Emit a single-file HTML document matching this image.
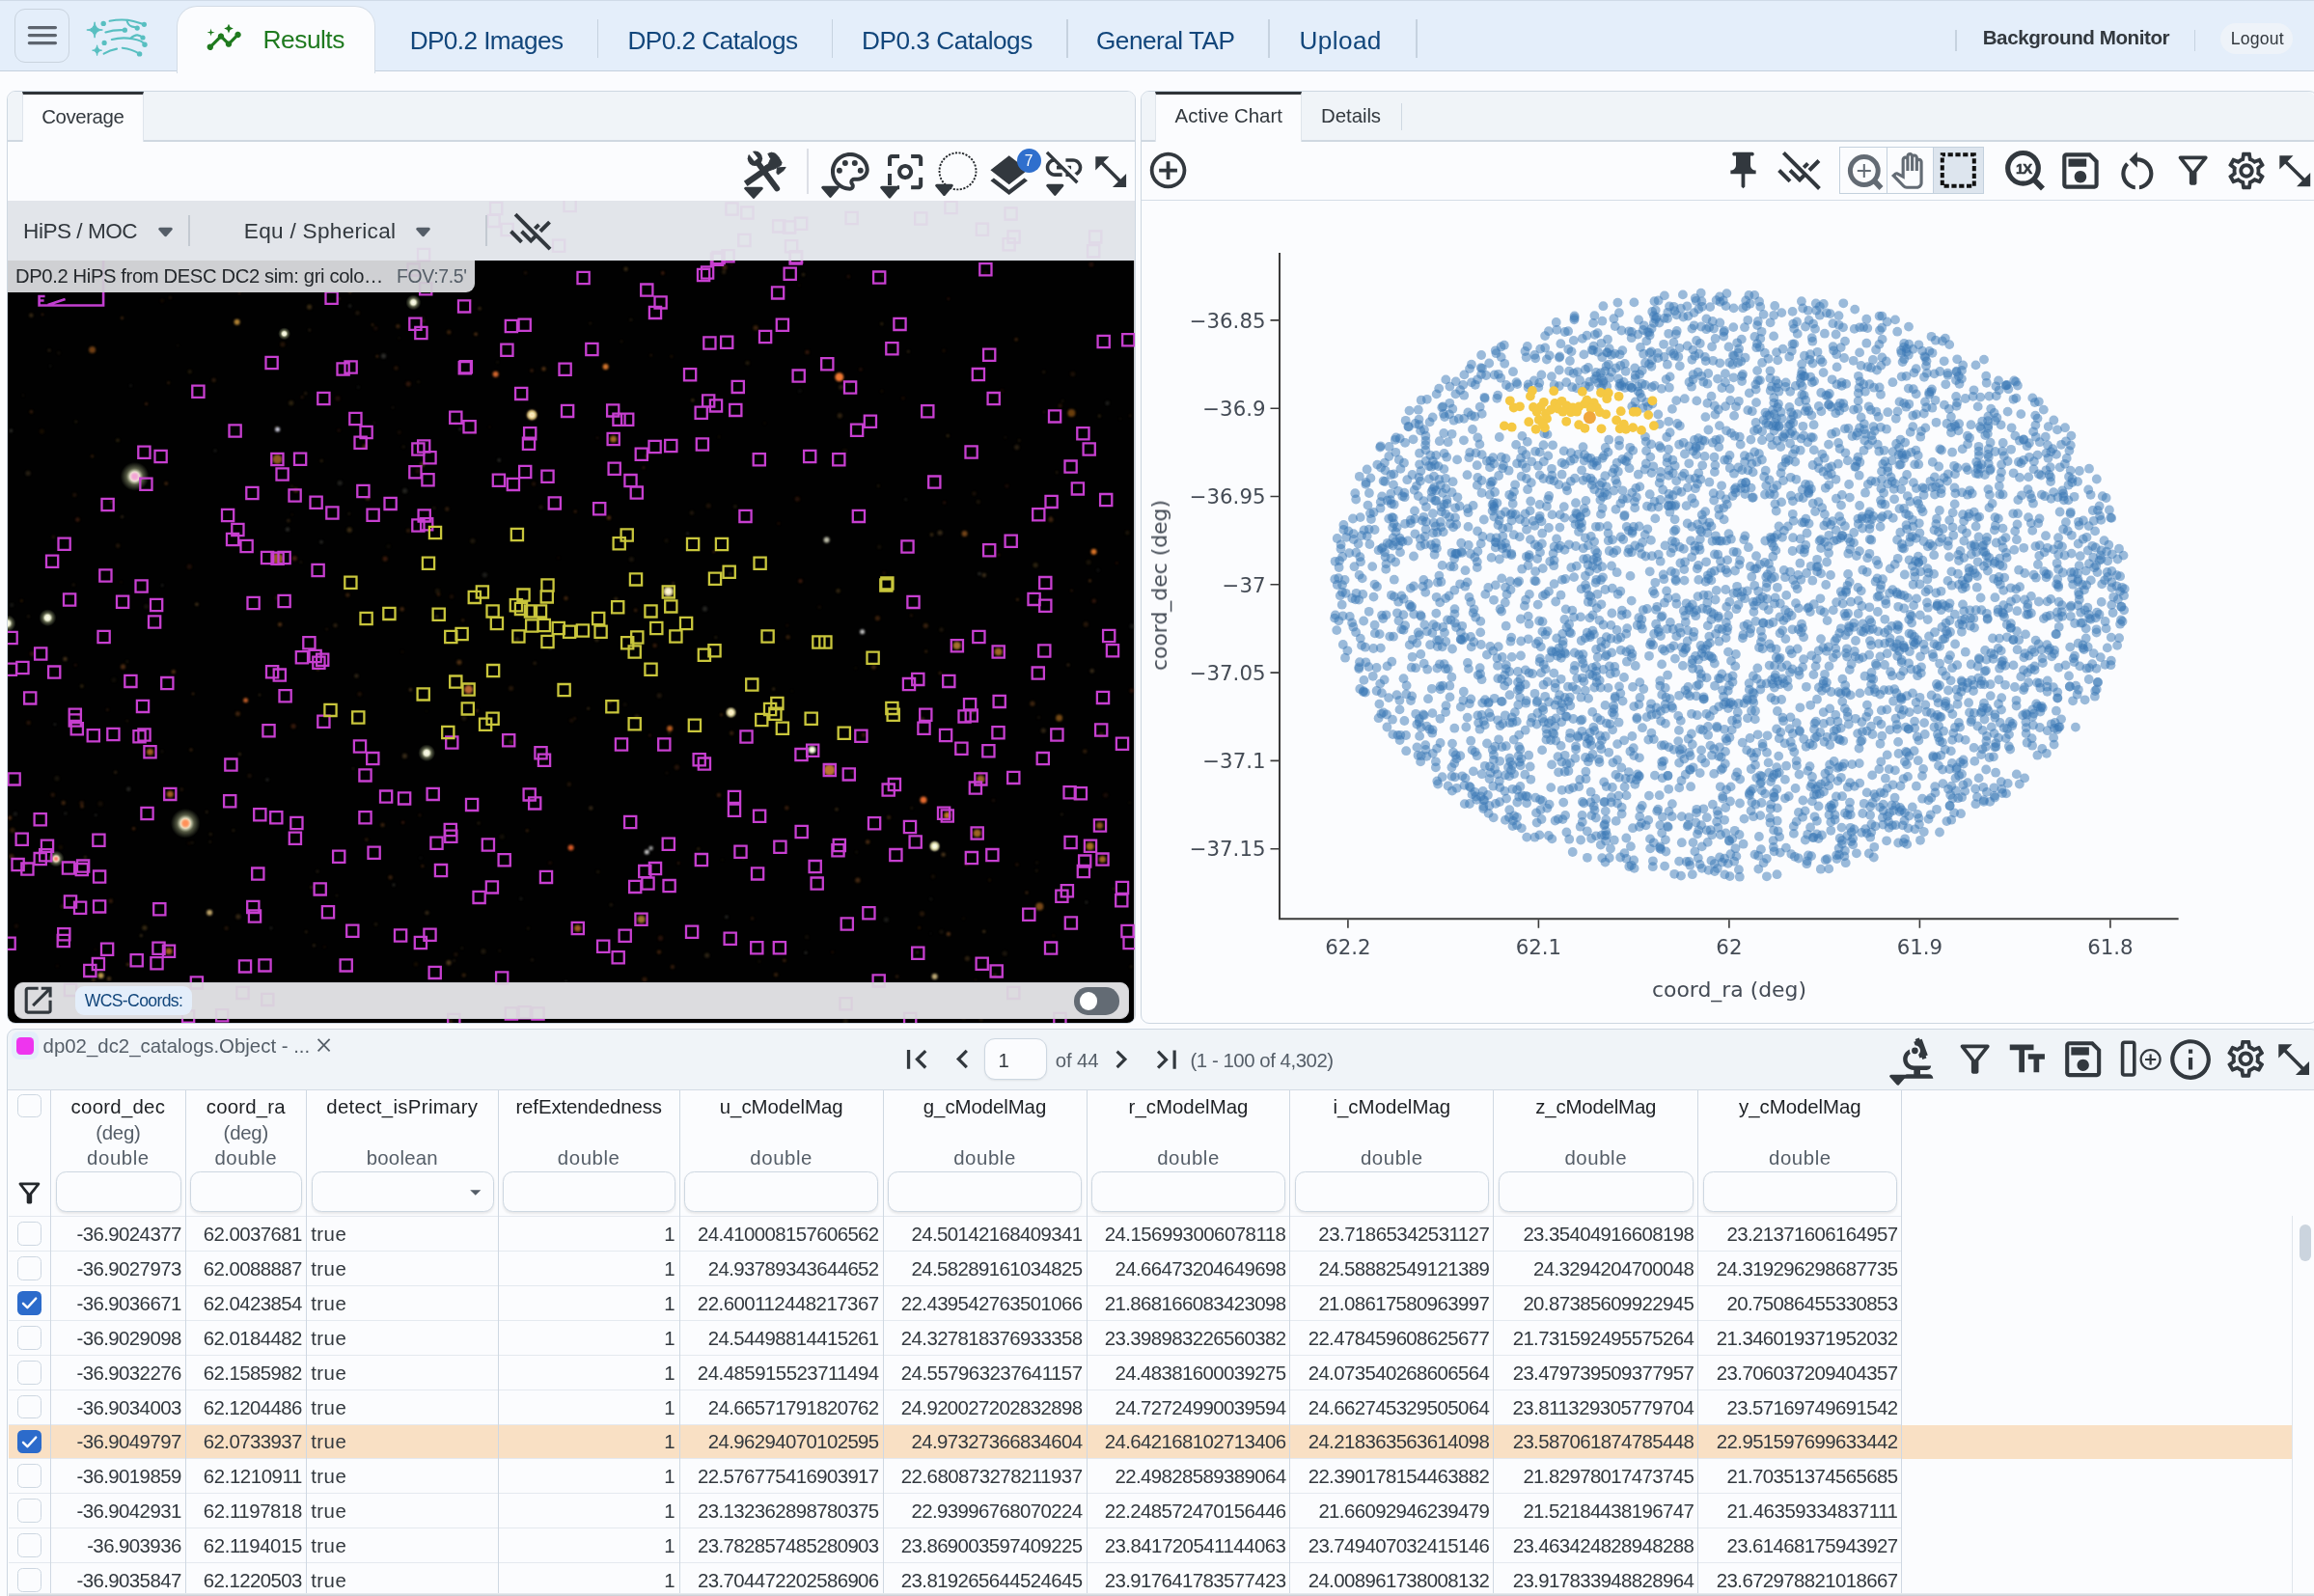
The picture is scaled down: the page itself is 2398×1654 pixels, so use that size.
<!DOCTYPE html><html lang="en"><head><meta charset="utf-8"><title>Portal</title><style>html,body{margin:0;padding:0;background:#FBFCFE}
#r{will-change:transform;position:relative;width:2398px;height:1654px;overflow:hidden;background:#FBFCFE;font-family:"Liberation Sans", Arial, sans-serif}
#r div,#r>svg{position:absolute}
#r .t{white-space:nowrap}
.x1{font-family:"Liberation Sans",Arial,sans-serif;font-weight:700;font-size:14.8px;letter-spacing:-1.1px;stroke:#32383E;stroke-width:.55px}
#r div{box-sizing:border-box}</style></head><body><div id="r"><div style="left:0px;top:0px;width:2398px;height:73.2px;background:#E4EEFA;border-bottom:1.4px solid #c4d0dd;box-sizing:content-box"></div>
<div style="left:0px;top:0px;width:2398px;height:1px;background:#cfdae7"></div>
<div style="left:15px;top:9px;width:57px;height:55.5px;border:1px solid #c9d3de;border-radius:11px;box-sizing:border-box"></div>
<svg style="left:25px;top:22px;" width="40" height="30" viewBox="0 0 40 30"><path d="M5.4 6.6H32.4M5.4 14.6H32.4M5.4 22.6H32.4" stroke="#5d646e" stroke-width="3.4" stroke-linecap="round"/></svg>
<svg style="left:80px;top:10px;" width="90" height="60" viewBox="0 0 90 60"><path d="M18.1 12.8Q18.6 20.5 26.4 21Q18.6 21.5 18.1 29.2Q17.6 21.5 9.8 21Q17.6 20.5 18.1 12.8ZM20.6 36.8Q21.1 41.7 25.6 42.2Q21.1 42.7 20.6 47.6Q20.1 42.7 15.6 42.2Q20.1 41.7 20.6 36.8Z" fill="#58bfc1" stroke="#58bfc1" stroke-width=".9" stroke-linejoin="round"/><g fill="#58bfc1"><circle cx="27.2" cy="14.4" r="2.7"/><circle cx="28.1" cy="34.4" r="2.6"/><circle cx="69.4" cy="15.3" r="2.6"/><circle cx="62.2" cy="19.1" r="2.6"/><circle cx="49.4" cy="21.2" r="2.6"/><circle cx="70" cy="36.3" r="2.7"/><circle cx="68" cy="29" r="2.6"/><circle cx="64.6" cy="45.9" r="2.7"/></g><g fill="none" stroke="#58bfc1" stroke-width="2.1" stroke-linecap="round"><path d="M33.600 11.700C42 10.100 52 10.300 58.300 11.900S66 14 69.400 15.300"/><path d="M51.500 11.300Q53 17 57 17.600T62.200 19.100"/><path d="M29.400 23.400Q38.500 20.600 49.400 21.200"/><path d="M35.800 31Q46.500 28.200 57.500 30.300T70 36.300"/><path d="M55.200 29.700Q59.500 26 62.500 26.400T68 29"/><path d="M27.600 45.700Q34 41.800 41 40.600"/><path d="M46.800 39.700Q57 40.800 64.600 45.900"/></g></svg>
<div style="left:182.6px;top:6px;width:206px;height:70px;background:#FBFCFE;border:1px solid #d3dce6;border-bottom:none;border-radius:21px 21px 0 0;box-sizing:border-box"></div>
<svg style="left:213.2px;top:20.2px;" width="38.4" height="38.4" viewBox="0 0 24 24"><path fill="#1f7a1f" d="M21 8c-1.45 0-2.26 1.44-1.93 2.51l-3.55 3.56c-.3-.09-.74-.09-1.04 0l-2.55-2.55C12.27 10.45 11.46 9 10 9c-1.45 0-2.27 1.44-1.93 2.52l-4.56 4.55C2.44 15.74 1 16.55 1 18c0 1.1.9 2 2 2 1.45 0 2.26-1.44 1.93-2.51l4.55-4.56c.3.09.74.09 1.04 0l2.55 2.55C12.73 16.55 13.54 18 15 18c1.45 0 2.27-1.44 1.93-2.52l3.56-3.55c1.07.33 2.51-.48 2.51-1.93 0-1.1-.9-2-2-2zM15 9l.94-2.07L18 6l-2.06-.93L15 3l-.92 2.07L12 6l2.08.93zM3.5 11L4 9l2-.5L4 8l-.5-2L3 8l-2 .5L3 9z"/></svg>
<div class="t" style="top:27.8px;font-size:26.4px;line-height:26.4px;color:#1f7a1f;letter-spacing:-0.54px;left:272.6px;"><span>Results</span></div>
<div class="t" style="top:28.8px;font-size:26.2px;line-height:26.2px;color:#12467B;letter-spacing:-0.60px;left:424.7px;"><span>DP0.2 Images</span></div>
<div class="t" style="top:28.8px;font-size:26.2px;line-height:26.2px;color:#12467B;letter-spacing:-0.52px;left:650.4px;"><span>DP0.2 Catalogs</span></div>
<div class="t" style="top:28.8px;font-size:26.2px;line-height:26.2px;color:#12467B;letter-spacing:-0.47px;left:893px;"><span>DP0.3 Catalogs</span></div>
<div class="t" style="top:28.8px;font-size:26.2px;line-height:26.2px;color:#12467B;letter-spacing:-0.50px;left:1136px;"><span>General TAP</span></div>
<div class="t" style="top:28.8px;font-size:26.2px;line-height:26.2px;color:#12467B;letter-spacing:0.38px;left:1346.5px;"><span>Upload</span></div>
<div style="left:618.6px;top:20px;width:1.5px;height:40px;background:#c6d2df"></div>
<div style="left:861.9px;top:20px;width:1.5px;height:40px;background:#c6d2df"></div>
<div style="left:1105.1px;top:20px;width:1.5px;height:40px;background:#c6d2df"></div>
<div style="left:1314.3px;top:20px;width:1.5px;height:40px;background:#c6d2df"></div>
<div style="left:1467.3px;top:20px;width:1.5px;height:40px;background:#c6d2df"></div>
<div style="left:2026.2px;top:31px;width:1.5px;height:21.5px;background:#c6d2df"></div>
<div style="left:2273.9px;top:31px;width:1.5px;height:21.5px;background:#c6d2df"></div>
<div class="t" style="top:28.9px;font-size:20.6px;line-height:20.6px;color:#32383E;font-weight:700;letter-spacing:-0.44px;left:2054.7px;"><span>Background Monitor</span></div>
<div style="left:2301px;top:24.2px;width:74.7px;height:31.5px;background:#EEF3F9;border-radius:16px"></div>
<div class="t" style="top:31.8px;font-size:17.6px;line-height:17.6px;color:#32383E;letter-spacing:0.25px;left:2311.7px;"><span>Logout</span></div>
<div style="left:7.4px;top:94.4px;width:1169.2px;height:966.6px;border:1px solid #cdd7e1;border-radius:9px;box-sizing:border-box;background:#FBFCFE;overflow:hidden"></div>
<div style="left:8.4px;top:95.4px;width:1167.2px;height:50.2px;background:#F0F4F8;border-radius:8px 8px 0 0"></div>
<div style="left:8.4px;top:145px;width:1167.2px;height:2px;background:#cfd8e1"></div>
<div style="left:23.3px;top:95px;width:125.4px;height:52px;background:#FBFCFE;border-top:3.2px solid #2e3338;border-left:1px solid #dfe5ec;border-right:1px solid #dfe5ec;box-sizing:border-box"></div>
<div class="t" style="top:110.9px;font-size:20.4px;line-height:20.4px;color:#32383E;letter-spacing:-0.42px;left:43.3px;"><span>Coverage</span></div>
<svg style="left:760px;top:148px;" width="120" height="64" viewBox="0 0 120 64"><g fill="#32383E" stroke="#32383E" stroke-linejoin="round" stroke-width="1"><polygon points="35.8,11.4 39.4,10.1 43.6,11.2 46.7,14.5 50.1,20.5 49.3,23.3 42.5,27.0 36.3,29.0 32.2,24.4 36.3,21.8 38.6,16.6"/><polygon points="45.4,25.9 54.2,25.4 51.9,28.8 46.2,32.9 44.9,31.1"/></g><path d="M36.3 25.9L12.7 42.3" stroke="#32383E" stroke-width="6.3"/><path d="M24.4 19.5L45.2 47.5" stroke="#32383E" stroke-width="5.9" stroke-linecap="round"/><circle cx="22.4" cy="16.2" r="7.7" fill="#32383E"/><path d="M23.6 17.4L17.1 9.3" stroke="#FBFCFE" stroke-width="4.8"/></svg>
<svg style="left:769.5px;top:192.7px;" width="22" height="13.6" viewBox="0 0 22 13.6"><path d="M2.7 2.3 H19.3 L11 11.3 Z" fill="#32383E" stroke="#32383E" stroke-width="3" stroke-linejoin="round"/></svg>
<div style="left:835.9px;top:154px;width:1.8px;height:46.6px;background:#dcdfe6"></div>
<svg style="left:857.3px;top:153.9px;" width="47.7" height="47.7" viewBox="0 0 24 24"><path fill="#32383E" d="M12 22C6.49 22 2 17.51 2 12S6.49 2 12 2s10 4.04 10 9c0 3.31-2.69 6-6 6h-1.77c-.28 0-.5.22-.5.5 0 .12.05.23.13.33.41.47.64 1.06.64 1.67A2.5 2.5 0 0112 22zm0-18c-4.41 0-8 3.59-8 8s3.59 8 8 8c.28 0 .5-.22.5-.5a.54.54 0 00-.14-.35c-.41-.46-.63-1.05-.63-1.65a2.5 2.5 0 012.5-2.5H16c2.21 0 4-1.79 4-4 0-3.86-3.59-7-8-7zM6.5 10a1.5 1.5 0 100 3 1.5 1.5 0 000-3zm3-4a1.5 1.5 0 100 3 1.5 1.5 0 000-3zm5 0a1.5 1.5 0 100 3 1.5 1.5 0 000-3zm3 4a1.5 1.5 0 100 3 1.5 1.5 0 000-3z"/></svg>
<svg style="left:850.2px;top:192.4px;" width="21" height="13.6" viewBox="0 0 21 13.6"><path d="M2.7 2.3 H18.3 L10.5 11.3 Z" fill="#32383E" stroke="#32383E" stroke-width="3" stroke-linejoin="round"/></svg>
<svg style="left:913.9px;top:153.8px;" width="48.2" height="48.2" viewBox="0 0 24 24"><path fill="#32383E" d="M5 15H3v4c0 1.1.9 2 2 2h4v-2H5v-4zM5 5h4V3H5c-1.1 0-2 .9-2 2v4h2V5zm14-2h-4v2h4v4h2V5c0-1.1-.9-2-2-2zm0 16h-4v2h4c1.1 0 2-.9 2-2v-4h-2v4zM12 8c-2.21 0-4 1.79-4 4s1.79 4 4 4 4-1.79 4-4-1.79-4-4-4zm0 6c-1.1 0-2-.9-2-2s.9-2 2-2 2 .9 2 2-.9 2-2 2z"/></svg>
<div style="left:916px;top:186px;width:14px;height:12px;background:#FBFCFE"></div>
<div style="left:920px;top:180px;width:4px;height:12px;background:#32383E"></div>
<svg style="left:910.8px;top:191.6px;" width="21.8" height="14.4" viewBox="0 0 21.8 14.4"><path d="M2.7 2.3 H19.1 L10.9 12.1 Z" fill="#32383E" stroke="#32383E" stroke-width="3" stroke-linejoin="round"/></svg>
<svg style="left:970px;top:155px;" width="46" height="46" viewBox="0 0 46 46"><circle cx="22.5" cy="22.4" r="19" fill="none" stroke="#23272b" stroke-width="1.9" stroke-dasharray="2.1 1.5"/></svg>
<svg style="left:968px;top:189.6px;" width="21" height="13.8" viewBox="0 0 21 13.8"><path d="M2.7 2.3 H18.3 L10.5 11.5 Z" fill="#32383E" stroke="#32383E" stroke-width="3" stroke-linejoin="round"/></svg>
<svg style="left:1019.9px;top:156.5px;" width="51.4" height="51.4" viewBox="0 0 24 24"><path fill="#32383E" d="M11.99 18.54l-7.37-5.73L3 14.07l9 7 9-7-1.63-1.27-7.38 5.74zM12 16l7.36-5.73L21 9l-9-7-9 7 1.63 1.27L12 16z"/></svg>
<div style="left:1053.5px;top:154.3px;width:25px;height:25px;border-radius:50%;background:#2f6fcd"></div>
<div class="t" style="top:159.4px;font-size:15.6px;line-height:15.6px;color:#fff;left:566px;width:1000px;text-align:center;"><span>7</span></div>
<svg style="left:1080.3px;top:151.2px;" width="45.1" height="45.1" viewBox="0 0 24 24"><path fill="#32383E" d="M17 7h-4v1.9h4c1.71 0 3.1 1.39 3.1 3.1 0 1.43-.98 2.63-2.31 2.98l1.46 1.46C20.88 15.61 22 13.95 22 12c0-2.76-2.24-5-5-5zm-1 4h-2.19l2 2H16zM2 4.27l3.11 3.11C3.29 8.12 2 9.91 2 12c0 2.76 2.24 5 5 5h4v-1.9H7c-1.71 0-3.1-1.39-3.1-3.1 0-1.59 1.21-2.9 2.76-3.07L8.73 11H8v2h2.73L13 15.27V17h1.73l4.01 4L20 19.74 3.27 3 2 4.27z"/></svg>
<svg style="left:1083.2px;top:190px;" width="20.6" height="13.6" viewBox="0 0 20.6 13.6"><path d="M2.7 2.3 H17.9 L10.3 11.3 Z" fill="#32383E" stroke="#32383E" stroke-width="3" stroke-linejoin="round"/></svg>
<svg style="left:1130.3px;top:156.6px;" width="42.4" height="42.4" viewBox="0 0 24 24"><path fill="#32383E" d="M21 11V3h-8l3.29 3.29-10 10L3 13v8h8l-3.29-3.29 10-10z" transform="translate(24,0) scale(-1,1)"/></svg>
<svg style="left:8.4px;top:208px;border-radius:0 0 8px 8px" width="1167.2" height="852" viewBox="0 0 1167.2 852"><defs><radialGradient id="sg"><stop offset="0" stop-color="#fffff0" stop-opacity="1"/><stop offset=".32" stop-color="#f6f8dc" stop-opacity=".95"/><stop offset=".58" stop-color="#c8d2a0" stop-opacity=".42"/><stop offset="1" stop-color="#a0b080" stop-opacity="0"/></radialGradient><filter id="bl"><feGaussianBlur stdDeviation="1.1"/></filter><filter id="bl2"><feGaussianBlur stdDeviation="1.3"/></filter></defs><rect width="1167.2" height="852" fill="#010101"/><g filter="url(#bl)"><circle cx="378" cy="128.5" r="1.2" fill="#b86a28" opacity="0.36"/><circle cx="109.9" cy="496.5" r="2.6" fill="#8a6a30" opacity="0.11"/><circle cx="506.2" cy="59.5" r="1.2" fill="#6a6a60" opacity="0.12"/><circle cx="660" cy="807.2" r="2.6" fill="#a85a20" opacity="0.28"/><circle cx="463" cy="831.8" r="1.2" fill="#c87830" opacity="0.19"/><circle cx="168.4" cy="100.4" r="1.8" fill="#c87830" opacity="0.13"/><circle cx="666.7" cy="160.1" r="1.2" fill="#b86a28" opacity="0.28"/><circle cx="722.5" cy="422.9" r="2.6" fill="#6a6a60" opacity="0.35"/><circle cx="543.5" cy="786.8" r="1.8" fill="#907040" opacity="0.18"/><circle cx="209.8" cy="664.4" r="1.2" fill="#907040" opacity="0.27"/><circle cx="1021.5" cy="621.5" r="1.8" fill="#b86a28" opacity="0.14"/><circle cx="488" cy="645.1" r="1.5" fill="#b08040" opacity="0.23"/><circle cx="1122.9" cy="66.1" r="2.6" fill="#a04820" opacity="0.21"/><circle cx="408.7" cy="423.2" r="2.2" fill="#b86a28" opacity="0.37"/><circle cx="1102.6" cy="403.9" r="1.2" fill="#a85a20" opacity="0.33"/><circle cx="361.4" cy="492.4" r="2.2" fill="#907040" opacity="0.33"/><circle cx="1035.4" cy="295.6" r="2.2" fill="#a04820" opacity="0.15"/><circle cx="136.7" cy="50.2" r="1.8" fill="#c87830" opacity="0.34"/><circle cx="464.4" cy="781.1" r="2.2" fill="#b86a28" opacity="0.15"/><circle cx="468.8" cy="236.7" r="1.5" fill="#6a6a60" opacity="0.38"/><circle cx="325" cy="353.8" r="1.8" fill="#6a6a60" opacity="0.41"/><circle cx="176.2" cy="150.1" r="1.5" fill="#8a6a30" opacity="0.10"/><circle cx="970.1" cy="155.4" r="1.8" fill="#a85a20" opacity="0.15"/><circle cx="624" cy="519.6" r="1.8" fill="#c87830" opacity="0.32"/><circle cx="601.7" cy="526.2" r="1.2" fill="#b08040" opacity="0.39"/><circle cx="910.4" cy="745.1" r="2.6" fill="#6a6a60" opacity="0.23"/><circle cx="460" cy="410.3" r="2.2" fill="#a85a20" opacity="0.16"/><circle cx="1149.3" cy="375.4" r="1.2" fill="#a04820" opacity="0.29"/><circle cx="119.5" cy="482.9" r="2.6" fill="#b86a28" opacity="0.40"/><circle cx="716.4" cy="59.9" r="1.5" fill="#6a6a60" opacity="0.15"/><circle cx="294.4" cy="296" r="1.8" fill="#b08040" opacity="0.14"/><circle cx="990.9" cy="846.1" r="2.2" fill="#b08040" opacity="0.25"/><circle cx="100.2" cy="87.1" r="1.8" fill="#907040" opacity="0.25"/><circle cx="807.8" cy="439.9" r="1.5" fill="#a04820" opacity="0.15"/><circle cx="634" cy="23" r="2.6" fill="#907040" opacity="0.41"/><circle cx="1007.7" cy="593.2" r="1.8" fill="#a04820" opacity="0.39"/><circle cx="415.2" cy="189.8" r="2.6" fill="#a04820" opacity="0.30"/><circle cx="715.8" cy="671.7" r="1.5" fill="#8a6a30" opacity="0.36"/><circle cx="863.6" cy="193.2" r="2.6" fill="#b08040" opacity="0.21"/><circle cx="33.8" cy="23.8" r="1.8" fill="#b08040" opacity="0.18"/><circle cx="808.3" cy="815" r="2.2" fill="#a04820" opacity="0.41"/><circle cx="425.6" cy="187.8" r="1.5" fill="#b08040" opacity="0.16"/><circle cx="238.5" cy="531.7" r="2.6" fill="#a85a20" opacity="0.25"/><circle cx="762.2" cy="681.3" r="1.2" fill="#b86a28" opacity="0.39"/><circle cx="913.1" cy="639.1" r="2.2" fill="#c87830" opacity="0.24"/><circle cx="742.2" cy="73.9" r="2.2" fill="#b08040" opacity="0.23"/><circle cx="1105.1" cy="617.5" r="1.5" fill="#c87830" opacity="0.11"/><circle cx="689.6" cy="396.5" r="1.5" fill="#b08040" opacity="0.31"/><circle cx="409" cy="467.5" r="1.5" fill="#a85a20" opacity="0.10"/><circle cx="1133.2" cy="553.5" r="2.6" fill="#c87830" opacity="0.24"/><circle cx="1017.5" cy="703.9" r="1.5" fill="#a85a20" opacity="0.18"/><circle cx="342" cy="204.9" r="2.6" fill="#a04820" opacity="0.18"/><circle cx="489.1" cy="111.7" r="1.8" fill="#b08040" opacity="0.31"/><circle cx="951.3" cy="440.3" r="2.6" fill="#c87830" opacity="0.27"/><circle cx="611" cy="15.9" r="2.2" fill="#c87830" opacity="0.29"/><circle cx="905.8" cy="127.6" r="1.5" fill="#b08040" opacity="0.30"/><circle cx="140.5" cy="52.6" r="2.6" fill="#b08040" opacity="0.35"/><circle cx="123.9" cy="477.4" r="1.5" fill="#8a6a30" opacity="0.19"/><circle cx="901.4" cy="432.6" r="2.6" fill="#a85a20" opacity="0.34"/><circle cx="1065.1" cy="377.6" r="2.6" fill="#8a6a30" opacity="0.32"/><circle cx="528" cy="454.4" r="2.2" fill="#8a6a30" opacity="0.32"/><circle cx="1023.1" cy="802.7" r="1.8" fill="#8a6a30" opacity="0.37"/><circle cx="160.1" cy="103.6" r="2.2" fill="#a04820" opacity="0.12"/><circle cx="280.9" cy="62.3" r="1.8" fill="#b86a28" opacity="0.39"/><circle cx="180.3" cy="610.1" r="1.8" fill="#c87830" opacity="0.18"/><circle cx="160.2" cy="398.5" r="1.2" fill="#6a6a60" opacity="0.38"/><circle cx="190" cy="569" r="1.5" fill="#c87830" opacity="0.33"/><circle cx="1160.3" cy="344" r="2.2" fill="#8a6a30" opacity="0.21"/><circle cx="107.6" cy="311.8" r="1.8" fill="#b08040" opacity="0.24"/><circle cx="21.1" cy="282.4" r="2.6" fill="#907040" opacity="0.26"/><circle cx="75" cy="839.3" r="1.5" fill="#b86a28" opacity="0.13"/><circle cx="317.4" cy="771.8" r="1.5" fill="#907040" opacity="0.34"/><circle cx="956.8" cy="723.8" r="1.8" fill="#6a6a60" opacity="0.15"/><circle cx="1072.9" cy="486.1" r="1.8" fill="#b86a28" opacity="0.19"/><circle cx="933.3" cy="156.2" r="1.2" fill="#907040" opacity="0.40"/><circle cx="740.5" cy="683" r="1.2" fill="#8a6a30" opacity="0.12"/><circle cx="1007" cy="386.6" r="1.8" fill="#6a6a60" opacity="0.40"/><circle cx="312.6" cy="110.1" r="2.6" fill="#8a6a30" opacity="0.40"/><circle cx="1131.3" cy="223.1" r="1.5" fill="#8a6a30" opacity="0.40"/><circle cx="733.8" cy="452.5" r="1.5" fill="#907040" opacity="0.24"/><circle cx="784.5" cy="230.5" r="1.2" fill="#907040" opacity="0.11"/><circle cx="21.5" cy="430.8" r="1.5" fill="#b08040" opacity="0.18"/><circle cx="521.8" cy="560.9" r="2.2" fill="#b08040" opacity="0.27"/><circle cx="1037.3" cy="826.7" r="1.8" fill="#8a6a30" opacity="0.41"/><circle cx="400" cy="709.1" r="1.5" fill="#6a6a60" opacity="0.42"/><circle cx="1146.1" cy="713.1" r="1.2" fill="#b86a28" opacity="0.30"/><circle cx="1027" cy="367" r="1.2" fill="#b86a28" opacity="0.31"/><circle cx="444.6" cy="431.1" r="1.8" fill="#8a6a30" opacity="0.32"/><circle cx="52.8" cy="157.9" r="1.8" fill="#b08040" opacity="0.10"/><circle cx="425" cy="280.2" r="2.6" fill="#a04820" opacity="0.18"/><circle cx="1127.1" cy="263.7" r="1.8" fill="#c87830" opacity="0.10"/><circle cx="445.4" cy="404.4" r="2.6" fill="#8a6a30" opacity="0.18"/><circle cx="906" cy="77.4" r="1.2" fill="#c87830" opacity="0.23"/><circle cx="48.6" cy="19.2" r="1.8" fill="#8a6a30" opacity="0.13"/><circle cx="1117.8" cy="727" r="1.5" fill="#6a6a60" opacity="0.34"/><circle cx="841.2" cy="421.1" r="1.8" fill="#c87830" opacity="0.11"/><circle cx="974.9" cy="759.9" r="2.2" fill="#c87830" opacity="0.39"/><circle cx="878.7" cy="484.3" r="1.2" fill="#8a6a30" opacity="0.13"/><circle cx="48.9" cy="542.8" r="1.2" fill="#6a6a60" opacity="0.37"/><circle cx="651.9" cy="534.9" r="2.6" fill="#8a6a30" opacity="0.26"/><circle cx="3.9" cy="679.6" r="2.6" fill="#b86a28" opacity="0.31"/><circle cx="77.1" cy="627.7" r="1.8" fill="#b86a28" opacity="0.37"/><circle cx="274" cy="644.5" r="1.5" fill="#b08040" opacity="0.26"/><circle cx="446.5" cy="408.1" r="1.8" fill="#a85a20" opacity="0.30"/><circle cx="750.2" cy="66" r="1.5" fill="#a04820" opacity="0.18"/><circle cx="867.5" cy="259.4" r="2.6" fill="#c87830" opacity="0.10"/><circle cx="70.8" cy="229" r="1.2" fill="#8a6a30" opacity="0.32"/><circle cx="339.5" cy="440.1" r="2.2" fill="#b08040" opacity="0.25"/><circle cx="138.3" cy="761.4" r="1.5" fill="#907040" opacity="0.41"/><circle cx="1092.8" cy="14.9" r="2.2" fill="#b86a28" opacity="0.36"/><circle cx="1130" cy="382.9" r="1.8" fill="#6a6a60" opacity="0.17"/><circle cx="1103.7" cy="179.5" r="2.6" fill="#b86a28" opacity="0.15"/><circle cx="611.7" cy="811.7" r="1.5" fill="#907040" opacity="0.38"/><circle cx="820.9" cy="197.1" r="2.2" fill="#6a6a60" opacity="0.11"/><circle cx="4.2" cy="418.9" r="2.2" fill="#6a6a60" opacity="0.20"/><circle cx="164.2" cy="293.1" r="1.8" fill="#b86a28" opacity="0.37"/><circle cx="2" cy="639.6" r="2.2" fill="#b86a28" opacity="0.40"/><circle cx="228.5" cy="10" r="1.8" fill="#907040" opacity="0.22"/><circle cx="458.6" cy="851" r="2.6" fill="#b86a28" opacity="0.22"/><circle cx="499.6" cy="234.4" r="1.2" fill="#907040" opacity="0.13"/><circle cx="974.2" cy="243.4" r="1.5" fill="#8a6a30" opacity="0.41"/><circle cx="509.2" cy="268.9" r="1.8" fill="#6a6a60" opacity="0.38"/><circle cx="947.7" cy="537.5" r="2.6" fill="#8a6a30" opacity="0.33"/><circle cx="57.7" cy="624" r="2.2" fill="#c87830" opacity="0.31"/><circle cx="334.1" cy="41.7" r="2.6" fill="#c87830" opacity="0.15"/><circle cx="484.2" cy="240" r="1.8" fill="#907040" opacity="0.23"/><circle cx="278.6" cy="411.7" r="2.2" fill="#b86a28" opacity="0.15"/><circle cx="188.7" cy="177.1" r="2.2" fill="#8a6a30" opacity="0.24"/><circle cx="388.5" cy="646.9" r="2.2" fill="#c87830" opacity="0.28"/><circle cx="284.9" cy="148.8" r="2.6" fill="#b86a28" opacity="0.20"/><circle cx="429.9" cy="689.6" r="1.5" fill="#a85a20" opacity="0.34"/><circle cx="481.8" cy="352.6" r="2.6" fill="#8a6a30" opacity="0.22"/><circle cx="394.8" cy="52.9" r="1.8" fill="#a04820" opacity="0.14"/><circle cx="587.6" cy="536.4" r="1.5" fill="#b86a28" opacity="0.19"/><circle cx="290" cy="340.6" r="2.2" fill="#6a6a60" opacity="0.41"/><circle cx="990.6" cy="743.7" r="1.2" fill="#c87830" opacity="0.11"/><circle cx="828.1" cy="763.1" r="2.2" fill="#b08040" opacity="0.10"/><circle cx="457" cy="789.7" r="2.6" fill="#b08040" opacity="0.41"/><circle cx="290" cy="92.9" r="1.5" fill="#c87830" opacity="0.27"/><circle cx="796.1" cy="802.1" r="2.2" fill="#b86a28" opacity="0.28"/><circle cx="46.2" cy="666.5" r="1.5" fill="#a85a20" opacity="0.31"/><circle cx="354.6" cy="109" r="1.8" fill="#6a6a60" opacity="0.32"/><circle cx="130.9" cy="59.9" r="2.6" fill="#8a6a30" opacity="0.22"/><circle cx="261" cy="512.1" r="1.2" fill="#907040" opacity="0.42"/><circle cx="325.2" cy="269.5" r="1.5" fill="#b08040" opacity="0.27"/><circle cx="638.5" cy="24.9" r="2.2" fill="#907040" opacity="0.12"/><circle cx="226.6" cy="753.9" r="2.2" fill="#b86a28" opacity="0.18"/><circle cx="778.9" cy="788.2" r="1.5" fill="#b08040" opacity="0.11"/><circle cx="394.6" cy="358.3" r="2.2" fill="#8a6a30" opacity="0.10"/><circle cx="341" cy="720.1" r="1.2" fill="#8a6a30" opacity="0.26"/><circle cx="233.9" cy="652.5" r="1.5" fill="#8a6a30" opacity="0.25"/><circle cx="309.3" cy="757.7" r="1.2" fill="#b08040" opacity="0.30"/><circle cx="1046.4" cy="413.3" r="1.2" fill="#c87830" opacity="0.40"/><circle cx="63.4" cy="20.1" r="2.6" fill="#c87830" opacity="0.23"/><circle cx="828.5" cy="156.9" r="2.2" fill="#a04820" opacity="0.33"/><circle cx="1164.3" cy="793.7" r="1.8" fill="#8a6a30" opacity="0.16"/><circle cx="1092.4" cy="635.9" r="1.2" fill="#907040" opacity="0.31"/><circle cx="441.9" cy="318.5" r="1.8" fill="#b08040" opacity="0.15"/><circle cx="3.4" cy="238.4" r="1.8" fill="#6a6a60" opacity="0.41"/><circle cx="144.4" cy="821.6" r="1.5" fill="#6a6a60" opacity="0.21"/><circle cx="958.9" cy="700.4" r="2.2" fill="#b86a28" opacity="0.12"/><circle cx="552.6" cy="317.6" r="2.2" fill="#8a6a30" opacity="0.20"/><circle cx="860.6" cy="404.3" r="2.2" fill="#8a6a30" opacity="0.36"/><circle cx="894.9" cy="34.6" r="1.2" fill="#b08040" opacity="0.12"/><circle cx="1073.9" cy="219" r="1.2" fill="#a04820" opacity="0.22"/><circle cx="391" cy="812.6" r="1.2" fill="#907040" opacity="0.34"/><circle cx="804.9" cy="787.4" r="1.8" fill="#a85a20" opacity="0.33"/><circle cx="695.1" cy="686.4" r="1.2" fill="#a85a20" opacity="0.36"/><circle cx="125.2" cy="609.7" r="2.2" fill="#6a6a60" opacity="0.35"/><circle cx="1066.3" cy="694.2" r="1.5" fill="#b08040" opacity="0.16"/><circle cx="936.8" cy="629.2" r="1.5" fill="#8a6a30" opacity="0.20"/><circle cx="373" cy="308.3" r="2.6" fill="#b86a28" opacity="0.26"/><circle cx="457.2" cy="136.3" r="2.2" fill="#b86a28" opacity="0.31"/><circle cx="562.2" cy="464" r="1.5" fill="#6a6a60" opacity="0.38"/><circle cx="1153" cy="225.7" r="1.2" fill="#8a6a30" opacity="0.13"/><circle cx="581.8" cy="604.7" r="2.2" fill="#c87830" opacity="0.17"/><circle cx="486.5" cy="528.5" r="1.5" fill="#b86a28" opacity="0.35"/><circle cx="343.1" cy="238" r="1.8" fill="#a04820" opacity="0.18"/><circle cx="303.9" cy="374.4" r="1.5" fill="#8a6a30" opacity="0.18"/><circle cx="328.4" cy="773.2" r="1.5" fill="#a04820" opacity="0.12"/><circle cx="293.7" cy="209.5" r="2.6" fill="#8a6a30" opacity="0.31"/><circle cx="117.4" cy="395.3" r="1.2" fill="#b86a28" opacity="0.10"/><circle cx="1030.4" cy="196.9" r="2.2" fill="#a04820" opacity="0.11"/><circle cx="342.8" cy="101.6" r="1.5" fill="#8a6a30" opacity="0.40"/><circle cx="434.5" cy="737.9" r="2.2" fill="#907040" opacity="0.35"/><circle cx="775.9" cy="5.4" r="2.6" fill="#a04820" opacity="0.17"/><circle cx="430.4" cy="120.4" r="1.5" fill="#907040" opacity="0.11"/><circle cx="854.7" cy="778.7" r="1.2" fill="#a04820" opacity="0.23"/><circle cx="434" cy="529.1" r="1.2" fill="#8a6a30" opacity="0.11"/><circle cx="578.5" cy="411.9" r="2.2" fill="#b86a28" opacity="0.35"/><circle cx="775.1" cy="131.7" r="2.6" fill="#b86a28" opacity="0.31"/><circle cx="464.3" cy="231" r="1.8" fill="#907040" opacity="0.23"/><circle cx="59.9" cy="635" r="1.8" fill="#6a6a60" opacity="0.23"/><circle cx="1008.7" cy="849.1" r="1.8" fill="#8a6a30" opacity="0.23"/><circle cx="472.7" cy="802.6" r="2.2" fill="#c87830" opacity="0.24"/><circle cx="957.5" cy="346.1" r="1.8" fill="#b08040" opacity="0.35"/><circle cx="151.7" cy="44" r="1.5" fill="#6a6a60" opacity="0.13"/><circle cx="726.2" cy="316" r="2.6" fill="#c87830" opacity="0.15"/><circle cx="330.7" cy="444" r="1.2" fill="#b86a28" opacity="0.22"/><circle cx="879.6" cy="674.9" r="1.5" fill="#907040" opacity="0.14"/><circle cx="1100.8" cy="831.2" r="2.2" fill="#a04820" opacity="0.12"/><circle cx="1081" cy="330.5" r="2.6" fill="#c87830" opacity="0.30"/><circle cx="999.8" cy="529.1" r="2.6" fill="#8a6a30" opacity="0.37"/><circle cx="213.6" cy="185.9" r="2.2" fill="#c87830" opacity="0.22"/><circle cx="143.6" cy="210.5" r="1.5" fill="#a85a20" opacity="0.38"/><circle cx="983.3" cy="572.8" r="1.8" fill="#b86a28" opacity="0.22"/><circle cx="531.9" cy="723.4" r="1.8" fill="#6a6a60" opacity="0.20"/><circle cx="290.9" cy="331.6" r="1.8" fill="#b08040" opacity="0.26"/><circle cx="208.7" cy="3" r="2.2" fill="#b08040" opacity="0.18"/><circle cx="891.2" cy="664.5" r="2.2" fill="#c87830" opacity="0.36"/><circle cx="467.3" cy="57.2" r="1.8" fill="#6a6a60" opacity="0.22"/><circle cx="936.4" cy="429.7" r="1.2" fill="#a85a20" opacity="0.30"/><circle cx="96" cy="624.9" r="2.6" fill="#b86a28" opacity="0.12"/><circle cx="588.2" cy="321.9" r="1.5" fill="#a85a20" opacity="0.37"/><circle cx="1162.7" cy="623.7" r="1.2" fill="#8a6a30" opacity="0.14"/><circle cx="1033.8" cy="245.3" r="1.5" fill="#8a6a30" opacity="0.12"/><circle cx="409.6" cy="644.3" r="1.5" fill="#a04820" opacity="0.39"/><circle cx="321" cy="694.9" r="1.5" fill="#907040" opacity="0.26"/><circle cx="1073.7" cy="177.5" r="1.8" fill="#8a6a30" opacity="0.20"/><circle cx="43" cy="155.1" r="1.5" fill="#907040" opacity="0.32"/><circle cx="1045.1" cy="143.8" r="1.8" fill="#b86a28" opacity="0.35"/><circle cx="56.7" cy="731.3" r="2.2" fill="#b86a28" opacity="0.18"/><circle cx="625.3" cy="729.8" r="1.8" fill="#907040" opacity="0.22"/><circle cx="430.6" cy="124.6" r="1.8" fill="#b86a28" opacity="0.24"/><circle cx="206.3" cy="633.5" r="1.2" fill="#907040" opacity="0.36"/><circle cx="296.1" cy="544.6" r="2.6" fill="#a04820" opacity="0.33"/><circle cx="872" cy="188.8" r="1.8" fill="#6a6a60" opacity="0.23"/><circle cx="425" cy="40.7" r="2.2" fill="#8a6a30" opacity="0.30"/><circle cx="53.2" cy="46.3" r="2.6" fill="#a04820" opacity="0.20"/><circle cx="610.5" cy="455.1" r="2.2" fill="#907040" opacity="0.29"/><circle cx="238.3" cy="531.6" r="2.2" fill="#c87830" opacity="0.14"/><circle cx="1093.2" cy="207.5" r="1.5" fill="#b08040" opacity="0.13"/><circle cx="744.9" cy="742.3" r="1.8" fill="#6a6a60" opacity="0.36"/><circle cx="1128.8" cy="47.8" r="2.6" fill="#a04820" opacity="0.29"/><circle cx="675.2" cy="512.8" r="2.6" fill="#b08040" opacity="0.18"/><circle cx="1054.6" cy="37.5" r="2.6" fill="#a85a20" opacity="0.23"/><circle cx="277.4" cy="49.7" r="1.2" fill="#a85a20" opacity="0.30"/><circle cx="766.6" cy="168.1" r="2.2" fill="#8a6a30" opacity="0.27"/><circle cx="750.2" cy="551.8" r="2.2" fill="#c87830" opacity="0.26"/><circle cx="74.4" cy="533.3" r="2.2" fill="#a85a20" opacity="0.22"/><circle cx="509.7" cy="777.2" r="1.2" fill="#b08040" opacity="0.16"/><circle cx="1163.2" cy="222.7" r="1.2" fill="#b86a28" opacity="0.21"/><circle cx="875" cy="592.2" r="1.8" fill="#a85a20" opacity="0.19"/><circle cx="646.4" cy="371.5" r="2.6" fill="#907040" opacity="0.19"/><circle cx="1083.8" cy="761.8" r="1.2" fill="#a85a20" opacity="0.15"/><circle cx="1056" cy="717.1" r="1.5" fill="#c87830" opacity="0.34"/><circle cx="381.5" cy="749.9" r="1.8" fill="#8a6a30" opacity="0.22"/><circle cx="994.4" cy="785.3" r="2.6" fill="#b08040" opacity="0.25"/><circle cx="619.3" cy="5.4" r="1.2" fill="#6a6a60" opacity="0.41"/><circle cx="272.9" cy="753.8" r="1.5" fill="#6a6a60" opacity="0.30"/><circle cx="90.8" cy="776" r="1.5" fill="#a85a20" opacity="0.11"/><circle cx="124.5" cy="791.5" r="1.8" fill="#c87830" opacity="0.32"/><circle cx="36" cy="117.9" r="1.2" fill="#b86a28" opacity="0.34"/><circle cx="76.8" cy="503.1" r="1.8" fill="#8a6a30" opacity="0.36"/><circle cx="956.6" cy="759.4" r="1.2" fill="#6a6a60" opacity="0.13"/><circle cx="240.1" cy="95.4" r="1.2" fill="#b86a28" opacity="0.36"/><circle cx="737.1" cy="244.8" r="1.2" fill="#c87830" opacity="0.13"/><circle cx="884" cy="174.7" r="1.8" fill="#a04820" opacity="0.24"/><circle cx="24.4" cy="218.7" r="1.8" fill="#a85a20" opacity="0.33"/><circle cx="429.6" cy="273.3" r="2.6" fill="#b08040" opacity="0.37"/><circle cx="721.7" cy="26.4" r="2.2" fill="#a85a20" opacity="0.24"/><circle cx="902.3" cy="295.5" r="1.2" fill="#8a6a30" opacity="0.33"/><circle cx="966.2" cy="489.5" r="1.8" fill="#c87830" opacity="0.24"/><circle cx="611.1" cy="245.7" r="1.2" fill="#a85a20" opacity="0.21"/><circle cx="111.7" cy="592.3" r="1.5" fill="#b08040" opacity="0.29"/><circle cx="1117.3" cy="438.9" r="2.6" fill="#c87830" opacity="0.19"/><circle cx="250.6" cy="596" r="2.2" fill="#c87830" opacity="0.14"/><circle cx="743" cy="68.9" r="2.6" fill="#b86a28" opacity="0.30"/><circle cx="415.1" cy="341.9" r="2.2" fill="#b86a28" opacity="0.24"/><circle cx="753.9" cy="316.9" r="1.8" fill="#907040" opacity="0.24"/><circle cx="636.1" cy="145.8" r="1.5" fill="#b08040" opacity="0.14"/><circle cx="693.4" cy="587.2" r="2.6" fill="#a85a20" opacity="0.21"/><circle cx="381.3" cy="132.3" r="2.2" fill="#a04820" opacity="0.15"/><circle cx="512.2" cy="659" r="2.6" fill="#8a6a30" opacity="0.14"/><circle cx="539.3" cy="754.1" r="1.5" fill="#8a6a30" opacity="0.19"/><circle cx="880.9" cy="704.2" r="2.6" fill="#c87830" opacity="0.33"/><circle cx="1137.7" cy="616.1" r="2.6" fill="#a04820" opacity="0.15"/><circle cx="382.9" cy="161.3" r="1.2" fill="#c87830" opacity="0.41"/><circle cx="118.6" cy="327.4" r="1.5" fill="#907040" opacity="0.33"/><circle cx="507.6" cy="167.2" r="1.2" fill="#907040" opacity="0.17"/><circle cx="453.3" cy="28.9" r="2.2" fill="#6a6a60" opacity="0.32"/><circle cx="584.2" cy="538.8" r="2.2" fill="#a85a20" opacity="0.15"/><circle cx="704.6" cy="344.8" r="1.5" fill="#6a6a60" opacity="0.32"/><circle cx="685.6" cy="551.4" r="1.5" fill="#8a6a30" opacity="0.32"/><circle cx="748.8" cy="386.7" r="1.8" fill="#907040" opacity="0.30"/><circle cx="114.2" cy="357.5" r="2.2" fill="#c87830" opacity="0.18"/><circle cx="494.4" cy="387.8" r="2.6" fill="#6a6a60" opacity="0.27"/><circle cx="771.6" cy="743.8" r="1.8" fill="#a85a20" opacity="0.22"/><circle cx="571.7" cy="830.4" r="1.2" fill="#907040" opacity="0.27"/><circle cx="187.7" cy="666.1" r="1.5" fill="#a04820" opacity="0.13"/><circle cx="670.6" cy="461" r="2.2" fill="#a85a20" opacity="0.30"/><circle cx="967.6" cy="444.5" r="2.2" fill="#b08040" opacity="0.17"/><circle cx="798.8" cy="334.4" r="1.2" fill="#a04820" opacity="0.30"/><circle cx="294.7" cy="325.3" r="1.2" fill="#a85a20" opacity="0.12"/><circle cx="1068.5" cy="535.5" r="1.8" fill="#907040" opacity="0.13"/><circle cx="354.2" cy="341.2" r="2.6" fill="#8a6a30" opacity="0.42"/><circle cx="1121.5" cy="393.7" r="1.5" fill="#c87830" opacity="0.40"/><circle cx="80.4" cy="680.2" r="1.5" fill="#b08040" opacity="0.31"/><circle cx="841.2" cy="694.1" r="1.5" fill="#a04820" opacity="0.31"/><circle cx="969.6" cy="677.6" r="2.2" fill="#b08040" opacity="0.42"/><circle cx="886.9" cy="553.5" r="2.2" fill="#a04820" opacity="0.35"/><circle cx="269" cy="600" r="1.8" fill="#6a6a60" opacity="0.32"/><circle cx="562.1" cy="686.2" r="1.8" fill="#a04820" opacity="0.18"/><circle cx="352.3" cy="408.6" r="2.2" fill="#b86a28" opacity="0.31"/><circle cx="423" cy="791.3" r="2.2" fill="#a85a20" opacity="0.13"/><circle cx="659" cy="276.6" r="1.5" fill="#a04820" opacity="0.30"/><circle cx="17.5" cy="9.8" r="1.2" fill="#907040" opacity="0.18"/><circle cx="118.5" cy="121.6" r="1.5" fill="#c87830" opacity="0.35"/><circle cx="404.4" cy="130.1" r="2.2" fill="#c87830" opacity="0.30"/><circle cx="803.1" cy="832.6" r="1.2" fill="#907040" opacity="0.16"/><circle cx="808.6" cy="452.2" r="2.2" fill="#b86a28" opacity="0.28"/><circle cx="308.7" cy="199.5" r="1.5" fill="#b08040" opacity="0.26"/><circle cx="68.2" cy="398" r="1.5" fill="#b08040" opacity="0.18"/><circle cx="192.1" cy="510.9" r="1.2" fill="#c87830" opacity="0.37"/><circle cx="546.2" cy="479.3" r="1.8" fill="#b08040" opacity="0.22"/><circle cx="488.8" cy="818.4" r="1.2" fill="#c87830" opacity="0.30"/><circle cx="742.5" cy="24.3" r="2.6" fill="#a85a20" opacity="0.32"/><circle cx="1087.2" cy="281.5" r="1.2" fill="#b08040" opacity="0.26"/><circle cx="1047.6" cy="28.9" r="2.2" fill="#c87830" opacity="0.21"/><circle cx="1005.8" cy="312" r="2.2" fill="#8a6a30" opacity="0.19"/><circle cx="399.1" cy="214.3" r="1.2" fill="#907040" opacity="0.19"/><circle cx="966.1" cy="344" r="2.6" fill="#907040" opacity="0.38"/><circle cx="402.5" cy="173.4" r="2.2" fill="#b86a28" opacity="0.21"/><circle cx="370.1" cy="254.9" r="2.6" fill="#b86a28" opacity="0.35"/><circle cx="46.7" cy="615.7" r="2.2" fill="#a85a20" opacity="0.23"/><circle cx="126.6" cy="39.5" r="2.2" fill="#a85a20" opacity="0.35"/><circle cx="1061.9" cy="521.2" r="2.6" fill="#c87830" opacity="0.30"/><circle cx="812.8" cy="508.1" r="1.2" fill="#8a6a30" opacity="0.11"/><circle cx="739.5" cy="532.7" r="1.5" fill="#b86a28" opacity="0.31"/><circle cx="1014.5" cy="359.2" r="1.2" fill="#a85a20" opacity="0.22"/><circle cx="960.2" cy="670.1" r="2.6" fill="#907040" opacity="0.38"/><circle cx="215.7" cy="29.2" r="1.2" fill="#6a6a60" opacity="0.28"/><circle cx="675" cy="778.6" r="2.2" fill="#a85a20" opacity="0.36"/><circle cx="903.2" cy="358.8" r="2.2" fill="#b08040" opacity="0.12"/><circle cx="793.7" cy="506" r="1.5" fill="#b08040" opacity="0.35"/><circle cx="640.6" cy="70.7" r="2.2" fill="#8a6a30" opacity="0.39"/><circle cx="731.7" cy="363.8" r="1.2" fill="#b86a28" opacity="0.42"/><circle cx="1002" cy="185.9" r="1.2" fill="#c87830" opacity="0.25"/><circle cx="321.5" cy="484.8" r="2.2" fill="#c87830" opacity="0.40"/><circle cx="427" cy="636.7" r="1.5" fill="#b86a28" opacity="0.19"/><circle cx="650.7" cy="424.4" r="1.8" fill="#a85a20" opacity="0.33"/><circle cx="13.3" cy="12.5" r="2.6" fill="#b86a28" opacity="0.22"/><circle cx="364.7" cy="511.3" r="2.2" fill="#a85a20" opacity="0.20"/><circle cx="1107.4" cy="620.1" r="2.2" fill="#c87830" opacity="0.15"/><circle cx="930.7" cy="309.5" r="1.5" fill="#6a6a60" opacity="0.25"/><circle cx="908.2" cy="385.7" r="1.8" fill="#a04820" opacity="0.19"/><circle cx="70.8" cy="829.8" r="2.6" fill="#a04820" opacity="0.38"/><circle cx="847" cy="13.2" r="1.5" fill="#907040" opacity="0.29"/><circle cx="1139.6" cy="209.7" r="2.2" fill="#6a6a60" opacity="0.29"/><circle cx="1045.9" cy="688" r="1.8" fill="#a85a20" opacity="0.20"/><circle cx="312.8" cy="134" r="1.2" fill="#907040" opacity="0.37"/><circle cx="947.5" cy="738.9" r="2.6" fill="#c87830" opacity="0.19"/><circle cx="993.5" cy="687.6" r="2.2" fill="#a04820" opacity="0.27"/><circle cx="630.3" cy="413" r="2.2" fill="#8a6a30" opacity="0.35"/><circle cx="842.9" cy="836.9" r="1.8" fill="#a85a20" opacity="0.32"/><circle cx="543.1" cy="176" r="1.8" fill="#a85a20" opacity="0.35"/><circle cx="536.6" cy="74.7" r="1.8" fill="#b86a28" opacity="0.17"/><circle cx="676.5" cy="764.2" r="2.6" fill="#a04820" opacity="0.25"/><circle cx="687.9" cy="161.2" r="1.5" fill="#b86a28" opacity="0.16"/><circle cx="818.3" cy="309.1" r="2.6" fill="#a04820" opacity="0.23"/><circle cx="603.7" cy="127" r="1.2" fill="#b08040" opacity="0.22"/><circle cx="123.9" cy="539.1" r="1.2" fill="#c87830" opacity="0.20"/><circle cx="35.4" cy="239" r="2.6" fill="#a85a20" opacity="0.13"/><circle cx="238.9" cy="741.9" r="2.6" fill="#b08040" opacity="0.29"/><circle cx="249.3" cy="788.5" r="1.8" fill="#6a6a60" opacity="0.13"/><circle cx="521.6" cy="505.3" r="2.6" fill="#c87830" opacity="0.18"/><circle cx="44.2" cy="171.2" r="1.5" fill="#6a6a60" opacity="0.13"/><circle cx="59.5" cy="474.9" r="2.2" fill="#b08040" opacity="0.40"/><circle cx="1062.1" cy="54.7" r="2.6" fill="#6a6a60" opacity="0.40"/><circle cx="824.5" cy="76.6" r="1.8" fill="#8a6a30" opacity="0.31"/><circle cx="1116.3" cy="570.6" r="2.2" fill="#c87830" opacity="0.24"/><circle cx="186.4" cy="822.8" r="1.5" fill="#c87830" opacity="0.11"/><circle cx="298.6" cy="299.9" r="2.6" fill="#a85a20" opacity="0.37"/><circle cx="54.9" cy="670" r="2.2" fill="#a85a20" opacity="0.13"/><circle cx="370.8" cy="4.9" r="1.5" fill="#907040" opacity="0.29"/><circle cx="515.1" cy="555.9" r="2.2" fill="#a04820" opacity="0.22"/><circle cx="455.3" cy="319.5" r="2.2" fill="#c87830" opacity="0.24"/><circle cx="942.6" cy="779" r="1.2" fill="#b08040" opacity="0.33"/><circle cx="227.7" cy="30.7" r="1.5" fill="#b86a28" opacity="0.40"/><circle cx="1011.7" cy="757.2" r="1.5" fill="#b08040" opacity="0.41"/><circle cx="1080.8" cy="328.1" r="1.2" fill="#b86a28" opacity="0.24"/><circle cx="396.6" cy="701.2" r="2.2" fill="#b86a28" opacity="0.30"/><circle cx="166.6" cy="188.8" r="1.2" fill="#c87830" opacity="0.33"/><circle cx="645.9" cy="123.3" r="1.5" fill="#907040" opacity="0.23"/><circle cx="288" cy="21.7" r="2.6" fill="#907040" opacity="0.21"/><circle cx="195.9" cy="418.3" r="1.8" fill="#b08040" opacity="0.39"/><circle cx="133.3" cy="833.8" r="1.2" fill="#8a6a30" opacity="0.28"/><circle cx="974.9" cy="101.5" r="1.5" fill="#a04820" opacity="0.24"/><circle cx="305.2" cy="203.4" r="1.5" fill="#b86a28" opacity="0.22"/><circle cx="485.1" cy="138.2" r="1.8" fill="#c87830" opacity="0.41"/><circle cx="18.7" cy="687.6" r="1.8" fill="#c87830" opacity="0.24"/><circle cx="921.6" cy="804" r="1.8" fill="#c87830" opacity="0.22"/><circle cx="47.3" cy="348.4" r="1.8" fill="#c87830" opacity="0.14"/><circle cx="210.2" cy="656.4" r="1.5" fill="#8a6a30" opacity="0.29"/><circle cx="967.6" cy="757.7" r="2.2" fill="#907040" opacity="0.16"/><circle cx="160" cy="570.8" r="1.5" fill="#907040" opacity="0.16"/><circle cx="76.7" cy="624.3" r="2.2" fill="#a85a20" opacity="0.27"/><circle cx="405.8" cy="240.1" r="2.2" fill="#b86a28" opacity="0.10"/><circle cx="1062.4" cy="406.1" r="1.8" fill="#8a6a30" opacity="0.16"/><circle cx="970.7" cy="312.8" r="1.5" fill="#a04820" opacity="0.28"/><circle cx="1001.5" cy="303.4" r="2.2" fill="#b86a28" opacity="0.14"/><circle cx="834.1" cy="695.7" r="1.8" fill="#6a6a60" opacity="0.28"/><circle cx="1048.2" cy="248.4" r="1.2" fill="#b08040" opacity="0.24"/><circle cx="29.9" cy="685.4" r="1.5" fill="#a85a20" opacity="0.18"/><circle cx="103.4" cy="527.5" r="1.5" fill="#b86a28" opacity="0.20"/><circle cx="648.2" cy="814" r="1.2" fill="#b86a28" opacity="0.40"/><circle cx="862.3" cy="222.7" r="2.6" fill="#b08040" opacity="0.27"/><circle cx="820.1" cy="87.6" r="1.2" fill="#c87830" opacity="0.11"/><circle cx="143.6" cy="420.5" r="2.6" fill="#907040" opacity="0.14"/><circle cx="141.9" cy="753.5" r="2.6" fill="#8a6a30" opacity="0.38"/><circle cx="171.8" cy="488.1" r="2.2" fill="#c87830" opacity="0.40"/><circle cx="21.6" cy="541" r="2.2" fill="#a85a20" opacity="0.23"/><circle cx="1098.7" cy="661.9" r="1.8" fill="#6a6a60" opacity="0.18"/><circle cx="391.1" cy="371.1" r="2.6" fill="#a04820" opacity="0.36"/><circle cx="989.4" cy="45.6" r="2.6" fill="#c87830" opacity="0.41"/><circle cx="1090.6" cy="212.4" r="2.2" fill="#a85a20" opacity="0.22"/><circle cx="619.5" cy="59" r="2.2" fill="#8a6a30" opacity="0.26"/><circle cx="24.3" cy="118.8" r="2.2" fill="#b08040" opacity="0.30"/><circle cx="944.6" cy="753.5" r="1.2" fill="#a85a20" opacity="0.38"/><circle cx="724.7" cy="782.1" r="2.6" fill="#907040" opacity="0.30"/><circle cx="941.1" cy="30.5" r="1.2" fill="#907040" opacity="0.14"/><circle cx="16" cy="201.6" r="1.2" fill="#907040" opacity="0.14"/><circle cx="405.7" cy="142.3" r="1.2" fill="#907040" opacity="0.13"/><circle cx="688.9" cy="794" r="2.2" fill="#b86a28" opacity="0.26"/><circle cx="1033.2" cy="780.1" r="2.6" fill="#907040" opacity="0.19"/><circle cx="859" cy="630.8" r="1.8" fill="#b08040" opacity="0.30"/><circle cx="665.5" cy="554.1" r="1.5" fill="#a04820" opacity="0.25"/><circle cx="639.7" cy="522.1" r="2.2" fill="#907040" opacity="0.11"/><circle cx="389.5" cy="160.9" r="2.6" fill="#6a6a60" opacity="0.41"/><circle cx="462.7" cy="787.4" r="1.5" fill="#8a6a30" opacity="0.20"/><circle cx="379.9" cy="230" r="1.5" fill="#907040" opacity="0.12"/><circle cx="25.4" cy="469.6" r="2.6" fill="#a04820" opacity="0.24"/><circle cx="72.4" cy="330.5" r="2.2" fill="#a04820" opacity="0.34"/><circle cx="127.5" cy="191.8" r="1.5" fill="#6a6a60" opacity="0.21"/><circle cx="411.4" cy="575.4" r="2.6" fill="#907040" opacity="0.36"/><circle cx="604.3" cy="629.4" r="2.2" fill="#907040" opacity="0.35"/><circle cx="827" cy="779.3" r="1.5" fill="#6a6a60" opacity="0.38"/><circle cx="5" cy="652.4" r="2.6" fill="#b86a28" opacity="0.26"/><circle cx="1123.7" cy="487.3" r="2.2" fill="#907040" opacity="0.38"/><circle cx="708.9" cy="323.4" r="2.2" fill="#b08040" opacity="0.19"/><circle cx="411.6" cy="300.7" r="2.6" fill="#6a6a60" opacity="0.31"/><circle cx="7.9" cy="635.4" r="2.2" fill="#6a6a60" opacity="0.24"/><circle cx="215" cy="259" r="1.5" fill="#6a6a60" opacity="0.28"/><circle cx="678.8" cy="74.9" r="1.8" fill="#a04820" opacity="0.41"/><circle cx="709.8" cy="206.7" r="1.8" fill="#8a6a30" opacity="0.41"/><circle cx="1040.3" cy="814.4" r="1.2" fill="#a85a20" opacity="0.18"/><circle cx="1045.7" cy="255.4" r="2.6" fill="#907040" opacity="0.27"/><circle cx="1165.2" cy="440.9" r="2.6" fill="#6a6a60" opacity="0.22"/><circle cx="417.5" cy="506.7" r="1.8" fill="#b08040" opacity="0.40"/><circle cx="789.6" cy="447.5" r="1.2" fill="#6a6a60" opacity="0.22"/><circle cx="467.9" cy="478.3" r="2.6" fill="#c87830" opacity="0.38"/><circle cx="1125.7" cy="414.7" r="2.2" fill="#a04820" opacity="0.32"/><circle cx="871.3" cy="78.6" r="1.8" fill="#a04820" opacity="0.22"/><circle cx="87.6" cy="264.7" r="1.5" fill="#b86a28" opacity="0.31"/><circle cx="344.2" cy="292.5" r="2.6" fill="#6a6a60" opacity="0.30"/><circle cx="611.7" cy="695.4" r="1.5" fill="#8a6a30" opacity="0.23"/><circle cx="70.2" cy="481.3" r="1.2" fill="#a04820" opacity="0.28"/><circle cx="736.9" cy="615.9" r="2.2" fill="#a85a20" opacity="0.35"/><circle cx="358" cy="588.5" r="1.2" fill="#907040" opacity="0.23"/><circle cx="115" cy="13.2" r="1.2" fill="#8a6a30" opacity="0.16"/><circle cx="897.5" cy="483.1" r="2.6" fill="#c87830" opacity="0.28"/><circle cx="479.8" cy="103.5" r="1.5" fill="#b86a28" opacity="0.11"/><circle cx="88.9" cy="807.6" r="2.2" fill="#b08040" opacity="0.30"/><circle cx="941.5" cy="52.9" r="1.2" fill="#a04820" opacity="0.15"/><circle cx="278.1" cy="234.7" r="1.2" fill="#907040" opacity="0.30"/><circle cx="1003" cy="807.4" r="1.2" fill="#a04820" opacity="0.16"/><circle cx="728.3" cy="16.7" r="1.5" fill="#6a6a60" opacity="0.29"/><circle cx="1120.1" cy="374.6" r="2.6" fill="#8a6a30" opacity="0.18"/><circle cx="51.3" cy="793.1" r="1.5" fill="#a04820" opacity="0.10"/><circle cx="1011.9" cy="388" r="2.2" fill="#907040" opacity="0.41"/><circle cx="578.4" cy="809.2" r="1.5" fill="#6a6a60" opacity="0.32"/><circle cx="682.6" cy="352.3" r="2.2" fill="#b08040" opacity="0.11"/><circle cx="1013.4" cy="74.5" r="1.5" fill="#a04820" opacity="0.22"/><circle cx="8.9" cy="751.7" r="2.2" fill="#a04820" opacity="0.14"/><circle cx="623" cy="328.5" r="2.2" fill="#b86a28" opacity="0.41"/><circle cx="492.9" cy="777.9" r="2.6" fill="#8a6a30" opacity="0.22"/><circle cx="545.1" cy="293.5" r="2.2" fill="#a85a20" opacity="0.19"/><circle cx="29.5" cy="685.8" r="1.5" fill="#c87830" opacity="0.13"/><circle cx="314.8" cy="711.4" r="1.5" fill="#b08040" opacity="0.25"/><circle cx="927.9" cy="204.6" r="1.8" fill="#a04820" opacity="0.17"/><circle cx="472.9" cy="536.2" r="2.6" fill="#8a6a30" opacity="0.20"/><circle cx="555.5" cy="174.2" r="2.2" fill="#c87830" opacity="0.40"/><circle cx="1164.8" cy="507.8" r="2.2" fill="#a04820" opacity="0.27"/><circle cx="471.7" cy="434.7" r="1.5" fill="#b86a28" opacity="0.32"/><circle cx="106.8" cy="725.8" r="2.2" fill="#a85a20" opacity="0.31"/><circle cx="662.6" cy="264.8" r="2.2" fill="#b86a28" opacity="0.32"/><circle cx="905.9" cy="197.3" r="1.5" fill="#b86a28" opacity="0.12"/><circle cx="1066.6" cy="686" r="1.8" fill="#8a6a30" opacity="0.12"/><circle cx="363.3" cy="192.9" r="1.5" fill="#6a6a60" opacity="0.19"/><circle cx="470.8" cy="774.4" r="1.5" fill="#907040" opacity="0.16"/><circle cx="427.9" cy="681.1" r="1.8" fill="#6a6a60" opacity="0.11"/><circle cx="821.5" cy="394.1" r="2.2" fill="#a04820" opacity="0.39"/><circle cx="114" cy="248.3" r="1.8" fill="#8a6a30" opacity="0.33"/><circle cx="47.2" cy="34.1" r="1.5" fill="#6a6a60" opacity="0.16"/><circle cx="353.8" cy="324.4" r="1.2" fill="#907040" opacity="0.30"/><circle cx="1099" cy="481" r="1.5" fill="#b08040" opacity="0.33"/><circle cx="297.3" cy="370.6" r="2.6" fill="#a04820" opacity="0.40"/><circle cx="130.6" cy="650.7" r="1.8" fill="#a85a20" opacity="0.38"/><circle cx="683" cy="593" r="1.5" fill="#b86a28" opacity="0.11"/><circle cx="371.8" cy="662.1" r="1.8" fill="#b86a28" opacity="0.23"/><circle cx="868.3" cy="850.4" r="2.6" fill="#8a6a30" opacity="0.19"/><circle cx="105" cy="806.3" r="2.2" fill="#b08040" opacity="0.40"/><circle cx="807.3" cy="629.3" r="2.2" fill="#a85a20" opacity="0.32"/><circle cx="240.4" cy="573.5" r="1.5" fill="#b08040" opacity="0.34"/><circle cx="51" cy="598.7" r="2.6" fill="#907040" opacity="0.16"/><circle cx="191.1" cy="665.3" r="1.5" fill="#907040" opacity="0.18"/><circle cx="69.3" cy="304.9" r="2.2" fill="#b86a28" opacity="0.16"/><circle cx="362.5" cy="116.3" r="2.2" fill="#b08040" opacity="0.18"/><circle cx="282.1" cy="439.1" r="2.2" fill="#c87830" opacity="0.40"/><circle cx="410.2" cy="255.1" r="1.5" fill="#8a6a30" opacity="0.21"/><circle cx="951.7" cy="467.1" r="1.5" fill="#c87830" opacity="0.29"/><circle cx="538.3" cy="652.8" r="1.5" fill="#b86a28" opacity="0.32"/><circle cx="14.4" cy="414.6" r="1.2" fill="#a85a20" opacity="0.39"/><circle cx="354.7" cy="94.2" r="1.8" fill="#b08040" opacity="0.41"/><circle cx="188.3" cy="379.2" r="2.6" fill="#a04820" opacity="0.19"/><circle cx="650.8" cy="38.8" r="2.2" fill="#b08040" opacity="0.13"/><circle cx="837" cy="835.1" r="2.6" fill="#907040" opacity="0.13"/><circle cx="570.6" cy="370" r="1.5" fill="#a04820" opacity="0.10"/><circle cx="1073.3" cy="549.1" r="2.6" fill="#907040" opacity="0.31"/><circle cx="91.2" cy="636.8" r="1.2" fill="#6a6a60" opacity="0.37"/></g><g filter="url(#bl2)"><circle cx="279.6" cy="237" r="2.5" fill="#dde" opacity="0.9"/><circle cx="237.6" cy="125.8" r="3" fill="#d9a040" opacity="0.8"/><circle cx="87.6" cy="154.5" r="3.5" fill="#b86820" opacity="0.6"/><circle cx="279.6" cy="371" r="6" fill="#d08030" opacity="0.7"/><circle cx="279.4" cy="268" r="5" fill="#c88030" opacity="0.7"/><circle cx="543.2" cy="222" r="5" fill="#ffcc77" opacity="1"/><circle cx="505.6" cy="179.8" r="3" fill="#e87030" opacity="0.9"/><circle cx="619.6" cy="172" r="3" fill="#e88030" opacity="0.9"/><circle cx="684.6" cy="405" r="5" fill="#ffe0b0" opacity="1"/><circle cx="861.8" cy="182.8" r="4.5" fill="#f07830" opacity="1"/><circle cx="1125.5" cy="363.8" r="3" fill="#f08028" opacity="0.9"/><circle cx="848.6" cy="351.5" r="3" fill="#e8e8d0" opacity="0.8"/><circle cx="1102.4" cy="220" r="4" fill="#b06818" opacity="0.6"/><circle cx="991.6" cy="345" r="3" fill="#c07028" opacity="0.6"/><circle cx="885.6" cy="446.7" r="2.5" fill="#eee" opacity="0.8"/><circle cx="209.1" cy="737.7" r="3" fill="#e8c880" opacity="0.8"/><circle cx="246.6" cy="517.7" r="2.5" fill="#e87030" opacity="0.8"/><circle cx="96.6" cy="803" r="3" fill="#e8c060" opacity="0.8"/><circle cx="749.5" cy="530.4" r="4.5" fill="#ffe0a0" opacity="0.95"/><circle cx="583.6" cy="670.5" r="3" fill="#e86028" opacity="0.9"/><circle cx="662.3" cy="675" r="2.5" fill="#eee" opacity="0.8"/><circle cx="666.6" cy="671" r="2.2" fill="#ddd" opacity="0.7"/><circle cx="686.1" cy="547" r="3" fill="#e07028" opacity="0.8"/><circle cx="833.6" cy="569" r="3.5" fill="#fff" opacity="1"/><circle cx="960.6" cy="669" r="4.5" fill="#fff0c0" opacity="1"/><circle cx="949" cy="621" r="3.5" fill="#f07030" opacity="0.95"/><circle cx="851.6" cy="590" r="6" fill="#e89040" opacity="0.8"/><circle cx="960.6" cy="804" r="3" fill="#e8d090" opacity="0.8"/><circle cx="1089.6" cy="536" r="3.5" fill="#c07820" opacity="0.6"/><circle cx="1069.3" cy="731.4" r="4" fill="#c87828" opacity="0.6"/><circle cx="1026.6" cy="467.5" r="4" fill="#e09030" opacity="0.7"/><circle cx="983.6" cy="461" r="4" fill="#e8a040" opacity="0.7"/><circle cx="1004.6" cy="655.5" r="4" fill="#e09030" opacity="0.7"/><circle cx="1121.6" cy="669" r="4" fill="#e8a030" opacity="0.7"/><circle cx="1134.5" cy="682.6" r="3.5" fill="#e09030" opacity="0.7"/><circle cx="1131.6" cy="647.5" r="3.5" fill="#e09030" opacity="0.6"/><circle cx="1008.4" cy="599.4" r="4" fill="#d89040" opacity="0.7"/><circle cx="477.6" cy="506.6" r="4.5" fill="#e88040" opacity="0.8"/><circle cx="168.3" cy="614.9" r="3.5" fill="#e08030" opacity="0.7"/><circle cx="147.5" cy="571.3" r="3.5" fill="#e08030" opacity="0.7"/><circle cx="167" cy="777.8" r="3.5" fill="#e08030" opacity="0.7"/><circle cx="973.6" cy="637" r="3.5" fill="#e89030" opacity="0.8"/><circle cx="627.6" cy="247" r="3.5" fill="#e09030" opacity="0.7"/><circle cx="590.6" cy="754" r="3.5" fill="#e08030" opacity="0.7"/><circle cx="656.6" cy="744.7" r="4" fill="#d8a040" opacity="0.7"/></g><circle cx="131.6" cy="285.8" r="15" fill="url(#sg)"/><circle cx="184.2" cy="645.3" r="15.5" fill="url(#sg)"/><circle cx="50.1" cy="682" r="8.5" fill="url(#sg)"/><circle cx="41.4" cy="432.2" r="9" fill="url(#sg)"/><circle cx="434.2" cy="572.3" r="9" fill="url(#sg)"/><circle cx="420.4" cy="105.4" r="8" fill="url(#sg)"/><circle cx="286.6" cy="137.8" r="6.5" fill="url(#sg)"/><circle cx="-0.4" cy="438" r="9" fill="url(#sg)"/><circle cx="543.2" cy="222" r="6" fill="url(#sg)"/><circle cx="833.6" cy="569" r="5" fill="url(#sg)"/><circle cx="960.6" cy="669" r="6" fill="url(#sg)"/><circle cx="749.5" cy="530.4" r="6" fill="url(#sg)"/><circle cx="684.6" cy="405" r="6" fill="url(#sg)"/><g filter="url(#bl)"><circle cx="131.6" cy="285.8" r="4.1" fill="#f3a4d4"/><circle cx="184.2" cy="645.3" r="4.2" fill="#ff9058"/><circle cx="50.1" cy="682" r="2.3" fill="#ff6858"/><circle cx="543.2" cy="222" r="1.6" fill="#ffcc77"/><circle cx="749.5" cy="530.4" r="1.6" fill="#ffe0a0"/><circle cx="684.6" cy="405" r="1.6" fill="#ffe8c0"/></g><path d="M99.1 62V108.5H32.6V99H38.6M32.6 103.5H37.6M41.6 108L59.6 102" fill="none" stroke="#c23fd0" stroke-width="2.6"/><path id="sqm" d="M329.5 94.7h12.2v12.2h-12.2zM267.5 161.9h12.2v12.2h-12.2zM341.5 168.4h12.2v12.2h-12.2zM349.5 166.4h12.2v12.2h-12.2zM191.3 191.7h12.2v12.2h-12.2zM321.3 198.9h12.2v12.2h-12.2zM354.3 219.9h12.2v12.2h-12.2zM365.5 233.9h12.2v12.2h-12.2zM359.5 244.7h12.2v12.2h-12.2zM229.5 232.4h12.2v12.2h-12.2zM135.3 254.7h12.2v12.2h-12.2zM152.5 258.9h12.2v12.2h-12.2zM273.3 261.9h12.2v12.2h-12.2zM297 261.7h12.2v12.2h-12.2zM278.5 277.4h12.2v12.2h-12.2zM137.3 287.7h12.2v12.2h-12.2zM247.3 296.9h12.2v12.2h-12.2zM291.5 299.4h12.2v12.2h-12.2zM362.3 294.9h12.2v12.2h-12.2zM313.5 306.7h12.2v12.2h-12.2zM330.3 317.4h12.2v12.2h-12.2zM372.5 319.7h12.2v12.2h-12.2zM97.5 308.9h12.2v12.2h-12.2zM222 319.9h12.2v12.2h-12.2zM232.3 334.9h12.2v12.2h-12.2zM227 344.9h12.2v12.2h-12.2zM241.5 351.9h12.2v12.2h-12.2zM263 363.9h12.2v12.2h-12.2zM273.5 364.7h12.2v12.2h-12.2zM280.5 363.9h12.2v12.2h-12.2zM315.5 376.9h12.2v12.2h-12.2zM52.5 349.7h12.2v12.2h-12.2zM40 367.7h12.2v12.2h-12.2zM95.3 382.4h12.2v12.2h-12.2zM132.5 393.4h12.2v12.2h-12.2zM58 407.4h12.2v12.2h-12.2zM113 409.7h12.2v12.2h-12.2zM148 412.9h12.2v12.2h-12.2zM146 430.4h12.2v12.2h-12.2zM248.5 410.9h12.2v12.2h-12.2zM280.5 408.9h12.2v12.2h-12.2zM93.5 445.9h12.2v12.2h-12.2zM-2.5 446.9h12.2v12.2h-12.2zM590.5 73.9h12.2v12.2h-12.2zM656.2 86.5h12.2v12.2h-12.2zM670.5 99.3h12.2v12.2h-12.2zM664.9 109.8h12.2v12.2h-12.2zM715 70.9h12.2v12.2h-12.2zM719 68.4h12.2v12.2h-12.2zM728.9 54.7h12.2v12.2h-12.2zM427.1 85.2h12.2v12.2h-12.2zM467 103.3h12.2v12.2h-12.2zM416.3 121.6h12.2v12.2h-12.2zM422.3 130.9h12.2v12.2h-12.2zM515.8 123.9h12.2v12.2h-12.2zM529.6 122.6h12.2v12.2h-12.2zM511.3 148.7h12.2v12.2h-12.2zM599.3 147.9h12.2v12.2h-12.2zM467.7 167.2h12.2v12.2h-12.2zM468.7 166.2h12.2v12.2h-12.2zM571.5 168.7h12.2v12.2h-12.2zM721.3 141.4h12.2v12.2h-12.2zM739.1 140.6h12.2v12.2h-12.2zM779 134.9h12.2v12.2h-12.2zM701 174.2h12.2v12.2h-12.2zM750.7 186.8h12.2v12.2h-12.2zM526.1 193.8h12.2v12.2h-12.2zM574 211.8h12.2v12.2h-12.2zM621.1 211.3h12.2v12.2h-12.2zM627.4 220.6h12.2v12.2h-12.2zM636.1 220.6h12.2v12.2h-12.2zM720.1 201.3h12.2v12.2h-12.2zM727.9 206.3h12.2v12.2h-12.2zM712.6 213.6h12.2v12.2h-12.2zM748.2 210.8h12.2v12.2h-12.2zM458.2 218.6h12.2v12.2h-12.2zM472.5 228.1h12.2v12.2h-12.2zM535.1 235.1h12.2v12.2h-12.2zM533.9 245.6h12.2v12.2h-12.2zM621.6 240.9h12.2v12.2h-12.2zM664.5 248.9h12.2v12.2h-12.2zM681.2 247.9h12.2v12.2h-12.2zM650.7 256.7h12.2v12.2h-12.2zM713.8 246.4h12.2v12.2h-12.2zM772.7 262.2h12.2v12.2h-12.2zM419.3 251.4h12.2v12.2h-12.2zM425.1 248.4h12.2v12.2h-12.2zM431.4 260.2h12.2v12.2h-12.2zM416.3 275.2h12.2v12.2h-12.2zM429.4 283.2h12.2v12.2h-12.2zM530.1 274.9h12.2v12.2h-12.2zM502.8 283.7h12.2v12.2h-12.2zM517.8 287.8h12.2v12.2h-12.2zM553.4 279.7h12.2v12.2h-12.2zM622.6 271.7h12.2v12.2h-12.2zM639.4 284h12.2v12.2h-12.2zM645.7 296.5h12.2v12.2h-12.2zM390.5 307.8h12.2v12.2h-12.2zM560.7 307.3h12.2v12.2h-12.2zM607.1 313.1h12.2v12.2h-12.2zM758.4 320.8h12.2v12.2h-12.2zM425.6 320.3h12.2v12.2h-12.2zM419.3 330.4h12.2v12.2h-12.2zM428.1 329.1h12.2v12.2h-12.2zM804.6 69.7h12.2v12.2h-12.2zM810.5 53.4h12.2v12.2h-12.2zM897.1 73.5h12.2v12.2h-12.2zM1007.3 65.2h12.2v12.2h-12.2zM792 89.3h12.2v12.2h-12.2zM796.8 122.6h12.2v12.2h-12.2zM918.4 121.8h12.2v12.2h-12.2zM910.3 147.2h12.2v12.2h-12.2zM1129.6 139.9h12.2v12.2h-12.2zM1155.2 138.1h12.2v12.2h-12.2zM1011.1 153.7h12.2v12.2h-12.2zM843.2 163.2h12.2v12.2h-12.2zM813.6 175.5h12.2v12.2h-12.2zM999.8 174h12.2v12.2h-12.2zM867 187.5h12.2v12.2h-12.2zM1015.6 199h12.2v12.2h-12.2zM947.2 212.1h12.2v12.2h-12.2zM1079 217.3h12.2v12.2h-12.2zM887.8 222.6h12.2v12.2h-12.2zM874 231.6h12.2v12.2h-12.2zM1108.3 235.1h12.2v12.2h-12.2zM1114.6 251.4h12.2v12.2h-12.2zM992.5 254.4h12.2v12.2h-12.2zM825.1 258.9h12.2v12.2h-12.2zM855.2 262.2h12.2v12.2h-12.2zM1095.5 269.5h12.2v12.2h-12.2zM954.2 285.5h12.2v12.2h-12.2zM1102.8 292.3h12.2v12.2h-12.2zM1075.5 305.8h12.2v12.2h-12.2zM1132.1 304h12.2v12.2h-12.2zM1062.2 319.1h12.2v12.2h-12.2zM875.8 320.8h12.2v12.2h-12.2zM1033.6 346.7h12.2v12.2h-12.2zM926.4 352.4h12.2v12.2h-12.2zM1011.1 356.2h12.2v12.2h-12.2zM1069.2 390h12.2v12.2h-12.2zM1057.5 406.8h12.2v12.2h-12.2zM1069.2 413.6h12.2v12.2h-12.2zM932.4 409.8h12.2v12.2h-12.2zM1000.3 445.9h12.2v12.2h-12.2zM1135.1 444.9h12.2v12.2h-12.2zM28.1 463.4h12.2v12.2h-12.2zM9.3 477.9h12.2v12.2h-12.2zM-3.2 479.7h12.2v12.2h-12.2zM42.1 482.5h12.2v12.2h-12.2zM121.3 491.8h12.2v12.2h-12.2zM159.2 494h12.2v12.2h-12.2zM17.1 509.3h12.2v12.2h-12.2zM133.9 517.8h12.2v12.2h-12.2zM63.7 526.6h12.2v12.2h-12.2zM63.7 532.4h12.2v12.2h-12.2zM65.7 541.1h12.2v12.2h-12.2zM82.7 548.2h12.2v12.2h-12.2zM103.3 546.9h12.2v12.2h-12.2zM130.4 549.2h12.2v12.2h-12.2zM135.4 547.4h12.2v12.2h-12.2zM141.4 565.2h12.2v12.2h-12.2zM306.3 452.2h12.2v12.2h-12.2zM298.8 467.2h12.2v12.2h-12.2zM312.5 465.9h12.2v12.2h-12.2zM316.3 472.7h12.2v12.2h-12.2zM320.1 469.7h12.2v12.2h-12.2zM268 482.2h12.2v12.2h-12.2zM275.7 485.5h12.2v12.2h-12.2zM281.5 507.1h12.2v12.2h-12.2zM321.3 533.6h12.2v12.2h-12.2zM264.4 543.1h12.2v12.2h-12.2zM358.9 559.4h12.2v12.2h-12.2zM372.2 572h12.2v12.2h-12.2zM364.4 589.3h12.2v12.2h-12.2zM225.3 578.5h12.2v12.2h-12.2zM0.5 593.3h12.2v12.2h-12.2zM162.2 608.8h12.2v12.2h-12.2zM224.1 616.1h12.2v12.2h-12.2zM386 611.5h12.2v12.2h-12.2zM138.4 628.9h12.2v12.2h-12.2zM255.2 630.1h12.2v12.2h-12.2zM272.2 633.1h12.2v12.2h-12.2zM293.3 638.9h12.2v12.2h-12.2zM364.4 633.1h12.2v12.2h-12.2zM27.6 635.1h12.2v12.2h-12.2zM291.8 654.7h12.2v12.2h-12.2zM8.6 655.7h12.2v12.2h-12.2zM88.3 656.7h12.2v12.2h-12.2zM34.9 662.7h12.2v12.2h-12.2zM33.1 672.2h12.2v12.2h-12.2zM27.6 676h12.2v12.2h-12.2zM4.5 682h12.2v12.2h-12.2zM14.3 686.5h12.2v12.2h-12.2zM56.9 685.5h12.2v12.2h-12.2zM72 683.5h12.2v12.2h-12.2zM70.7 687h12.2v12.2h-12.2zM89 694.5h12.2v12.2h-12.2zM337.1 673.7h12.2v12.2h-12.2zM373.5 669.7h12.2v12.2h-12.2zM253.2 691.5h12.2v12.2h-12.2zM317.6 707.3h12.2v12.2h-12.2zM58.9 720.3h12.2v12.2h-12.2zM69 726.6h12.2v12.2h-12.2zM89 725.3h12.2v12.2h-12.2zM151.2 728.1h12.2v12.2h-12.2zM248.2 725.8h12.2v12.2h-12.2zM249.9 735.4h12.2v12.2h-12.2zM325.9 731.1h12.2v12.2h-12.2zM351.2 750.7h12.2v12.2h-12.2zM52.2 754.2h12.2v12.2h-12.2zM51.7 760.9h12.2v12.2h-12.2zM-4.5 763.7h12.2v12.2h-12.2zM97 769.7h12.2v12.2h-12.2zM150.4 768.7h12.2v12.2h-12.2zM160.9 771.7h12.2v12.2h-12.2zM127.6 781.2h12.2v12.2h-12.2zM148.4 784.2h12.2v12.2h-12.2zM87.8 785h12.2v12.2h-12.2zM79.2 791.8h12.2v12.2h-12.2zM239.9 787.3h12.2v12.2h-12.2zM260.4 786.3h12.2v12.2h-12.2zM344.6 786.3h12.2v12.2h-12.2zM189.8 804.3h12.2v12.2h-12.2zM58.9 811.8h12.2v12.2h-12.2zM237.4 814.8h12.2v12.2h-12.2zM263.2 821.8h12.2v12.2h-12.2zM181 839.4h12.2v12.2h-12.2zM216.1 838.1h12.2v12.2h-12.2zM454.2 555.4h12.2v12.2h-12.2zM513.1 553.2h12.2v12.2h-12.2zM629.9 557.4h12.2v12.2h-12.2zM674.2 557.4h12.2v12.2h-12.2zM759.4 549.4h12.2v12.2h-12.2zM546.4 566.2h12.2v12.2h-12.2zM549.9 573.7h12.2v12.2h-12.2zM710.6 573.2h12.2v12.2h-12.2zM715.8 577.5h12.2v12.2h-12.2zM405 613.3h12.2v12.2h-12.2zM434.6 608.8h12.2v12.2h-12.2zM475 619.8h12.2v12.2h-12.2zM534.6 609.3h12.2v12.2h-12.2zM540.1 618.3h12.2v12.2h-12.2zM746.9 611.8h12.2v12.2h-12.2zM746.9 625.6h12.2v12.2h-12.2zM773 631.6h12.2v12.2h-12.2zM639.1 637.9h12.2v12.2h-12.2zM452.7 645.9h12.2v12.2h-12.2zM453.2 652.7h12.2v12.2h-12.2zM438.4 659.7h12.2v12.2h-12.2zM491.8 661.4h12.2v12.2h-12.2zM678.7 660.7h12.2v12.2h-12.2zM753.4 668.7h12.2v12.2h-12.2zM508.6 677.2h12.2v12.2h-12.2zM712.8 677h12.2v12.2h-12.2zM442.9 688h12.2v12.2h-12.2zM664.9 686h12.2v12.2h-12.2zM654.2 689h12.2v12.2h-12.2zM551.9 694.8h12.2v12.2h-12.2zM771 691.3h12.2v12.2h-12.2zM657.4 701.5h12.2v12.2h-12.2zM644.1 704.8h12.2v12.2h-12.2zM679.5 704h12.2v12.2h-12.2zM495.8 705.3h12.2v12.2h-12.2zM482.5 715.8h12.2v12.2h-12.2zM650.4 738.6h12.2v12.2h-12.2zM584.7 747.9h12.2v12.2h-12.2zM633.6 755.7h12.2v12.2h-12.2zM703 751.7h12.2v12.2h-12.2zM742.6 758.7h12.2v12.2h-12.2zM770.2 768.2h12.2v12.2h-12.2zM611.1 766.7h12.2v12.2h-12.2zM626.6 778.2h12.2v12.2h-12.2zM401 755.4h12.2v12.2h-12.2zM431.4 754.7h12.2v12.2h-12.2zM421.8 762.9h12.2v12.2h-12.2zM436.6 793.8h12.2v12.2h-12.2zM506.1 799.3h12.2v12.2h-12.2zM515.8 836.4h12.2v12.2h-12.2zM529.6 835.1h12.2v12.2h-12.2zM543.4 836.4h12.2v12.2h-12.2zM456.2 842.9h12.2v12.2h-12.2zM977.8 455.2h12.2v12.2h-12.2zM1020.6 461.4h12.2v12.2h-12.2zM1068.2 460.4h12.2v12.2h-12.2zM1138.9 460.2h12.2v12.2h-12.2zM1061.7 483.5h12.2v12.2h-12.2zM937.2 489.8h12.2v12.2h-12.2zM927.9 495h12.2v12.2h-12.2zM969.2 491.8h12.2v12.2h-12.2zM1128.9 508.8h12.2v12.2h-12.2zM1021.6 512.8h12.2v12.2h-12.2zM991 516.1h12.2v12.2h-12.2zM985.5 528.3h12.2v12.2h-12.2zM992.7 527.5h12.2v12.2h-12.2zM945.2 526.6h12.2v12.2h-12.2zM943.4 540.6h12.2v12.2h-12.2zM966 547.9h12.2v12.2h-12.2zM1020.4 545.1h12.2v12.2h-12.2zM1081.3 547.4h12.2v12.2h-12.2zM1127.1 542.4h12.2v12.2h-12.2zM1148.9 556.7h12.2v12.2h-12.2zM878.3 548.7h12.2v12.2h-12.2zM982.3 561.7h12.2v12.2h-12.2zM1010.3 564.2h12.2v12.2h-12.2zM1066.7 572h12.2v12.2h-12.2zM816.4 568h12.2v12.2h-12.2zM828.1 563.7h12.2v12.2h-12.2zM845.7 584h12.2v12.2h-12.2zM865.7 588.3h12.2v12.2h-12.2zM1002.3 593.3h12.2v12.2h-12.2zM996.8 602.5h12.2v12.2h-12.2zM1036.2 591.8h12.2v12.2h-12.2zM912.8 599h12.2v12.2h-12.2zM906.6 604.5h12.2v12.2h-12.2zM1094.5 607.1h12.2v12.2h-12.2zM1105.8 608.1h12.2v12.2h-12.2zM964 628.6h12.2v12.2h-12.2zM967.7 631.4h12.2v12.2h-12.2zM892 639.1h12.2v12.2h-12.2zM928.9 642.9h12.2v12.2h-12.2zM1125.9 641.4h12.2v12.2h-12.2zM816.6 647.9h12.2v12.2h-12.2zM998.6 649.4h12.2v12.2h-12.2zM934.6 658.4h12.2v12.2h-12.2zM1095.5 658.9h12.2v12.2h-12.2zM1115.9 662.7h12.2v12.2h-12.2zM794.3 663.7h12.2v12.2h-12.2zM855.7 661.9h12.2v12.2h-12.2zM854.4 667.2h12.2v12.2h-12.2zM914.3 672h12.2v12.2h-12.2zM992.8 675h12.2v12.2h-12.2zM1014.3 672h12.2v12.2h-12.2zM1110.1 678.5h12.2v12.2h-12.2zM1128.4 676.5h12.2v12.2h-12.2zM1108.8 689h12.2v12.2h-12.2zM830.6 684h12.2v12.2h-12.2zM832.6 701.5h12.2v12.2h-12.2zM1091.8 709.1h12.2v12.2h-12.2zM1086.3 714.6h12.2v12.2h-12.2zM1148.9 705.8h12.2v12.2h-12.2zM1148.2 719.1h12.2v12.2h-12.2zM886.3 732.1h12.2v12.2h-12.2zM1052.2 733.6h12.2v12.2h-12.2zM863.7 743.4h12.2v12.2h-12.2zM1095.8 742.4h12.2v12.2h-12.2zM1154.4 750.9h12.2v12.2h-12.2zM1156.5 762.9h12.2v12.2h-12.2zM793.8 768.2h12.2v12.2h-12.2zM1075 768.5h12.2v12.2h-12.2zM937.2 773.7h12.2v12.2h-12.2zM1003.6 784.7h12.2v12.2h-12.2zM1018.6 792.3h12.2v12.2h-12.2zM896.6 802.3h12.2v12.2h-12.2zM1036.2 814.8h12.2v12.2h-12.2zM862.5 826.1h12.2v12.2h-12.2zM929.1 841.9h12.2v12.2h-12.2zM1084.3 841.9h12.2v12.2h-12.2zM744.4 2.4h12.2v12.2h-12.2zM760.3 6.4h12.2v12.2h-12.2zM793.1 20.3h12.2v12.2h-12.2zM804 21.3h12.2v12.2h-12.2zM816 17.7h12.2v12.2h-12.2zM757.3 34.8h12.2v12.2h-12.2zM806 41.2h12.2v12.2h-12.2zM811 52.1h12.2v12.2h-12.2zM740.4 51.1h12.2v12.2h-12.2zM730.5 52.9h12.2v12.2h-12.2zM868.5 11.9h12.2v12.2h-12.2zM940.2 12.4h12.2v12.2h-12.2zM971.4 0.9h12.2v12.2h-12.2zM1033.5 7.4h12.2v12.2h-12.2zM1003.8 23.7h12.2v12.2h-12.2zM1036.5 31.3h12.2v12.2h-12.2zM1031.5 39.2h12.2v12.2h-12.2zM1121.1 31.3h12.2v12.2h-12.2zM1119.1 46.2h12.2v12.2h-12.2zM500.1 1.9h12.2v12.2h-12.2zM497.5 14.8h12.2v12.2h-12.2zM511.5 23.9h12.2v12.2h-12.2zM576.5 -1.1h12.2v12.2h-12.2zM565 40.7h12.2v12.2h-12.2zM425 49.8h12.2v12.2h-12.2zM414.5 65.3h12.2v12.2h-12.2z" fill="none" stroke="#c73fd0" stroke-width="2.3"/><path d="M349.3 389.7h12.2v12.2h-12.2zM365.5 426.9h12.2v12.2h-12.2zM436.9 337.9h12.2v12.2h-12.2zM521.8 339.9h12.2v12.2h-12.2zM635.6 340.4h12.2v12.2h-12.2zM627.6 349.2h12.2v12.2h-12.2zM704 349.9h12.2v12.2h-12.2zM733.9 349.9h12.2v12.2h-12.2zM429.9 369.7h12.2v12.2h-12.2zM773.5 369.7h12.2v12.2h-12.2zM644.9 386.3h12.2v12.2h-12.2zM741.6 378.7h12.2v12.2h-12.2zM726.9 385.7h12.2v12.2h-12.2zM553.4 392.3h12.2v12.2h-12.2zM485.8 399.3h12.2v12.2h-12.2zM477.7 404.8h12.2v12.2h-12.2zM528.4 402.5h12.2v12.2h-12.2zM552.7 404.3h12.2v12.2h-12.2zM678.7 399.3h12.2v12.2h-12.2zM681.2 414.3h12.2v12.2h-12.2zM626.1 415.1h12.2v12.2h-12.2zM660.4 419.3h12.2v12.2h-12.2zM496.5 419.3h12.2v12.2h-12.2zM520.8 413.1h12.2v12.2h-12.2zM525.9 416.8h12.2v12.2h-12.2zM535.9 419.3h12.2v12.2h-12.2zM545.9 419.3h12.2v12.2h-12.2zM440.6 422.6h12.2v12.2h-12.2zM389.3 421.8h12.2v12.2h-12.2zM500.8 431.9h12.2v12.2h-12.2zM537.1 434.4h12.2v12.2h-12.2zM549.7 433.9h12.2v12.2h-12.2zM606.1 426.9h12.2v12.2h-12.2zM564.7 436.9h12.2v12.2h-12.2zM576 440.6h12.2v12.2h-12.2zM589.8 439.4h12.2v12.2h-12.2zM608.5 440.6h12.2v12.2h-12.2zM666.2 436.9h12.2v12.2h-12.2zM697 431.9h12.2v12.2h-12.2zM464.5 442.9h12.2v12.2h-12.2zM453.2 445.9h12.2v12.2h-12.2zM523.3 445.4h12.2v12.2h-12.2zM646.2 446.4h12.2v12.2h-12.2zM686.3 445.4h12.2v12.2h-12.2zM904.3 392.3h12.2v12.2h-12.2zM905.3 390.3h12.2v12.2h-12.2zM781.5 445.4h12.2v12.2h-12.2zM553.4 450.9h12.2v12.2h-12.2zM636.1 452.2h12.2v12.2h-12.2zM643.6 461.4h12.2v12.2h-12.2zM715.8 464.7h12.2v12.2h-12.2zM726.4 460.2h12.2v12.2h-12.2zM660.4 479.7h12.2v12.2h-12.2zM497 481h12.2v12.2h-12.2zM458.2 492.5h12.2v12.2h-12.2zM471.5 500.5h12.2v12.2h-12.2zM424.6 505.3h12.2v12.2h-12.2zM570.5 501h12.2v12.2h-12.2zM765.2 495.5h12.2v12.2h-12.2zM470.7 520.3h12.2v12.2h-12.2zM620.3 518.1h12.2v12.2h-12.2zM496.5 530.6h12.2v12.2h-12.2zM489 536.6h12.2v12.2h-12.2zM643.6 536.1h12.2v12.2h-12.2zM705.8 537.6h12.2v12.2h-12.2zM775.2 531.9h12.2v12.2h-12.2zM450.2 544.9h12.2v12.2h-12.2zM784 520.9h12.2v12.2h-12.2zM834.3 451.4h12.2v12.2h-12.2zM841.3 451.4h12.2v12.2h-12.2zM890.5 467.7h12.2v12.2h-12.2zM791.3 514.8h12.2v12.2h-12.2zM789.3 525.6h12.2v12.2h-12.2zM796.8 540.6h12.2v12.2h-12.2zM826.6 530.6h12.2v12.2h-12.2zM910.3 519.8h12.2v12.2h-12.2zM911.6 526.6h12.2v12.2h-12.2zM860.7 545.6h12.2v12.2h-12.2zM328.4 521.8h12.2v12.2h-12.2zM357.2 529.4h12.2v12.2h-12.2z" fill="none" stroke="#c9c63c" stroke-width="2.3"/></svg>
<div style="left:8.4px;top:208px;width:1167.2px;height:62.4px;background:#e2e5ea"></div>
<div style="left:8.4px;top:270.4px;width:483.4px;height:32.4px;background:#cfd0d3;border-radius:0 0 9px 0"></div>
<div style="left:14.5px;top:1018.4px;width:1155.2px;height:37.2px;background:#dcdcdf;border-radius:9px;border:1px solid #cfcfd3;box-sizing:border-box"></div>
<svg style="left:8.4px;top:208px;" width="1167.2" height="852" viewBox="0 0 1167.2 852"><defs><clipPath id="cp"><rect x="0" y="0" width="1167.2" height="62.4"/><rect x="0" y="62.4" width="483.4" height="32.4"/><rect x="6.1" y="810.4" width="1155.2" height="37.2" rx="9"/></clipPath></defs><g clip-path="url(#cp)" opacity=".075"><path d="M329.5 94.7h12.2v12.2h-12.2zM267.5 161.9h12.2v12.2h-12.2zM341.5 168.4h12.2v12.2h-12.2zM349.5 166.4h12.2v12.2h-12.2zM191.3 191.7h12.2v12.2h-12.2zM321.3 198.9h12.2v12.2h-12.2zM354.3 219.9h12.2v12.2h-12.2zM365.5 233.9h12.2v12.2h-12.2zM359.5 244.7h12.2v12.2h-12.2zM229.5 232.4h12.2v12.2h-12.2zM135.3 254.7h12.2v12.2h-12.2zM152.5 258.9h12.2v12.2h-12.2zM273.3 261.9h12.2v12.2h-12.2zM297 261.7h12.2v12.2h-12.2zM278.5 277.4h12.2v12.2h-12.2zM137.3 287.7h12.2v12.2h-12.2zM247.3 296.9h12.2v12.2h-12.2zM291.5 299.4h12.2v12.2h-12.2zM362.3 294.9h12.2v12.2h-12.2zM313.5 306.7h12.2v12.2h-12.2zM330.3 317.4h12.2v12.2h-12.2zM372.5 319.7h12.2v12.2h-12.2zM97.5 308.9h12.2v12.2h-12.2zM222 319.9h12.2v12.2h-12.2zM232.3 334.9h12.2v12.2h-12.2zM227 344.9h12.2v12.2h-12.2zM241.5 351.9h12.2v12.2h-12.2zM263 363.9h12.2v12.2h-12.2zM273.5 364.7h12.2v12.2h-12.2zM280.5 363.9h12.2v12.2h-12.2zM315.5 376.9h12.2v12.2h-12.2zM52.5 349.7h12.2v12.2h-12.2zM40 367.7h12.2v12.2h-12.2zM95.3 382.4h12.2v12.2h-12.2zM132.5 393.4h12.2v12.2h-12.2zM58 407.4h12.2v12.2h-12.2zM113 409.7h12.2v12.2h-12.2zM148 412.9h12.2v12.2h-12.2zM146 430.4h12.2v12.2h-12.2zM248.5 410.9h12.2v12.2h-12.2zM280.5 408.9h12.2v12.2h-12.2zM93.5 445.9h12.2v12.2h-12.2zM-2.5 446.9h12.2v12.2h-12.2zM590.5 73.9h12.2v12.2h-12.2zM656.2 86.5h12.2v12.2h-12.2zM670.5 99.3h12.2v12.2h-12.2zM664.9 109.8h12.2v12.2h-12.2zM715 70.9h12.2v12.2h-12.2zM719 68.4h12.2v12.2h-12.2zM728.9 54.7h12.2v12.2h-12.2zM427.1 85.2h12.2v12.2h-12.2zM467 103.3h12.2v12.2h-12.2zM416.3 121.6h12.2v12.2h-12.2zM422.3 130.9h12.2v12.2h-12.2zM515.8 123.9h12.2v12.2h-12.2zM529.6 122.6h12.2v12.2h-12.2zM511.3 148.7h12.2v12.2h-12.2zM599.3 147.9h12.2v12.2h-12.2zM467.7 167.2h12.2v12.2h-12.2zM468.7 166.2h12.2v12.2h-12.2zM571.5 168.7h12.2v12.2h-12.2zM721.3 141.4h12.2v12.2h-12.2zM739.1 140.6h12.2v12.2h-12.2zM779 134.9h12.2v12.2h-12.2zM701 174.2h12.2v12.2h-12.2zM750.7 186.8h12.2v12.2h-12.2zM526.1 193.8h12.2v12.2h-12.2zM574 211.8h12.2v12.2h-12.2zM621.1 211.3h12.2v12.2h-12.2zM627.4 220.6h12.2v12.2h-12.2zM636.1 220.6h12.2v12.2h-12.2zM720.1 201.3h12.2v12.2h-12.2zM727.9 206.3h12.2v12.2h-12.2zM712.6 213.6h12.2v12.2h-12.2zM748.2 210.8h12.2v12.2h-12.2zM458.2 218.6h12.2v12.2h-12.2zM472.5 228.1h12.2v12.2h-12.2zM535.1 235.1h12.2v12.2h-12.2zM533.9 245.6h12.2v12.2h-12.2zM621.6 240.9h12.2v12.2h-12.2zM664.5 248.9h12.2v12.2h-12.2zM681.2 247.9h12.2v12.2h-12.2zM650.7 256.7h12.2v12.2h-12.2zM713.8 246.4h12.2v12.2h-12.2zM772.7 262.2h12.2v12.2h-12.2zM419.3 251.4h12.2v12.2h-12.2zM425.1 248.4h12.2v12.2h-12.2zM431.4 260.2h12.2v12.2h-12.2zM416.3 275.2h12.2v12.2h-12.2zM429.4 283.2h12.2v12.2h-12.2zM530.1 274.9h12.2v12.2h-12.2zM502.8 283.7h12.2v12.2h-12.2zM517.8 287.8h12.2v12.2h-12.2zM553.4 279.7h12.2v12.2h-12.2zM622.6 271.7h12.2v12.2h-12.2zM639.4 284h12.2v12.2h-12.2zM645.7 296.5h12.2v12.2h-12.2zM390.5 307.8h12.2v12.2h-12.2zM560.7 307.3h12.2v12.2h-12.2zM607.1 313.1h12.2v12.2h-12.2zM758.4 320.8h12.2v12.2h-12.2zM425.6 320.3h12.2v12.2h-12.2zM419.3 330.4h12.2v12.2h-12.2zM428.1 329.1h12.2v12.2h-12.2zM804.6 69.7h12.2v12.2h-12.2zM810.5 53.4h12.2v12.2h-12.2zM897.1 73.5h12.2v12.2h-12.2zM1007.3 65.2h12.2v12.2h-12.2zM792 89.3h12.2v12.2h-12.2zM796.8 122.6h12.2v12.2h-12.2zM918.4 121.8h12.2v12.2h-12.2zM910.3 147.2h12.2v12.2h-12.2zM1129.6 139.9h12.2v12.2h-12.2zM1155.2 138.1h12.2v12.2h-12.2zM1011.1 153.7h12.2v12.2h-12.2zM843.2 163.2h12.2v12.2h-12.2zM813.6 175.5h12.2v12.2h-12.2zM999.8 174h12.2v12.2h-12.2zM867 187.5h12.2v12.2h-12.2zM1015.6 199h12.2v12.2h-12.2zM947.2 212.1h12.2v12.2h-12.2zM1079 217.3h12.2v12.2h-12.2zM887.8 222.6h12.2v12.2h-12.2zM874 231.6h12.2v12.2h-12.2zM1108.3 235.1h12.2v12.2h-12.2zM1114.6 251.4h12.2v12.2h-12.2zM992.5 254.4h12.2v12.2h-12.2zM825.1 258.9h12.2v12.2h-12.2zM855.2 262.2h12.2v12.2h-12.2zM1095.5 269.5h12.2v12.2h-12.2zM954.2 285.5h12.2v12.2h-12.2zM1102.8 292.3h12.2v12.2h-12.2zM1075.5 305.8h12.2v12.2h-12.2zM1132.1 304h12.2v12.2h-12.2zM1062.2 319.1h12.2v12.2h-12.2zM875.8 320.8h12.2v12.2h-12.2zM1033.6 346.7h12.2v12.2h-12.2zM926.4 352.4h12.2v12.2h-12.2zM1011.1 356.2h12.2v12.2h-12.2zM1069.2 390h12.2v12.2h-12.2zM1057.5 406.8h12.2v12.2h-12.2zM1069.2 413.6h12.2v12.2h-12.2zM932.4 409.8h12.2v12.2h-12.2zM1000.3 445.9h12.2v12.2h-12.2zM1135.1 444.9h12.2v12.2h-12.2zM28.1 463.4h12.2v12.2h-12.2zM9.3 477.9h12.2v12.2h-12.2zM-3.2 479.7h12.2v12.2h-12.2zM42.1 482.5h12.2v12.2h-12.2zM121.3 491.8h12.2v12.2h-12.2zM159.2 494h12.2v12.2h-12.2zM17.1 509.3h12.2v12.2h-12.2zM133.9 517.8h12.2v12.2h-12.2zM63.7 526.6h12.2v12.2h-12.2zM63.7 532.4h12.2v12.2h-12.2zM65.7 541.1h12.2v12.2h-12.2zM82.7 548.2h12.2v12.2h-12.2zM103.3 546.9h12.2v12.2h-12.2zM130.4 549.2h12.2v12.2h-12.2zM135.4 547.4h12.2v12.2h-12.2zM141.4 565.2h12.2v12.2h-12.2zM306.3 452.2h12.2v12.2h-12.2zM298.8 467.2h12.2v12.2h-12.2zM312.5 465.9h12.2v12.2h-12.2zM316.3 472.7h12.2v12.2h-12.2zM320.1 469.7h12.2v12.2h-12.2zM268 482.2h12.2v12.2h-12.2zM275.7 485.5h12.2v12.2h-12.2zM281.5 507.1h12.2v12.2h-12.2zM321.3 533.6h12.2v12.2h-12.2zM264.4 543.1h12.2v12.2h-12.2zM358.9 559.4h12.2v12.2h-12.2zM372.2 572h12.2v12.2h-12.2zM364.4 589.3h12.2v12.2h-12.2zM225.3 578.5h12.2v12.2h-12.2zM0.5 593.3h12.2v12.2h-12.2zM162.2 608.8h12.2v12.2h-12.2zM224.1 616.1h12.2v12.2h-12.2zM386 611.5h12.2v12.2h-12.2zM138.4 628.9h12.2v12.2h-12.2zM255.2 630.1h12.2v12.2h-12.2zM272.2 633.1h12.2v12.2h-12.2zM293.3 638.9h12.2v12.2h-12.2zM364.4 633.1h12.2v12.2h-12.2zM27.6 635.1h12.2v12.2h-12.2zM291.8 654.7h12.2v12.2h-12.2zM8.6 655.7h12.2v12.2h-12.2zM88.3 656.7h12.2v12.2h-12.2zM34.9 662.7h12.2v12.2h-12.2zM33.1 672.2h12.2v12.2h-12.2zM27.6 676h12.2v12.2h-12.2zM4.5 682h12.2v12.2h-12.2zM14.3 686.5h12.2v12.2h-12.2zM56.9 685.5h12.2v12.2h-12.2zM72 683.5h12.2v12.2h-12.2zM70.7 687h12.2v12.2h-12.2zM89 694.5h12.2v12.2h-12.2zM337.1 673.7h12.2v12.2h-12.2zM373.5 669.7h12.2v12.2h-12.2zM253.2 691.5h12.2v12.2h-12.2zM317.6 707.3h12.2v12.2h-12.2zM58.9 720.3h12.2v12.2h-12.2zM69 726.6h12.2v12.2h-12.2zM89 725.3h12.2v12.2h-12.2zM151.2 728.1h12.2v12.2h-12.2zM248.2 725.8h12.2v12.2h-12.2zM249.9 735.4h12.2v12.2h-12.2zM325.9 731.1h12.2v12.2h-12.2zM351.2 750.7h12.2v12.2h-12.2zM52.2 754.2h12.2v12.2h-12.2zM51.7 760.9h12.2v12.2h-12.2zM-4.5 763.7h12.2v12.2h-12.2zM97 769.7h12.2v12.2h-12.2zM150.4 768.7h12.2v12.2h-12.2zM160.9 771.7h12.2v12.2h-12.2zM127.6 781.2h12.2v12.2h-12.2zM148.4 784.2h12.2v12.2h-12.2zM87.8 785h12.2v12.2h-12.2zM79.2 791.8h12.2v12.2h-12.2zM239.9 787.3h12.2v12.2h-12.2zM260.4 786.3h12.2v12.2h-12.2zM344.6 786.3h12.2v12.2h-12.2zM189.8 804.3h12.2v12.2h-12.2zM58.9 811.8h12.2v12.2h-12.2zM237.4 814.8h12.2v12.2h-12.2zM263.2 821.8h12.2v12.2h-12.2zM181 839.4h12.2v12.2h-12.2zM216.1 838.1h12.2v12.2h-12.2zM454.2 555.4h12.2v12.2h-12.2zM513.1 553.2h12.2v12.2h-12.2zM629.9 557.4h12.2v12.2h-12.2zM674.2 557.4h12.2v12.2h-12.2zM759.4 549.4h12.2v12.2h-12.2zM546.4 566.2h12.2v12.2h-12.2zM549.9 573.7h12.2v12.2h-12.2zM710.6 573.2h12.2v12.2h-12.2zM715.8 577.5h12.2v12.2h-12.2zM405 613.3h12.2v12.2h-12.2zM434.6 608.8h12.2v12.2h-12.2zM475 619.8h12.2v12.2h-12.2zM534.6 609.3h12.2v12.2h-12.2zM540.1 618.3h12.2v12.2h-12.2zM746.9 611.8h12.2v12.2h-12.2zM746.9 625.6h12.2v12.2h-12.2zM773 631.6h12.2v12.2h-12.2zM639.1 637.9h12.2v12.2h-12.2zM452.7 645.9h12.2v12.2h-12.2zM453.2 652.7h12.2v12.2h-12.2zM438.4 659.7h12.2v12.2h-12.2zM491.8 661.4h12.2v12.2h-12.2zM678.7 660.7h12.2v12.2h-12.2zM753.4 668.7h12.2v12.2h-12.2zM508.6 677.2h12.2v12.2h-12.2zM712.8 677h12.2v12.2h-12.2zM442.9 688h12.2v12.2h-12.2zM664.9 686h12.2v12.2h-12.2zM654.2 689h12.2v12.2h-12.2zM551.9 694.8h12.2v12.2h-12.2zM771 691.3h12.2v12.2h-12.2zM657.4 701.5h12.2v12.2h-12.2zM644.1 704.8h12.2v12.2h-12.2zM679.5 704h12.2v12.2h-12.2zM495.8 705.3h12.2v12.2h-12.2zM482.5 715.8h12.2v12.2h-12.2zM650.4 738.6h12.2v12.2h-12.2zM584.7 747.9h12.2v12.2h-12.2zM633.6 755.7h12.2v12.2h-12.2zM703 751.7h12.2v12.2h-12.2zM742.6 758.7h12.2v12.2h-12.2zM770.2 768.2h12.2v12.2h-12.2zM611.1 766.7h12.2v12.2h-12.2zM626.6 778.2h12.2v12.2h-12.2zM401 755.4h12.2v12.2h-12.2zM431.4 754.7h12.2v12.2h-12.2zM421.8 762.9h12.2v12.2h-12.2zM436.6 793.8h12.2v12.2h-12.2zM506.1 799.3h12.2v12.2h-12.2zM515.8 836.4h12.2v12.2h-12.2zM529.6 835.1h12.2v12.2h-12.2zM543.4 836.4h12.2v12.2h-12.2zM456.2 842.9h12.2v12.2h-12.2zM977.8 455.2h12.2v12.2h-12.2zM1020.6 461.4h12.2v12.2h-12.2zM1068.2 460.4h12.2v12.2h-12.2zM1138.9 460.2h12.2v12.2h-12.2zM1061.7 483.5h12.2v12.2h-12.2zM937.2 489.8h12.2v12.2h-12.2zM927.9 495h12.2v12.2h-12.2zM969.2 491.8h12.2v12.2h-12.2zM1128.9 508.8h12.2v12.2h-12.2zM1021.6 512.8h12.2v12.2h-12.2zM991 516.1h12.2v12.2h-12.2zM985.5 528.3h12.2v12.2h-12.2zM992.7 527.5h12.2v12.2h-12.2zM945.2 526.6h12.2v12.2h-12.2zM943.4 540.6h12.2v12.2h-12.2zM966 547.9h12.2v12.2h-12.2zM1020.4 545.1h12.2v12.2h-12.2zM1081.3 547.4h12.2v12.2h-12.2zM1127.1 542.4h12.2v12.2h-12.2zM1148.9 556.7h12.2v12.2h-12.2zM878.3 548.7h12.2v12.2h-12.2zM982.3 561.7h12.2v12.2h-12.2zM1010.3 564.2h12.2v12.2h-12.2zM1066.7 572h12.2v12.2h-12.2zM816.4 568h12.2v12.2h-12.2zM828.1 563.7h12.2v12.2h-12.2zM845.7 584h12.2v12.2h-12.2zM865.7 588.3h12.2v12.2h-12.2zM1002.3 593.3h12.2v12.2h-12.2zM996.8 602.5h12.2v12.2h-12.2zM1036.2 591.8h12.2v12.2h-12.2zM912.8 599h12.2v12.2h-12.2zM906.6 604.5h12.2v12.2h-12.2zM1094.5 607.1h12.2v12.2h-12.2zM1105.8 608.1h12.2v12.2h-12.2zM964 628.6h12.2v12.2h-12.2zM967.7 631.4h12.2v12.2h-12.2zM892 639.1h12.2v12.2h-12.2zM928.9 642.9h12.2v12.2h-12.2zM1125.9 641.4h12.2v12.2h-12.2zM816.6 647.9h12.2v12.2h-12.2zM998.6 649.4h12.2v12.2h-12.2zM934.6 658.4h12.2v12.2h-12.2zM1095.5 658.9h12.2v12.2h-12.2zM1115.9 662.7h12.2v12.2h-12.2zM794.3 663.7h12.2v12.2h-12.2zM855.7 661.9h12.2v12.2h-12.2zM854.4 667.2h12.2v12.2h-12.2zM914.3 672h12.2v12.2h-12.2zM992.8 675h12.2v12.2h-12.2zM1014.3 672h12.2v12.2h-12.2zM1110.1 678.5h12.2v12.2h-12.2zM1128.4 676.5h12.2v12.2h-12.2zM1108.8 689h12.2v12.2h-12.2zM830.6 684h12.2v12.2h-12.2zM832.6 701.5h12.2v12.2h-12.2zM1091.8 709.1h12.2v12.2h-12.2zM1086.3 714.6h12.2v12.2h-12.2zM1148.9 705.8h12.2v12.2h-12.2zM1148.2 719.1h12.2v12.2h-12.2zM886.3 732.1h12.2v12.2h-12.2zM1052.2 733.6h12.2v12.2h-12.2zM863.7 743.4h12.2v12.2h-12.2zM1095.8 742.4h12.2v12.2h-12.2zM1154.4 750.9h12.2v12.2h-12.2zM1156.5 762.9h12.2v12.2h-12.2zM793.8 768.2h12.2v12.2h-12.2zM1075 768.5h12.2v12.2h-12.2zM937.2 773.7h12.2v12.2h-12.2zM1003.6 784.7h12.2v12.2h-12.2zM1018.6 792.3h12.2v12.2h-12.2zM896.6 802.3h12.2v12.2h-12.2zM1036.2 814.8h12.2v12.2h-12.2zM862.5 826.1h12.2v12.2h-12.2zM929.1 841.9h12.2v12.2h-12.2zM1084.3 841.9h12.2v12.2h-12.2zM744.4 2.4h12.2v12.2h-12.2zM760.3 6.4h12.2v12.2h-12.2zM793.1 20.3h12.2v12.2h-12.2zM804 21.3h12.2v12.2h-12.2zM816 17.7h12.2v12.2h-12.2zM757.3 34.8h12.2v12.2h-12.2zM806 41.2h12.2v12.2h-12.2zM811 52.1h12.2v12.2h-12.2zM740.4 51.1h12.2v12.2h-12.2zM730.5 52.9h12.2v12.2h-12.2zM868.5 11.9h12.2v12.2h-12.2zM940.2 12.4h12.2v12.2h-12.2zM971.4 0.9h12.2v12.2h-12.2zM1033.5 7.4h12.2v12.2h-12.2zM1003.8 23.7h12.2v12.2h-12.2zM1036.5 31.3h12.2v12.2h-12.2zM1031.5 39.2h12.2v12.2h-12.2zM1121.1 31.3h12.2v12.2h-12.2zM1119.1 46.2h12.2v12.2h-12.2zM500.1 1.9h12.2v12.2h-12.2zM497.5 14.8h12.2v12.2h-12.2zM511.5 23.9h12.2v12.2h-12.2zM576.5 -1.1h12.2v12.2h-12.2zM565 40.7h12.2v12.2h-12.2zM425 49.8h12.2v12.2h-12.2zM414.5 65.3h12.2v12.2h-12.2z" fill="none" stroke="#c73fd0" stroke-width="2.3"/><path d="M99.1 62V108.5H32.6V99H38.6M32.6 103.5H37.6M41.6 108L59.6 102" fill="none" stroke="#c23fd0" stroke-width="2.6"/></g></svg>
<div class="t" style="top:228.5px;font-size:22.6px;line-height:22.6px;color:#32383E;letter-spacing:-0.50px;left:24.1px;"><span>HiPS / MOC</span></div>
<svg style="left:162.5px;top:235px;" width="17" height="11" viewBox="0 0 17 11"><path d="M2.7 2.3 H14.3 L8.5 8.7 Z" fill="#555e68" stroke="#555e68" stroke-width="3" stroke-linejoin="round"/></svg>
<div style="left:195px;top:223px;width:1.5px;height:32px;background:#c3c9d1"></div>
<div class="t" style="top:228.5px;font-size:22.6px;line-height:22.6px;color:#32383E;letter-spacing:0.29px;left:252.8px;"><span>Equ / Spherical</span></div>
<svg style="left:430px;top:235px;" width="17" height="11" viewBox="0 0 17 11"><path d="M2.7 2.3 H14.3 L8.5 8.7 Z" fill="#555e68" stroke="#555e68" stroke-width="3" stroke-linejoin="round"/></svg>
<div style="left:503.1px;top:223px;width:1.5px;height:32px;background:#c3c9d1"></div>
<svg style="left:525.9px;top:216.8px;" width="46.9" height="46.9" viewBox="0 0 24 24"><path fill="#32383E" d="M4.84 1.98L3.43 3.39l10.38 10.38-1.41 1.41-4.24-4.24-1.41 1.41 5.66 5.66 2.83-2.83 6.6 6.6 1.41-1.41L4.84 1.98zm13.21 10.38L23 7.4 21.57 6l-4.94 4.94 1.42 1.42zm-.71-3.54l-1.41-1.41-2.12 2.12 1.41 1.41 2.12-2.12zM1.08 12.35l5.66 5.66 1.41-1.41-5.66-5.66-1.41 1.41z"/></svg>
<div class="t" style="top:276.2px;font-size:20.2px;line-height:20.2px;color:#23272b;letter-spacing:-0.36px;left:16px;"><span>DP0.2 HiPS from DESC DC2 sim: gri colo…</span></div>
<div class="t" style="top:277.4px;font-size:19.4px;line-height:19.4px;color:#555E68;letter-spacing:-0.32px;left:411px;"><span>FOV:7.5'</span></div>
<svg style="left:21.2px;top:1018px;" width="37.3" height="37.3" viewBox="0 0 24 24"><path fill="#32383E" d="M19 19H5V5h7V3H5c-1.11 0-2 .9-2 2v14c0 1.1.89 2 2 2h14c1.1 0 2-.9 2-2v-7h-2v7zM14 3v2h3.59l-9.83 9.83 1.41 1.41L19 6.41V10h2V3h-7z"/></svg>
<div style="left:78.2px;top:1022px;width:120.5px;height:30px;background:#E4EEFA;border-radius:9px"></div>
<div class="t" style="top:1028.6px;font-size:17.6px;line-height:17.6px;color:#12467B;letter-spacing:-0.63px;left:87.7px;"><span>WCS-Coords:</span></div>
<div style="left:1113.3px;top:1023.4px;width:46.4px;height:28.2px;background:#636b74;border-radius:14.1px"></div>
<div style="left:1118.6px;top:1028.2px;width:18.4px;height:18.4px;background:#fff;border-radius:50%"></div>
<div style="left:1182.4px;top:94.2px;width:1220px;height:966.6px;border:1px solid #cdd7e1;border-radius:9px;box-sizing:border-box;background:#FBFCFE"></div>
<div style="left:1183.4px;top:95.2px;width:1216px;height:50.4px;background:#F0F4F8;border-radius:8px 8px 0 0"></div>
<div style="left:1183.4px;top:145px;width:1216px;height:2px;background:#cfd8e1"></div>
<div style="left:1197.1px;top:95px;width:152px;height:52px;background:#FBFCFE;border-top:3.2px solid #2e3338;border-left:1px solid #dfe5ec;border-right:1px solid #dfe5ec;box-sizing:border-box"></div>
<div class="t" style="top:110.3px;font-size:20.4px;line-height:20.4px;color:#32383E;letter-spacing:0.04px;left:1217.5px;"><span>Active Chart</span></div>
<div class="t" style="top:110.3px;font-size:20.4px;line-height:20.4px;color:#32383E;letter-spacing:-0.06px;left:1369.1px;"><span>Details</span></div>
<div style="left:1451.9px;top:107px;width:1.4px;height:27.8px;background:#cfd8e2"></div>
<div style="left:1183.4px;top:207px;width:1216px;height:1.2px;background:#d5dde6"></div>
<svg style="left:1188.2px;top:154.2px;" width="45.1" height="45.1" viewBox="0 0 24 24"><path fill="#32383E" d="M13 7h-2v4H7v2h4v4h2v-4h4v-2h-4V7zm-1-5C6.48 2 2 6.48 2 12s4.48 10 10 10 10-4.48 10-10S17.52 2 12 2zm0 18c-4.41 0-8-3.59-8-8s3.59-8 8-8 8 3.59 8 8-3.59 8-8 8z"/></svg>
<svg style="left:1783.9px;top:154.1px;" width="45" height="45" viewBox="0 0 24 24"><path fill="#32383E" d="M16 9V4h1c.55 0 1-.45 1-1s-.45-1-1-1H7c-.55 0-1 .45-1 1s.45 1 1 1h1v5c0 1.66-1.34 3-3 3v2h5.97v7l1 1 1-1v-7H19v-2c-1.66 0-3-1.34-3-3z"/></svg>
<svg style="left:1840.2px;top:152.7px;" width="48.4" height="48.4" viewBox="0 0 24 24"><path fill="#32383E" d="M4.84 1.98L3.43 3.39l10.38 10.38-1.41 1.41-4.24-4.24-1.41 1.41 5.66 5.66 2.83-2.83 6.6 6.6 1.41-1.41L4.84 1.98zm13.21 10.38L23 7.4 21.57 6l-4.94 4.94 1.42 1.42zm-.71-3.54l-1.41-1.41-2.12 2.12 1.41 1.41 2.12-2.12zM1.08 12.35l5.66 5.66 1.41-1.41-5.66-5.66-1.41 1.41z"/></svg>
<div style="left:1906.2px;top:152.2px;width:149.7px;height:49.3px;border:1px solid #c3d0dd;box-sizing:border-box;background:#FBFCFE"></div>
<div style="left:2003.5px;top:153.2px;width:51.4px;height:47.3px;background:#dde5ee"></div>
<div style="left:1955.3px;top:153.2px;width:1.2px;height:47.3px;background:#c3d0dd"></div>
<div style="left:2003px;top:153.2px;width:1.2px;height:47.3px;background:#c3d0dd"></div>
<svg style="left:1910px;top:154px;" width="46" height="46" viewBox="0 0 46 46"><circle cx="21.8" cy="23" r="14.4" fill="none" stroke="#636b74" stroke-width="5"/><path d="M32.5 33.5L39.5 41" stroke="#636b74" stroke-width="5.5" stroke-linecap="butt"/><path d="M14.8 23H28.8M21.8 16V30" stroke="#636b74" stroke-width="2"/></svg>
<svg style="left:1958.3px;top:157.9px;" width="37.8" height="37.8" viewBox="0 0 24 24"><path fill="#636b74" d="M18 24h-6.55c-1.08 0-2.14-.45-2.89-1.23l-7.3-7.61 2.07-1.83c.62-.55 1.53-.66 2.26-.27L8 14.34V4.79c0-1.38 1.12-2.5 2.5-2.5.17 0 .34.02.51.05.09-1.3 1.17-2.33 2.49-2.33.86 0 1.61.43 2.06 1.09.29-.12.61-.18.94-.18 1.38 0 2.5 1.12 2.5 2.5v.28c.16-.03.33-.05.5-.05 1.38 0 2.5 1.12 2.5 2.5V20c0 2.21-1.79 4-4 4zM4.14 15.28l5.86 6.1c.38.39.9.62 1.44.62H18c1.1 0 2-.9 2-2V6.15c0-.28-.22-.5-.5-.5s-.5.22-.5.5V12h-2V3.42c0-.28-.22-.5-.5-.5s-.5.22-.5.5V12h-2V2.51c0-.28-.22-.5-.5-.5s-.5.22-.5.5V12h-2V4.79c0-.28-.22-.5-.5-.5s-.5.23-.5.5v12.87l-5.35-2.83-.51.45z"/></svg>
<svg style="left:2006px;top:154px;" width="46" height="46" viewBox="0 0 46 46"><rect x="6.8" y="6.2" width="33" height="32.6" fill="none" stroke="#111" stroke-width="4" stroke-dasharray="5.2 2.6" stroke-dashoffset="2"/></svg>
<svg style="left:2074px;top:152px;" width="48" height="48" viewBox="0 0 48 48"><circle cx="22.5" cy="22.3" r="15.8" fill="none" stroke="#32383E" stroke-width="5.2"/><path d="M34.2 34.5L43 43.5" stroke="#32383E" stroke-width="5.6"/><text x="23" y="27.600" text-anchor="middle" class="x1" fill="#32383E">1X</text></svg>
<svg style="left:2131.1px;top:152.1px;" width="49.9" height="49.9" viewBox="0 0 24 24"><path fill="#32383E" d="M17 3H5c-1.11 0-2 .9-2 2v14c0 1.1.89 2 2 2h14c1.1 0 2-.9 2-2V7l-4-4zm2 16H5V5h11.17L19 7.83V19zm-7-7c-1.66 0-3 1.34-3 3s1.34 3 3 3 3-1.34 3-3-1.34-3-3-3zM6 6h9v4H6z"/></svg>
<svg style="left:2190.4px;top:152.8px;" width="49.7" height="49.7" viewBox="0 0 24 24"><path fill="#32383E" d="M12 5V2L8 6l4 4V7c3.31 0 6 2.69 6 6 0 2.97-2.17 5.43-5 5.91v2.02c3.95-.49 7-3.85 7-7.93 0-4.42-3.58-8-8-8zm-6 8c0-1.65.67-3.15 1.76-4.24L6.34 7.34C4.9 8.79 4 10.79 4 13c0 4.08 3.05 7.44 7 7.93v-2.02c-2.83-.48-5-2.94-5-5.91z"/></svg>
<svg style="left:2250.3px;top:154px;" width="45.3" height="45.3" viewBox="0 0 24 24"><path fill="#32383E" d="M7 6h10l-5.01 6.3L7 6zm-2.750-.390C6.270 8.200 10 13 10 13v6c0 .550.450 1 1 1h2c.550 0 1-.450 1-1v-6s3.720-4.800 5.740-7.390c.510-.660.040-1.610-.790-1.610H5.040c-.830 0-1.300.950-.790 1.610z"/></svg>
<svg style="left:2304.7px;top:153.8px;" width="46" height="46" viewBox="0 0 24 24"><path fill="#32383E" d="M19.43 12.98c.04-.32.07-.64.07-.98 0-.34-.03-.66-.07-.98l2.11-1.65c.19-.15.24-.42.12-.64l-2-3.46c-.09-.16-.26-.25-.44-.25-.06 0-.12.01-.17.03l-2.49 1c-.52-.4-1.08-.73-1.69-.98l-.38-2.65C14.46 2.18 14.25 2 14 2h-4c-.25 0-.46.18-.49.42l-.38 2.65c-.61.25-1.17.59-1.69.98l-2.49-1c-.06-.02-.12-.03-.18-.03-.17 0-.34.09-.43.25l-2 3.46c-.13.22-.07.49.12.64l2.11 1.65c-.04.32-.07.65-.07.98 0 .33.03.66.07.98l-2.11 1.65c-.19.15-.24.42-.12.64l2 3.46c.09.16.26.25.44.25.06 0 .12-.01.17-.03l2.49-1c.52.4 1.08.73 1.69.98l.38 2.65c.03.24.24.42.49.42h4c.25 0 .46-.18.49-.42l.38-2.65c.61-.25 1.17-.59 1.69-.98l2.49 1c.06.02.12.03.18.03.17 0 .34-.09.43-.25l2-3.46c.12-.22.07-.49-.12-.64l-2.11-1.65zm-1.98-1.71c.04.31.05.52.05.73 0 .21-.02.43-.05.73l-.14 1.13.89.7 1.08.84-.7 1.21-1.27-.51-1.04-.42-.9.68c-.43.32-.84.56-1.25.73l-1.06.43-.16 1.13-.2 1.35h-1.4l-.19-1.35-.16-1.13-1.06-.43c-.43-.18-.83-.41-1.23-.71l-.91-.7-1.06.43-1.27.51-.7-1.21 1.08-.84.89-.7-.14-1.13c-.03-.31-.05-.54-.05-.74s.02-.43.05-.73l.14-1.13-.89-.7-1.08-.84.7-1.21 1.27.51 1.04.42.9-.68c.43-.32.84-.56 1.25-.73l1.06-.43.16-1.13.2-1.35h1.39l.19 1.35.16 1.13 1.06.43c.43.18.83.41 1.23.71l.91.7 1.06-.43 1.27-.51.7 1.21-1.07.85-.89.7.14 1.13zM12 8c-2.21 0-4 1.79-4 4s1.79 4 4 4 4-1.79 4-4-1.79-4-4-4zm0 6c-1.1 0-2-.9-2-2s.9-2 2-2 2 .9 2 2-.9 2-2 2z"/></svg>
<svg style="left:2356.7px;top:155.5px;" width="42.5" height="42.5" viewBox="0 0 24 24"><path fill="#32383E" d="M21 11V3h-8l3.29 3.29-10 10L3 13v8h8l-3.29-3.29 10-10z" transform="translate(24,0) scale(-1,1)"/></svg>
<svg style="left:1184px;top:209px;" width="1214" height="850" viewBox="0 0 1214 850"><style>.pt circle{r:4.9px}</style><g class="pt" fill="#3a78b5" fill-opacity=".5"><circle cx="538.1" cy="479.4"/><circle cx="453.1" cy="185"/><circle cx="663.3" cy="534.7"/><circle cx="722.9" cy="208.8"/><circle cx="358.9" cy="518.7"/><circle cx="522.3" cy="144.4"/><circle cx="596.7" cy="431.3"/><circle cx="803.8" cy="579.2"/><circle cx="630.2" cy="442.9"/><circle cx="938.8" cy="386.4"/><circle cx="767.2" cy="272"/><circle cx="750.3" cy="146.7"/><circle cx="713.8" cy="282.1"/><circle cx="682.1" cy="182.9"/><circle cx="537.8" cy="563.5"/><circle cx="489.8" cy="512.8"/><circle cx="816.7" cy="635.3"/><circle cx="839.2" cy="557.9"/><circle cx="885.4" cy="223.9"/><circle cx="637.3" cy="483.4"/><circle cx="651.5" cy="514.1"/><circle cx="351.7" cy="593.2"/><circle cx="511.8" cy="306.3"/><circle cx="608.6" cy="699.1"/><circle cx="610" cy="239.9"/><circle cx="751.3" cy="131.1"/><circle cx="472.9" cy="577.8"/><circle cx="556.1" cy="251.7"/><circle cx="307.8" cy="248.2"/><circle cx="527.4" cy="550.7"/><circle cx="839.1" cy="259.7"/><circle cx="803.1" cy="491.2"/><circle cx="684.4" cy="232.8"/><circle cx="599.5" cy="588.9"/><circle cx="782" cy="546.5"/><circle cx="388.9" cy="487"/><circle cx="874.9" cy="611.9"/><circle cx="622.2" cy="110.2"/><circle cx="828" cy="257.5"/><circle cx="541.9" cy="540.9"/><circle cx="615.4" cy="678.4"/><circle cx="351.5" cy="289"/><circle cx="566.5" cy="187"/><circle cx="350.1" cy="489.4"/><circle cx="467.4" cy="544.7"/><circle cx="647" cy="395.3"/><circle cx="725.4" cy="494.7"/><circle cx="943.3" cy="256.2"/><circle cx="994.2" cy="396.4"/><circle cx="364" cy="316"/><circle cx="801.9" cy="220.4"/><circle cx="671.9" cy="304.7"/><circle cx="765.2" cy="169.9"/><circle cx="686.6" cy="631.4"/><circle cx="559.3" cy="284.5"/><circle cx="623.3" cy="350.2"/><circle cx="621.5" cy="404.2"/><circle cx="607.5" cy="344.2"/><circle cx="415.5" cy="252.2"/><circle cx="475.4" cy="455.8"/><circle cx="887.4" cy="495.3"/><circle cx="433.7" cy="494.8"/><circle cx="415.9" cy="539.2"/><circle cx="546.9" cy="462.8"/><circle cx="599.3" cy="379.7"/><circle cx="987.9" cy="431.4"/><circle cx="486" cy="377.5"/><circle cx="712.6" cy="116.1"/><circle cx="636.3" cy="380.2"/><circle cx="269.4" cy="305.2"/><circle cx="687.4" cy="328.7"/><circle cx="564.8" cy="647.3"/><circle cx="387.8" cy="538.6"/><circle cx="810.4" cy="160.3"/><circle cx="727.5" cy="427"/><circle cx="604.6" cy="308.4"/><circle cx="949.2" cy="399.6"/><circle cx="387.5" cy="187.1"/><circle cx="660.8" cy="416.5"/><circle cx="842" cy="282.3"/><circle cx="240.9" cy="447.4"/><circle cx="889.8" cy="601.1"/><circle cx="392.2" cy="455.5"/><circle cx="846.5" cy="188.8"/><circle cx="546" cy="108.5"/><circle cx="731.1" cy="385.9"/><circle cx="717.5" cy="635.5"/><circle cx="850.4" cy="604.3"/><circle cx="685.9" cy="159.7"/><circle cx="786.6" cy="477.4"/><circle cx="906.4" cy="424.2"/><circle cx="550.7" cy="567.8"/><circle cx="687.9" cy="502.8"/><circle cx="786.2" cy="298"/><circle cx="941.1" cy="285.5"/><circle cx="444" cy="260.2"/><circle cx="540.3" cy="391.2"/><circle cx="806.2" cy="243.7"/><circle cx="548.3" cy="522.9"/><circle cx="316.6" cy="605.5"/><circle cx="229.1" cy="507.1"/><circle cx="711.1" cy="364.1"/><circle cx="529.8" cy="664.3"/><circle cx="629.9" cy="378"/><circle cx="838" cy="233.9"/><circle cx="655" cy="416.6"/><circle cx="565.4" cy="503"/><circle cx="239.3" cy="463"/><circle cx="866.6" cy="597.4"/><circle cx="233.5" cy="314.6"/><circle cx="534.6" cy="443.2"/><circle cx="318.4" cy="191.6"/><circle cx="375.1" cy="501.6"/><circle cx="966" cy="470.7"/><circle cx="461.2" cy="265.5"/><circle cx="705.5" cy="279.7"/><circle cx="574" cy="633.3"/><circle cx="544.6" cy="315.1"/><circle cx="551.6" cy="329.3"/><circle cx="351.5" cy="495.2"/><circle cx="565.4" cy="118.5"/><circle cx="601.1" cy="506.3"/><circle cx="741.7" cy="427"/><circle cx="856.6" cy="323.5"/><circle cx="878.8" cy="277"/><circle cx="264.9" cy="299.8"/><circle cx="513" cy="593.4"/><circle cx="640.3" cy="141.9"/><circle cx="579.3" cy="180.8"/><circle cx="997.5" cy="479.8"/><circle cx="354.4" cy="202.8"/><circle cx="969.1" cy="290.1"/><circle cx="288.1" cy="580.4"/><circle cx="601.2" cy="616.2"/><circle cx="454.8" cy="337.8"/><circle cx="695.7" cy="417.2"/><circle cx="977.6" cy="382.6"/><circle cx="545.2" cy="608.8"/><circle cx="685.7" cy="363.5"/><circle cx="931.6" cy="522.8"/><circle cx="870.4" cy="567.3"/><circle cx="563.4" cy="462.5"/><circle cx="646.3" cy="294.3"/><circle cx="755.5" cy="242.3"/><circle cx="954.9" cy="309.3"/><circle cx="635.4" cy="434.9"/><circle cx="1004.4" cy="382.9"/><circle cx="608.4" cy="555.3"/><circle cx="587.4" cy="332.6"/><circle cx="640.1" cy="603.1"/><circle cx="584.4" cy="121.4"/><circle cx="782.5" cy="217.4"/><circle cx="546.4" cy="321.7"/><circle cx="685.8" cy="332.4"/><circle cx="544.5" cy="410.8"/><circle cx="564.7" cy="510.1"/><circle cx="586.4" cy="236.5"/><circle cx="616.2" cy="146.3"/><circle cx="494.6" cy="158.3"/><circle cx="888.1" cy="483.7"/><circle cx="577.8" cy="349.8"/><circle cx="604.9" cy="436.1"/><circle cx="908.2" cy="454.2"/><circle cx="957" cy="248.3"/><circle cx="746.3" cy="381.7"/><circle cx="647.3" cy="411.7"/><circle cx="744.6" cy="169.9"/><circle cx="479.3" cy="175.6"/><circle cx="724" cy="314.6"/><circle cx="482" cy="142.7"/><circle cx="630.6" cy="631.2"/><circle cx="896.6" cy="269"/><circle cx="763.4" cy="147.9"/><circle cx="925.6" cy="454.6"/><circle cx="728.7" cy="507.5"/><circle cx="293.8" cy="331.7"/><circle cx="376.9" cy="190"/><circle cx="418.4" cy="557.6"/><circle cx="705.9" cy="496.7"/><circle cx="491.6" cy="292.1"/><circle cx="586.3" cy="390.7"/><circle cx="712.7" cy="538.6"/><circle cx="841.5" cy="296.5"/><circle cx="699.9" cy="606.1"/><circle cx="963.3" cy="291"/><circle cx="284" cy="294.6"/><circle cx="357.9" cy="615"/><circle cx="505.4" cy="569.7"/><circle cx="1009.4" cy="398.3"/><circle cx="662.7" cy="274.7"/><circle cx="437.5" cy="360.9"/><circle cx="624.1" cy="411.2"/><circle cx="710.7" cy="275.9"/><circle cx="375.8" cy="532.3"/><circle cx="834.2" cy="448.1"/><circle cx="669.2" cy="232.7"/><circle cx="392.8" cy="649.3"/><circle cx="872.8" cy="486.8"/><circle cx="883.4" cy="410.2"/><circle cx="875" cy="553.8"/><circle cx="340.2" cy="558.7"/><circle cx="917.1" cy="488.1"/><circle cx="713.3" cy="651.8"/><circle cx="537.1" cy="671"/><circle cx="914.1" cy="597.4"/><circle cx="217.1" cy="436.4"/><circle cx="556.1" cy="683.6"/><circle cx="724.5" cy="187.3"/><circle cx="802.6" cy="485"/><circle cx="699.5" cy="155.8"/><circle cx="823.3" cy="514.5"/><circle cx="397.7" cy="517.1"/><circle cx="613.7" cy="651.8"/><circle cx="534.6" cy="316.3"/><circle cx="826.1" cy="478.7"/><circle cx="510.2" cy="317.4"/><circle cx="577.8" cy="147"/><circle cx="948" cy="425.5"/><circle cx="314.3" cy="456"/><circle cx="329.9" cy="446.4"/><circle cx="761.9" cy="425"/><circle cx="732.1" cy="293"/><circle cx="646.8" cy="680.8"/><circle cx="895.6" cy="368.9"/><circle cx="621.3" cy="291.9"/><circle cx="963.2" cy="390.5"/><circle cx="731.4" cy="349"/><circle cx="274.3" cy="288.2"/><circle cx="628.4" cy="97"/><circle cx="388.1" cy="271.4"/><circle cx="931.6" cy="464.4"/><circle cx="888.3" cy="376.3"/><circle cx="257.4" cy="283"/><circle cx="377.5" cy="406.9"/><circle cx="836.5" cy="416.3"/><circle cx="923.7" cy="530.5"/><circle cx="899.9" cy="437.1"/><circle cx="667.2" cy="407.9"/><circle cx="566.3" cy="271.3"/><circle cx="849.8" cy="502.6"/><circle cx="275.1" cy="351.5"/><circle cx="887.9" cy="452.6"/><circle cx="615.8" cy="363.4"/><circle cx="953.9" cy="384.5"/><circle cx="207" cy="404.7"/><circle cx="442.1" cy="175.6"/><circle cx="429.1" cy="349.4"/><circle cx="497.6" cy="517.6"/><circle cx="961.8" cy="252.5"/><circle cx="470.2" cy="481.4"/><circle cx="431.8" cy="161.6"/><circle cx="323.1" cy="370.1"/><circle cx="876.3" cy="232.2"/><circle cx="218.7" cy="344.2"/><circle cx="727.1" cy="213.4"/><circle cx="794.1" cy="478.4"/><circle cx="755.1" cy="493.7"/><circle cx="791" cy="544.6"/><circle cx="771.4" cy="526.4"/><circle cx="304.6" cy="440.3"/><circle cx="858" cy="431.7"/><circle cx="479.7" cy="255"/><circle cx="984.2" cy="479.1"/><circle cx="308.6" cy="561"/><circle cx="559.9" cy="480.9"/><circle cx="266.5" cy="526.4"/><circle cx="791.8" cy="152.4"/><circle cx="596.4" cy="635.3"/><circle cx="308.2" cy="415.4"/><circle cx="764.3" cy="510.6"/><circle cx="611.4" cy="168.7"/><circle cx="396.7" cy="332.1"/><circle cx="351.5" cy="531.9"/><circle cx="767" cy="391.2"/><circle cx="875.8" cy="240.6"/><circle cx="975.6" cy="464.1"/><circle cx="443.3" cy="522.3"/><circle cx="642.8" cy="409.6"/><circle cx="538.8" cy="463.6"/><circle cx="575" cy="655.3"/><circle cx="981.3" cy="431.7"/><circle cx="391.1" cy="513.6"/><circle cx="884.2" cy="561.2"/><circle cx="705.8" cy="106"/><circle cx="722.3" cy="216.7"/><circle cx="741.5" cy="264.6"/><circle cx="258.3" cy="476.7"/><circle cx="960.8" cy="502.5"/><circle cx="937.6" cy="507.8"/><circle cx="947.1" cy="396.4"/><circle cx="817.2" cy="196.9"/><circle cx="727.1" cy="162"/><circle cx="213.3" cy="341.4"/><circle cx="824.7" cy="519.4"/><circle cx="527.4" cy="170.8"/><circle cx="358.3" cy="400"/><circle cx="547.9" cy="383.1"/><circle cx="293.2" cy="563.1"/><circle cx="391.9" cy="432.5"/><circle cx="793.8" cy="193.6"/><circle cx="337.8" cy="356"/><circle cx="571.4" cy="446"/><circle cx="820.6" cy="178.4"/><circle cx="789.1" cy="208.9"/><circle cx="684.2" cy="110.5"/><circle cx="703.1" cy="359"/><circle cx="460.5" cy="138.7"/><circle cx="455.1" cy="278.3"/><circle cx="246.7" cy="253.3"/><circle cx="737.5" cy="650.5"/><circle cx="882.8" cy="615.7"/><circle cx="699" cy="515.7"/><circle cx="940.8" cy="275.2"/><circle cx="535.8" cy="230.6"/><circle cx="597.9" cy="232.1"/><circle cx="939.6" cy="283"/><circle cx="557.8" cy="537.9"/><circle cx="260" cy="293.4"/><circle cx="570.6" cy="179.1"/><circle cx="920.9" cy="484.2"/><circle cx="364.3" cy="271.6"/><circle cx="374" cy="273.2"/><circle cx="383.9" cy="641.6"/><circle cx="806.3" cy="383.3"/><circle cx="525.7" cy="303.2"/><circle cx="929.9" cy="545"/><circle cx="768.4" cy="506.1"/><circle cx="702.6" cy="423.5"/><circle cx="642" cy="247.2"/><circle cx="777.6" cy="604.3"/><circle cx="497.5" cy="299.3"/><circle cx="604" cy="569.9"/><circle cx="757.4" cy="325.9"/><circle cx="876" cy="262"/><circle cx="569.4" cy="163.8"/><circle cx="346.8" cy="373.2"/><circle cx="849" cy="174.9"/><circle cx="741.4" cy="399.9"/><circle cx="201.7" cy="397"/><circle cx="599" cy="372.4"/><circle cx="346.7" cy="574.2"/><circle cx="680.8" cy="548.1"/><circle cx="332.8" cy="507.7"/><circle cx="697.6" cy="608.8"/><circle cx="311.2" cy="501.7"/><circle cx="651.1" cy="624.6"/><circle cx="641.1" cy="499.7"/><circle cx="246.2" cy="254.6"/><circle cx="751.2" cy="369.2"/><circle cx="459.4" cy="309.9"/><circle cx="818.4" cy="296.1"/><circle cx="797.8" cy="346.8"/><circle cx="347.7" cy="490.6"/><circle cx="221.1" cy="446.2"/><circle cx="514.2" cy="595.7"/><circle cx="537" cy="450"/><circle cx="902.5" cy="204.8"/><circle cx="764.8" cy="612.3"/><circle cx="224.3" cy="484"/><circle cx="597.2" cy="574.8"/><circle cx="315.2" cy="264.7"/><circle cx="516.5" cy="438.7"/><circle cx="920.9" cy="408.9"/><circle cx="305.7" cy="461"/><circle cx="613.6" cy="242.8"/><circle cx="876.7" cy="528"/><circle cx="350.3" cy="434.9"/><circle cx="605.1" cy="609.3"/><circle cx="767.3" cy="645.6"/><circle cx="551.4" cy="159.7"/><circle cx="835" cy="608.8"/><circle cx="521.4" cy="367.5"/><circle cx="587.9" cy="457.4"/><circle cx="629" cy="615"/><circle cx="895.8" cy="438.3"/><circle cx="572" cy="312.5"/><circle cx="835.9" cy="214.8"/><circle cx="366.4" cy="353.3"/><circle cx="358.2" cy="519.9"/><circle cx="857" cy="383.3"/><circle cx="389.3" cy="521.5"/><circle cx="602.2" cy="317.3"/><circle cx="474.7" cy="537.3"/><circle cx="820.5" cy="340.3"/><circle cx="392" cy="470.5"/><circle cx="471" cy="380.3"/><circle cx="368.2" cy="200.6"/><circle cx="767.7" cy="631"/><circle cx="828.9" cy="560.3"/><circle cx="577.6" cy="340"/><circle cx="329.3" cy="574.2"/><circle cx="558.8" cy="637.1"/><circle cx="480.3" cy="640.4"/><circle cx="598.1" cy="246.1"/><circle cx="788.5" cy="598.1"/><circle cx="809.5" cy="458.6"/><circle cx="688.5" cy="343.5"/><circle cx="732.7" cy="394.1"/><circle cx="459.5" cy="598.2"/><circle cx="730.8" cy="606.7"/><circle cx="775.1" cy="487.2"/><circle cx="375.9" cy="594.4"/><circle cx="708.9" cy="465.9"/><circle cx="345.2" cy="430.7"/><circle cx="303.9" cy="586.3"/><circle cx="614.7" cy="301.6"/><circle cx="287.1" cy="553.9"/><circle cx="557.7" cy="446.9"/><circle cx="884.1" cy="591.7"/><circle cx="693.1" cy="678.1"/><circle cx="716.7" cy="548.3"/><circle cx="584.6" cy="493.4"/><circle cx="878.6" cy="500.2"/><circle cx="765.2" cy="397.3"/><circle cx="324.4" cy="199.3"/><circle cx="949.1" cy="365.8"/><circle cx="392" cy="265.7"/><circle cx="868.9" cy="529.6"/><circle cx="690.2" cy="217"/><circle cx="749.3" cy="240.7"/><circle cx="555.2" cy="559.1"/><circle cx="991.6" cy="315.5"/><circle cx="574.8" cy="380.3"/><circle cx="628.8" cy="198.4"/><circle cx="273" cy="553"/><circle cx="476.4" cy="123.7"/><circle cx="1010.9" cy="412.1"/><circle cx="376.5" cy="266.2"/><circle cx="644.2" cy="285"/><circle cx="454.7" cy="455"/><circle cx="349.5" cy="546.7"/><circle cx="743.4" cy="270"/><circle cx="687.3" cy="355.9"/><circle cx="842.5" cy="597.4"/><circle cx="722.6" cy="256"/><circle cx="466.4" cy="491.1"/><circle cx="359.2" cy="529.9"/><circle cx="831.9" cy="141.6"/><circle cx="585.7" cy="387.3"/><circle cx="492.1" cy="562.1"/><circle cx="647.7" cy="386.5"/><circle cx="376" cy="321.5"/><circle cx="838" cy="239.3"/><circle cx="739.9" cy="675.3"/><circle cx="551.7" cy="315.6"/><circle cx="871.9" cy="620.2"/><circle cx="538.7" cy="597.4"/><circle cx="552.4" cy="314.1"/><circle cx="678.1" cy="124.5"/><circle cx="263.9" cy="426.3"/><circle cx="697.8" cy="105.5"/><circle cx="987.1" cy="341.4"/><circle cx="370.5" cy="543.2"/><circle cx="673.4" cy="565.4"/><circle cx="523.3" cy="135.2"/><circle cx="735.5" cy="243.1"/><circle cx="679.9" cy="680.5"/><circle cx="986.9" cy="512.7"/><circle cx="803.9" cy="367.6"/><circle cx="471.6" cy="136.2"/><circle cx="913.9" cy="503.5"/><circle cx="552.5" cy="340"/><circle cx="336.5" cy="283.2"/><circle cx="1003.8" cy="451.6"/><circle cx="475.4" cy="417.3"/><circle cx="457.4" cy="158.4"/><circle cx="646.5" cy="399.9"/><circle cx="794.1" cy="325.1"/><circle cx="920.8" cy="333.1"/><circle cx="442.4" cy="446.1"/><circle cx="455.3" cy="548.8"/><circle cx="813.7" cy="433.1"/><circle cx="783.5" cy="572"/><circle cx="927" cy="498.5"/><circle cx="723.8" cy="442.3"/><circle cx="916.6" cy="560.7"/><circle cx="614.9" cy="469"/><circle cx="962.7" cy="364.6"/><circle cx="203.1" cy="390.1"/><circle cx="449.7" cy="505.7"/><circle cx="992.1" cy="325.6"/><circle cx="383.1" cy="323"/><circle cx="818.8" cy="269.9"/><circle cx="287.1" cy="272.3"/><circle cx="745.5" cy="558.2"/><circle cx="530.5" cy="310.8"/><circle cx="570.8" cy="450.8"/><circle cx="422.3" cy="288.2"/><circle cx="636" cy="367.2"/><circle cx="344.7" cy="570.3"/><circle cx="296" cy="515.2"/><circle cx="682.6" cy="245.6"/><circle cx="453.2" cy="599"/><circle cx="690.3" cy="420.4"/><circle cx="780.5" cy="535.7"/><circle cx="427.8" cy="499.3"/><circle cx="250.9" cy="270.6"/><circle cx="894" cy="480.8"/><circle cx="621.7" cy="560.6"/><circle cx="714.1" cy="240.7"/><circle cx="913" cy="506.1"/><circle cx="665.9" cy="598.9"/><circle cx="953.2" cy="429.7"/><circle cx="497.8" cy="308.4"/><circle cx="500.7" cy="597.8"/><circle cx="320.5" cy="363.8"/><circle cx="262.3" cy="259.8"/><circle cx="410" cy="357.6"/><circle cx="634.5" cy="676.6"/><circle cx="733.6" cy="648.8"/><circle cx="938.1" cy="252.4"/><circle cx="687" cy="292.9"/><circle cx="541.9" cy="661.3"/><circle cx="693.9" cy="187.4"/><circle cx="207.6" cy="429.3"/><circle cx="399.6" cy="192.5"/><circle cx="645.5" cy="218.6"/><circle cx="782.3" cy="471"/><circle cx="463.8" cy="451.3"/><circle cx="781.6" cy="405"/><circle cx="773.1" cy="642.6"/><circle cx="392.7" cy="284.7"/><circle cx="338.9" cy="624"/><circle cx="758.3" cy="668.8"/><circle cx="305.3" cy="600.4"/><circle cx="421.8" cy="159.4"/><circle cx="918.6" cy="470.6"/><circle cx="453.7" cy="647.7"/><circle cx="649.6" cy="458.5"/><circle cx="210.6" cy="405.8"/><circle cx="549.9" cy="359.2"/><circle cx="350.7" cy="354.4"/><circle cx="297.4" cy="546.7"/><circle cx="338.3" cy="265.2"/><circle cx="576.3" cy="391.9"/><circle cx="532.6" cy="531.2"/><circle cx="510.7" cy="207.4"/><circle cx="711.5" cy="635.5"/><circle cx="952.8" cy="418.1"/><circle cx="598.4" cy="494.3"/><circle cx="414.2" cy="343.7"/><circle cx="403.6" cy="534.9"/><circle cx="542.5" cy="513.7"/><circle cx="882.6" cy="551.1"/><circle cx="451.4" cy="555.1"/><circle cx="242.6" cy="507"/><circle cx="785.4" cy="246.6"/><circle cx="927.5" cy="224.6"/><circle cx="850.8" cy="582.5"/><circle cx="874.6" cy="351.6"/><circle cx="685.6" cy="200.6"/><circle cx="483.2" cy="570.8"/><circle cx="778.3" cy="631"/><circle cx="276.7" cy="417.7"/><circle cx="420.3" cy="263.4"/><circle cx="499" cy="493"/><circle cx="684.1" cy="482.4"/><circle cx="818" cy="194.4"/><circle cx="489.7" cy="129.1"/><circle cx="851.1" cy="331"/><circle cx="641.6" cy="134.8"/><circle cx="214.8" cy="429.9"/><circle cx="538.2" cy="510.9"/><circle cx="791.6" cy="262.1"/><circle cx="576.2" cy="281.3"/><circle cx="265.3" cy="356.5"/><circle cx="417.6" cy="448.8"/><circle cx="351.5" cy="301.8"/><circle cx="843.7" cy="505.7"/><circle cx="489.5" cy="157.6"/><circle cx="725.4" cy="407.8"/><circle cx="592.2" cy="309.5"/><circle cx="715.7" cy="472.6"/><circle cx="832" cy="418.9"/><circle cx="479.7" cy="554"/><circle cx="352" cy="172.8"/><circle cx="635" cy="583.7"/><circle cx="563.7" cy="684"/><circle cx="654.1" cy="617"/><circle cx="580.2" cy="273.3"/><circle cx="612.5" cy="362.8"/><circle cx="798.6" cy="396.8"/><circle cx="460.9" cy="652.5"/><circle cx="661.3" cy="549.9"/><circle cx="475.9" cy="558.3"/><circle cx="353.2" cy="620.1"/><circle cx="556.8" cy="232.3"/><circle cx="761.9" cy="537.8"/><circle cx="584.4" cy="530.8"/><circle cx="493.4" cy="615.6"/><circle cx="965.5" cy="477.1"/><circle cx="673.1" cy="238"/><circle cx="600.1" cy="294.3"/><circle cx="397.3" cy="519.7"/><circle cx="704.3" cy="261.6"/><circle cx="572.7" cy="286.6"/><circle cx="851.3" cy="351.6"/><circle cx="962.2" cy="418.7"/><circle cx="720.3" cy="586.9"/><circle cx="598.1" cy="679.4"/><circle cx="760.6" cy="372"/><circle cx="434.2" cy="539.3"/><circle cx="727.9" cy="336.2"/><circle cx="972.2" cy="425.8"/><circle cx="613" cy="281.7"/><circle cx="316.7" cy="484.2"/><circle cx="332.2" cy="189.9"/><circle cx="479.3" cy="284.2"/><circle cx="923" cy="312.7"/><circle cx="457.1" cy="370.4"/><circle cx="756.2" cy="594.4"/><circle cx="379.9" cy="638.1"/><circle cx="943.9" cy="503.1"/><circle cx="536.7" cy="372.7"/><circle cx="683" cy="437.6"/><circle cx="925.9" cy="389.7"/><circle cx="303.7" cy="336.5"/><circle cx="604" cy="187.4"/><circle cx="250.6" cy="495.5"/><circle cx="603" cy="133.7"/><circle cx="651.3" cy="462.5"/><circle cx="820.9" cy="285.5"/><circle cx="553.7" cy="133.9"/><circle cx="722.3" cy="447.1"/><circle cx="732.1" cy="439.8"/><circle cx="529.3" cy="274.3"/><circle cx="217.2" cy="411"/><circle cx="969.3" cy="393.5"/><circle cx="286.5" cy="285.8"/><circle cx="618.8" cy="243.7"/><circle cx="365.9" cy="623.9"/><circle cx="674.1" cy="348.2"/><circle cx="320.9" cy="610.6"/><circle cx="333.1" cy="224.8"/><circle cx="798.3" cy="233.1"/><circle cx="592" cy="527"/><circle cx="381.5" cy="324.3"/><circle cx="455.9" cy="621.9"/><circle cx="277.8" cy="330"/><circle cx="324.8" cy="364.6"/><circle cx="759.8" cy="478.9"/><circle cx="997.6" cy="435"/><circle cx="681.7" cy="349.5"/><circle cx="891.7" cy="250"/><circle cx="511.8" cy="599.2"/><circle cx="949.5" cy="544.6"/><circle cx="978.5" cy="347.8"/><circle cx="634.8" cy="536.4"/><circle cx="221.3" cy="363.7"/><circle cx="259.1" cy="337.6"/><circle cx="747.9" cy="236.2"/><circle cx="701.9" cy="108.6"/><circle cx="729.2" cy="188.9"/><circle cx="568.9" cy="551.5"/><circle cx="314.5" cy="522.2"/><circle cx="501.9" cy="476.7"/><circle cx="873.2" cy="363.4"/><circle cx="574.1" cy="144"/><circle cx="828.3" cy="348.8"/><circle cx="593.9" cy="346.3"/><circle cx="264.4" cy="552.9"/><circle cx="314.1" cy="323.6"/><circle cx="391.5" cy="494.9"/><circle cx="915.6" cy="551.1"/><circle cx="763.7" cy="192.5"/><circle cx="742.8" cy="582.1"/><circle cx="436.2" cy="622.6"/><circle cx="515.5" cy="513.9"/><circle cx="293.5" cy="247.8"/><circle cx="692.3" cy="606.4"/><circle cx="470.1" cy="464"/><circle cx="523.8" cy="212.3"/><circle cx="463" cy="192"/><circle cx="900.6" cy="234.3"/><circle cx="1017.1" cy="423.3"/><circle cx="248.8" cy="358.4"/><circle cx="739" cy="455"/><circle cx="838.6" cy="397.7"/><circle cx="791.7" cy="155.9"/><circle cx="445.3" cy="423.6"/><circle cx="874.9" cy="426.8"/><circle cx="919" cy="264.8"/><circle cx="557.4" cy="374.5"/><circle cx="314.2" cy="484.2"/><circle cx="486.2" cy="467.4"/><circle cx="745.1" cy="653.9"/><circle cx="928.6" cy="458.4"/><circle cx="902.2" cy="454"/><circle cx="657.5" cy="697.2"/><circle cx="530.6" cy="190.6"/><circle cx="532.1" cy="437.7"/><circle cx="692.7" cy="377.8"/><circle cx="962.4" cy="242.6"/><circle cx="603.3" cy="697.4"/><circle cx="572.4" cy="673.4"/><circle cx="478.4" cy="646.3"/><circle cx="261.8" cy="246.8"/><circle cx="410.3" cy="192.4"/><circle cx="603" cy="546.8"/><circle cx="611.6" cy="491.5"/><circle cx="579.7" cy="690.8"/><circle cx="959.5" cy="293.7"/><circle cx="459.4" cy="590.7"/><circle cx="970" cy="331.8"/><circle cx="386.7" cy="324.1"/><circle cx="825.9" cy="320"/><circle cx="721.1" cy="250"/><circle cx="672.8" cy="154.8"/><circle cx="724.9" cy="303.9"/><circle cx="630.4" cy="246.6"/><circle cx="694" cy="596"/><circle cx="689.2" cy="421.4"/><circle cx="490.4" cy="593.9"/><circle cx="468.8" cy="137.8"/><circle cx="774.6" cy="452.4"/><circle cx="753.5" cy="433.4"/><circle cx="934.7" cy="363.3"/><circle cx="441.1" cy="134.2"/><circle cx="596.2" cy="365.7"/><circle cx="982.6" cy="432.9"/><circle cx="765" cy="199.8"/><circle cx="334.5" cy="382.2"/><circle cx="605.1" cy="237.3"/><circle cx="707.8" cy="296.8"/><circle cx="279.6" cy="471.8"/><circle cx="810.8" cy="552"/><circle cx="363.9" cy="311.9"/><circle cx="302" cy="284.6"/><circle cx="709.4" cy="554.8"/><circle cx="891.8" cy="475.4"/><circle cx="905" cy="186.7"/><circle cx="878.8" cy="512.1"/><circle cx="245.4" cy="520.6"/><circle cx="608.5" cy="262.9"/><circle cx="910.5" cy="271.1"/><circle cx="322" cy="570.7"/><circle cx="500" cy="268.1"/><circle cx="991.6" cy="371.9"/><circle cx="443.4" cy="268.7"/><circle cx="467.9" cy="448.4"/><circle cx="538.2" cy="654.3"/><circle cx="294.6" cy="543.6"/><circle cx="419.6" cy="445.2"/><circle cx="373.1" cy="276.3"/><circle cx="579" cy="493.6"/><circle cx="812.9" cy="177.7"/><circle cx="861.3" cy="431.9"/><circle cx="409.9" cy="273.7"/><circle cx="840.3" cy="345.8"/><circle cx="370.3" cy="607.1"/><circle cx="466.5" cy="572.7"/><circle cx="970.7" cy="377.2"/><circle cx="421.2" cy="305"/><circle cx="441.2" cy="517.8"/><circle cx="669.7" cy="425.9"/><circle cx="721.3" cy="508.1"/><circle cx="715.9" cy="554.5"/><circle cx="468.4" cy="118.1"/><circle cx="492.1" cy="623.6"/><circle cx="260.8" cy="409.4"/><circle cx="307.3" cy="287.9"/><circle cx="891.5" cy="377.7"/><circle cx="832.5" cy="517.8"/><circle cx="635.6" cy="229"/><circle cx="940" cy="462.9"/><circle cx="918" cy="327.1"/><circle cx="810.7" cy="464.5"/><circle cx="861.5" cy="195.3"/><circle cx="455.6" cy="474.3"/><circle cx="970.8" cy="412.5"/><circle cx="593" cy="501.8"/><circle cx="411.1" cy="434.5"/><circle cx="627.3" cy="216.1"/><circle cx="666.9" cy="669.6"/><circle cx="892.2" cy="418.2"/><circle cx="472.3" cy="187.9"/><circle cx="892.2" cy="402.9"/><circle cx="462.1" cy="514.9"/><circle cx="804.1" cy="313.1"/><circle cx="859.7" cy="302.5"/><circle cx="496.6" cy="634.5"/><circle cx="383.5" cy="647.1"/><circle cx="519.3" cy="505"/><circle cx="442.1" cy="609"/><circle cx="944.1" cy="555.5"/><circle cx="480.6" cy="295.3"/><circle cx="294.8" cy="445.4"/><circle cx="653" cy="216"/><circle cx="514.9" cy="595.1"/><circle cx="985.8" cy="330.8"/><circle cx="225.4" cy="368.2"/><circle cx="541.5" cy="356.4"/><circle cx="757.4" cy="233.1"/><circle cx="838.4" cy="383.4"/><circle cx="764.4" cy="471.4"/><circle cx="1014.6" cy="419.7"/><circle cx="801.9" cy="297.1"/><circle cx="512.4" cy="534.6"/><circle cx="449" cy="564.4"/><circle cx="330.5" cy="362.6"/><circle cx="730.8" cy="268.4"/><circle cx="844.2" cy="480.2"/><circle cx="731.5" cy="235"/><circle cx="337.9" cy="484.1"/><circle cx="920.9" cy="426.5"/><circle cx="646.9" cy="699.3"/><circle cx="753.4" cy="339"/><circle cx="682.9" cy="103.2"/><circle cx="944.3" cy="226.5"/><circle cx="656.3" cy="361.4"/><circle cx="562.5" cy="464.1"/><circle cx="976.5" cy="423.3"/><circle cx="373.3" cy="541.1"/><circle cx="762.3" cy="376.1"/><circle cx="804.5" cy="638.9"/><circle cx="331.1" cy="363.9"/><circle cx="719.2" cy="677.3"/><circle cx="343.3" cy="456.2"/><circle cx="661.3" cy="254"/><circle cx="276.8" cy="459.3"/><circle cx="282.2" cy="328.7"/><circle cx="948.2" cy="508.3"/><circle cx="602.2" cy="139.6"/><circle cx="594.7" cy="402.9"/><circle cx="737" cy="215.6"/><circle cx="635.4" cy="189.4"/><circle cx="890.2" cy="514.1"/><circle cx="591.9" cy="427.2"/><circle cx="332.4" cy="516.8"/><circle cx="978.3" cy="483.7"/><circle cx="279.2" cy="512.4"/><circle cx="455.8" cy="141.9"/><circle cx="284.4" cy="565.4"/><circle cx="607.8" cy="662"/><circle cx="604.3" cy="518.7"/><circle cx="947" cy="261.9"/><circle cx="1003.2" cy="327.5"/><circle cx="324.7" cy="186.4"/><circle cx="765" cy="328.1"/><circle cx="510" cy="310.9"/><circle cx="267.8" cy="351.4"/><circle cx="753.5" cy="189.1"/><circle cx="798.5" cy="152.9"/><circle cx="936.5" cy="385.9"/><circle cx="786.8" cy="475"/><circle cx="841.7" cy="313.4"/><circle cx="551.4" cy="113.2"/><circle cx="304.1" cy="262.9"/><circle cx="563.6" cy="416.3"/><circle cx="904.3" cy="242.6"/><circle cx="873.9" cy="565"/><circle cx="351.7" cy="219.9"/><circle cx="513.4" cy="191.6"/><circle cx="841.1" cy="273.8"/><circle cx="510.3" cy="603.8"/><circle cx="458.4" cy="483.3"/><circle cx="309.4" cy="337.4"/><circle cx="846.1" cy="396.8"/><circle cx="646.6" cy="499.4"/><circle cx="591.2" cy="164.8"/><circle cx="844.6" cy="520.8"/><circle cx="936.6" cy="389.4"/><circle cx="740.3" cy="268.7"/><circle cx="849.1" cy="617.2"/><circle cx="533.2" cy="631.6"/><circle cx="359.5" cy="598.1"/><circle cx="788.7" cy="289.4"/><circle cx="390.8" cy="347.4"/><circle cx="680.6" cy="490.6"/><circle cx="252.5" cy="375.4"/><circle cx="305.2" cy="454.7"/><circle cx="379.6" cy="278.7"/><circle cx="777.3" cy="402.2"/><circle cx="706.3" cy="335.7"/><circle cx="451" cy="553.7"/><circle cx="304.9" cy="359.3"/><circle cx="547.5" cy="363.9"/><circle cx="519.1" cy="157.7"/><circle cx="665.9" cy="618.3"/><circle cx="759.9" cy="617.2"/><circle cx="687.6" cy="564.8"/><circle cx="870.4" cy="356.7"/><circle cx="483.7" cy="362"/><circle cx="388.1" cy="609.5"/><circle cx="957.7" cy="266"/><circle cx="311.3" cy="441"/><circle cx="201.2" cy="444.1"/><circle cx="382.2" cy="364.8"/><circle cx="247.9" cy="509.2"/><circle cx="826.2" cy="533.9"/><circle cx="872" cy="163.6"/><circle cx="596.9" cy="429.6"/><circle cx="578" cy="546.7"/><circle cx="479.8" cy="631.6"/><circle cx="744.7" cy="445.2"/><circle cx="892.2" cy="427"/><circle cx="521" cy="243.6"/><circle cx="363.3" cy="605.7"/><circle cx="949.2" cy="355.8"/><circle cx="859.2" cy="495.8"/><circle cx="536.3" cy="501.8"/><circle cx="784.5" cy="207.4"/><circle cx="757.3" cy="494.8"/><circle cx="529.9" cy="125.8"/><circle cx="666.3" cy="191.8"/><circle cx="654.3" cy="203.2"/><circle cx="774.5" cy="456.9"/><circle cx="515.3" cy="295.4"/><circle cx="256.8" cy="309.1"/><circle cx="380.2" cy="303.8"/><circle cx="631.4" cy="271.6"/><circle cx="377.1" cy="618.6"/><circle cx="795.7" cy="347.9"/><circle cx="543.1" cy="403.4"/><circle cx="848.9" cy="445.8"/><circle cx="310.3" cy="213.2"/><circle cx="805.4" cy="343.5"/><circle cx="729.1" cy="404.7"/><circle cx="325.7" cy="607.8"/><circle cx="784.4" cy="272.9"/><circle cx="648.8" cy="423.1"/><circle cx="605.8" cy="313.7"/><circle cx="256.2" cy="450.6"/><circle cx="258.5" cy="327.1"/><circle cx="692.3" cy="181.7"/><circle cx="372.5" cy="565.1"/><circle cx="936" cy="346.2"/><circle cx="660.6" cy="447.2"/><circle cx="453.4" cy="326.9"/><circle cx="723.9" cy="596.8"/><circle cx="552.4" cy="391.6"/><circle cx="788.8" cy="664.1"/><circle cx="707" cy="489.8"/><circle cx="931.2" cy="283.6"/><circle cx="604.4" cy="654.5"/><circle cx="988.5" cy="483.8"/><circle cx="397.5" cy="262.2"/><circle cx="495.4" cy="312.7"/><circle cx="372.2" cy="390.4"/><circle cx="562.5" cy="506.3"/><circle cx="435.2" cy="447.9"/><circle cx="457.3" cy="623.4"/><circle cx="411.7" cy="283.4"/><circle cx="806" cy="661.8"/><circle cx="329.9" cy="453.9"/><circle cx="795.4" cy="310.9"/><circle cx="877.9" cy="303.9"/><circle cx="591.7" cy="302.2"/><circle cx="546.6" cy="181.4"/><circle cx="964.1" cy="517.3"/><circle cx="888.9" cy="396.7"/><circle cx="252.2" cy="380.9"/><circle cx="970.1" cy="404.8"/><circle cx="347.3" cy="285.9"/><circle cx="728.9" cy="467.9"/><circle cx="740.9" cy="239.3"/><circle cx="455.8" cy="642.9"/><circle cx="486.8" cy="529.3"/><circle cx="857.9" cy="439.7"/><circle cx="870.2" cy="227.6"/><circle cx="789" cy="359.6"/><circle cx="666" cy="389.2"/><circle cx="708.9" cy="498.3"/><circle cx="856.4" cy="379.9"/><circle cx="890" cy="526.6"/><circle cx="285.8" cy="305.1"/><circle cx="482" cy="336.2"/><circle cx="886.5" cy="393.3"/><circle cx="754.1" cy="626.9"/><circle cx="414.4" cy="445.4"/><circle cx="694.8" cy="244.5"/><circle cx="525.6" cy="138.5"/><circle cx="540.1" cy="579.6"/><circle cx="866.3" cy="282.4"/><circle cx="662.1" cy="311.4"/><circle cx="609.4" cy="676.1"/><circle cx="772.3" cy="279.7"/><circle cx="912.9" cy="246.4"/><circle cx="396.8" cy="485.4"/><circle cx="491.3" cy="361.3"/><circle cx="690.6" cy="122.9"/><circle cx="980.6" cy="427.9"/><circle cx="646.3" cy="229.7"/><circle cx="876.4" cy="222.4"/><circle cx="409.4" cy="530"/><circle cx="561.5" cy="392.6"/><circle cx="648.5" cy="162.8"/><circle cx="789.9" cy="580.3"/><circle cx="549.7" cy="281.3"/><circle cx="363.9" cy="573.2"/><circle cx="634.1" cy="418.6"/><circle cx="606.8" cy="506.9"/><circle cx="608.2" cy="662.7"/><circle cx="871.3" cy="606.8"/><circle cx="458.9" cy="173.9"/><circle cx="903.3" cy="360.9"/><circle cx="632.3" cy="516"/><circle cx="714.5" cy="628.7"/><circle cx="537" cy="255.2"/><circle cx="929.5" cy="328.5"/><circle cx="977.7" cy="442.3"/><circle cx="240.6" cy="438.7"/><circle cx="354.2" cy="620.2"/><circle cx="795.7" cy="238.9"/><circle cx="369.8" cy="244"/><circle cx="475" cy="323.9"/><circle cx="862.6" cy="357.3"/><circle cx="526.9" cy="456.6"/><circle cx="534.8" cy="445.9"/><circle cx="979.7" cy="361.5"/><circle cx="884.8" cy="201.3"/><circle cx="624.4" cy="303.1"/><circle cx="321.3" cy="214.7"/><circle cx="286.8" cy="539.5"/><circle cx="424.1" cy="583.4"/><circle cx="696" cy="546.7"/><circle cx="578.5" cy="460"/><circle cx="545.5" cy="631.9"/><circle cx="349.4" cy="251.4"/><circle cx="654.9" cy="617"/><circle cx="992.8" cy="472.1"/><circle cx="782.3" cy="438.7"/><circle cx="759.7" cy="290.1"/><circle cx="884.4" cy="564.8"/><circle cx="460.8" cy="369.9"/><circle cx="894.9" cy="190.6"/><circle cx="876.1" cy="227.1"/><circle cx="470" cy="657.3"/><circle cx="463.7" cy="576.4"/><circle cx="753.1" cy="469.7"/><circle cx="700.3" cy="269.3"/><circle cx="382.5" cy="330.5"/><circle cx="710.8" cy="210.5"/><circle cx="482.6" cy="343.6"/><circle cx="753.3" cy="420.3"/><circle cx="282.7" cy="230"/><circle cx="549.8" cy="443"/><circle cx="862.3" cy="579.9"/><circle cx="582.6" cy="263.9"/><circle cx="1017.7" cy="401.3"/><circle cx="310.7" cy="461.3"/><circle cx="922.2" cy="340.9"/><circle cx="434.4" cy="520"/><circle cx="734" cy="414.7"/><circle cx="533.3" cy="419.8"/><circle cx="927.4" cy="573.7"/><circle cx="653.9" cy="669"/><circle cx="512.3" cy="536.1"/><circle cx="314.1" cy="529"/><circle cx="835" cy="506.5"/><circle cx="550.4" cy="145.9"/><circle cx="612.5" cy="182.3"/><circle cx="697.6" cy="481.4"/><circle cx="802.1" cy="411.4"/><circle cx="621.1" cy="186.1"/><circle cx="657.1" cy="546.5"/><circle cx="689.3" cy="249.3"/><circle cx="996.5" cy="351.2"/><circle cx="845.3" cy="366"/><circle cx="531.6" cy="121.8"/><circle cx="248.1" cy="305.4"/><circle cx="718.5" cy="238.9"/><circle cx="815.2" cy="197.7"/><circle cx="532.6" cy="119.8"/><circle cx="309.5" cy="316.5"/><circle cx="368.1" cy="537.3"/><circle cx="755.2" cy="436.2"/><circle cx="803.9" cy="374.2"/><circle cx="614" cy="382.5"/><circle cx="749.7" cy="442.2"/><circle cx="574.4" cy="501.8"/><circle cx="903.9" cy="503"/><circle cx="651" cy="347.8"/><circle cx="878.2" cy="621.9"/><circle cx="638.3" cy="691.6"/><circle cx="406.7" cy="355.3"/><circle cx="201.7" cy="349"/><circle cx="678.7" cy="463.5"/><circle cx="244.6" cy="535.2"/><circle cx="441.2" cy="153"/><circle cx="508.2" cy="257.9"/><circle cx="698.7" cy="614.4"/><circle cx="749.1" cy="650.1"/><circle cx="863.1" cy="608.5"/><circle cx="625.2" cy="102.4"/><circle cx="700.8" cy="503.5"/><circle cx="344.8" cy="189.8"/><circle cx="485.8" cy="617.2"/><circle cx="1001.9" cy="319.5"/><circle cx="288.3" cy="469"/><circle cx="439.5" cy="441.3"/><circle cx="352.4" cy="347"/><circle cx="593.4" cy="273.1"/><circle cx="659.6" cy="232.5"/><circle cx="649" cy="375.2"/><circle cx="792.2" cy="665.9"/><circle cx="444.5" cy="155.3"/><circle cx="296.8" cy="274"/><circle cx="383.7" cy="313"/><circle cx="786.1" cy="514.7"/><circle cx="384.8" cy="557.6"/><circle cx="857" cy="529.4"/><circle cx="505.2" cy="464.2"/><circle cx="234.9" cy="302"/><circle cx="755.5" cy="487.9"/><circle cx="781.8" cy="458.3"/><circle cx="918.2" cy="285.4"/><circle cx="988.8" cy="287.5"/><circle cx="463.4" cy="431.4"/><circle cx="483.9" cy="481.4"/><circle cx="253.4" cy="544.5"/><circle cx="590.1" cy="656.2"/><circle cx="415.5" cy="287"/><circle cx="902.6" cy="454.1"/><circle cx="595.4" cy="545.2"/><circle cx="378.9" cy="337.7"/><circle cx="323.2" cy="582"/><circle cx="756.6" cy="623"/><circle cx="636.9" cy="147.2"/><circle cx="670.3" cy="160.7"/><circle cx="411.6" cy="476.9"/><circle cx="631" cy="527.7"/><circle cx="482.5" cy="259.6"/><circle cx="561.8" cy="204.2"/><circle cx="380.3" cy="630.2"/><circle cx="438.1" cy="391"/><circle cx="266.6" cy="558"/><circle cx="535.5" cy="125.5"/><circle cx="439.4" cy="653.5"/><circle cx="837" cy="446"/><circle cx="388" cy="638"/><circle cx="801.6" cy="518.9"/><circle cx="937.6" cy="414.4"/><circle cx="288.7" cy="574.2"/><circle cx="323.5" cy="422.1"/><circle cx="480" cy="458.3"/><circle cx="562.1" cy="373.5"/><circle cx="892.8" cy="263.5"/><circle cx="831.3" cy="452.9"/><circle cx="349.7" cy="483.1"/><circle cx="553.5" cy="117.4"/><circle cx="694.8" cy="312.7"/><circle cx="438.7" cy="422.4"/><circle cx="866.7" cy="473.1"/><circle cx="715.2" cy="331.1"/><circle cx="253" cy="531.5"/><circle cx="511.3" cy="296.9"/><circle cx="754.1" cy="635.7"/><circle cx="852.7" cy="204"/><circle cx="742.5" cy="473.8"/><circle cx="488.1" cy="364"/><circle cx="606.4" cy="441.4"/><circle cx="737.7" cy="131.9"/><circle cx="552" cy="384.8"/><circle cx="999.1" cy="362.6"/><circle cx="349.7" cy="212.6"/><circle cx="756.9" cy="163.9"/><circle cx="872" cy="377.7"/><circle cx="660.4" cy="430.4"/><circle cx="875.4" cy="374.5"/><circle cx="320.4" cy="586.2"/><circle cx="561.4" cy="577.6"/><circle cx="681" cy="549.1"/><circle cx="846" cy="372"/><circle cx="352.8" cy="611"/><circle cx="423.8" cy="538"/><circle cx="769.9" cy="413.2"/><circle cx="677.9" cy="584.5"/><circle cx="1013" cy="403.9"/><circle cx="949" cy="397.4"/><circle cx="510.8" cy="214.6"/><circle cx="941.3" cy="259.1"/><circle cx="712.9" cy="597.5"/><circle cx="660.1" cy="658.3"/><circle cx="348.1" cy="540.1"/><circle cx="255.1" cy="514.1"/><circle cx="847.1" cy="544.6"/><circle cx="232.6" cy="277.5"/><circle cx="578.7" cy="489.4"/><circle cx="862.7" cy="385.1"/><circle cx="965.6" cy="305.8"/><circle cx="449" cy="357"/><circle cx="823.6" cy="532"/><circle cx="855.5" cy="390.2"/><circle cx="826.3" cy="559.3"/><circle cx="627.4" cy="278.4"/><circle cx="456.5" cy="254.1"/><circle cx="554" cy="299.5"/><circle cx="887" cy="185.4"/><circle cx="307.2" cy="193.6"/><circle cx="863.8" cy="423.2"/><circle cx="592.7" cy="686.1"/><circle cx="501.3" cy="659.5"/><circle cx="702.3" cy="550"/><circle cx="571.5" cy="115.1"/><circle cx="843.6" cy="175.7"/><circle cx="766.1" cy="287.7"/><circle cx="902.3" cy="323.3"/><circle cx="308.9" cy="331.9"/><circle cx="623.4" cy="439.8"/><circle cx="748.3" cy="247.5"/><circle cx="400.2" cy="573.7"/><circle cx="998.6" cy="442.3"/><circle cx="654.1" cy="651.4"/><circle cx="796.6" cy="259.8"/><circle cx="898.9" cy="538.9"/><circle cx="766" cy="279.4"/><circle cx="786.5" cy="156.8"/><circle cx="584.8" cy="638.2"/><circle cx="352.2" cy="519.5"/><circle cx="688.3" cy="686.2"/><circle cx="580.2" cy="463.5"/><circle cx="605.5" cy="558.9"/><circle cx="632.7" cy="414.9"/><circle cx="388.3" cy="622.5"/><circle cx="815.2" cy="199.7"/><circle cx="410.3" cy="455.6"/><circle cx="585.3" cy="343.2"/><circle cx="546.9" cy="436"/><circle cx="608.7" cy="276"/><circle cx="765.9" cy="313.3"/><circle cx="937.3" cy="459.2"/><circle cx="232.7" cy="346.5"/><circle cx="657" cy="156.1"/><circle cx="600.3" cy="489.4"/><circle cx="849" cy="433.7"/><circle cx="301.4" cy="438.2"/><circle cx="785.5" cy="605.5"/><circle cx="727.3" cy="678.4"/><circle cx="813.3" cy="391.5"/><circle cx="444.3" cy="379.2"/><circle cx="937.8" cy="548.2"/><circle cx="465.6" cy="153.8"/><circle cx="575.5" cy="409.1"/><circle cx="908.9" cy="247.7"/><circle cx="560.8" cy="424"/><circle cx="536.3" cy="646.1"/><circle cx="399.7" cy="189.4"/><circle cx="431.5" cy="462.7"/><circle cx="218" cy="328.5"/><circle cx="465.9" cy="415.3"/><circle cx="604.6" cy="452.1"/><circle cx="406.4" cy="335.8"/><circle cx="539.2" cy="298.5"/><circle cx="855.1" cy="251.2"/><circle cx="447.4" cy="485.5"/><circle cx="974.7" cy="349.7"/><circle cx="536.7" cy="286.2"/><circle cx="826.1" cy="501.2"/><circle cx="694.9" cy="659.2"/><circle cx="778.7" cy="297.9"/><circle cx="939.1" cy="464.9"/><circle cx="527.2" cy="251.4"/><circle cx="260.7" cy="313.8"/><circle cx="578.9" cy="129.5"/><circle cx="620.2" cy="165.5"/><circle cx="544" cy="121"/><circle cx="572.3" cy="356.7"/><circle cx="702.8" cy="691.7"/><circle cx="593.6" cy="412.5"/><circle cx="253.7" cy="309.7"/><circle cx="270.5" cy="443.9"/><circle cx="862.1" cy="355.4"/><circle cx="564.9" cy="296.3"/><circle cx="617" cy="167"/><circle cx="447.1" cy="389.1"/><circle cx="634.4" cy="139.9"/><circle cx="363.4" cy="465.6"/><circle cx="876.7" cy="271.4"/><circle cx="351" cy="179.1"/><circle cx="657.9" cy="528"/><circle cx="993.4" cy="370.5"/><circle cx="499.1" cy="558.3"/><circle cx="691.5" cy="585.2"/><circle cx="904.2" cy="341.4"/><circle cx="443.9" cy="447.2"/><circle cx="747.8" cy="230.3"/><circle cx="575.8" cy="680.3"/><circle cx="443" cy="581.9"/><circle cx="496.7" cy="627.7"/><circle cx="465.3" cy="636.1"/><circle cx="932.9" cy="478"/><circle cx="687.2" cy="205.7"/><circle cx="390.1" cy="565"/><circle cx="673.5" cy="147.7"/><circle cx="783.1" cy="559.9"/><circle cx="235.4" cy="355"/><circle cx="486.9" cy="607"/><circle cx="387.1" cy="251.9"/><circle cx="727.8" cy="525.2"/><circle cx="399.7" cy="429.6"/><circle cx="917.9" cy="427.8"/><circle cx="737.1" cy="440.8"/><circle cx="573.8" cy="512.4"/><circle cx="640.2" cy="636.1"/><circle cx="490.5" cy="318.9"/><circle cx="781.1" cy="251"/><circle cx="485.5" cy="452.7"/><circle cx="945.6" cy="540"/><circle cx="855.4" cy="389.5"/><circle cx="499.8" cy="167.9"/><circle cx="981.2" cy="483.1"/><circle cx="721.5" cy="118.2"/><circle cx="569.3" cy="336.8"/><circle cx="336.6" cy="394.4"/><circle cx="650.4" cy="244.4"/><circle cx="711.2" cy="605.4"/><circle cx="722.1" cy="326.1"/><circle cx="340.9" cy="168.7"/><circle cx="408.5" cy="541.5"/><circle cx="799.6" cy="569.2"/><circle cx="400.9" cy="406.9"/><circle cx="814.5" cy="620.3"/><circle cx="860.6" cy="201.9"/><circle cx="722.7" cy="659.7"/><circle cx="669.7" cy="616.2"/><circle cx="372.8" cy="472"/><circle cx="535.7" cy="253.2"/><circle cx="310.6" cy="596.2"/><circle cx="605.1" cy="351.4"/><circle cx="337.5" cy="322.2"/><circle cx="357" cy="561.5"/><circle cx="807" cy="318.1"/><circle cx="413.5" cy="331.4"/><circle cx="989.9" cy="319.9"/><circle cx="396.5" cy="323.5"/><circle cx="941.1" cy="290.1"/><circle cx="671.1" cy="240.2"/><circle cx="573" cy="470.9"/><circle cx="589.4" cy="392.4"/><circle cx="388.8" cy="506.1"/><circle cx="650.8" cy="629.3"/><circle cx="704" cy="656.5"/><circle cx="938.7" cy="233.1"/><circle cx="288.7" cy="205.7"/><circle cx="730.4" cy="529"/><circle cx="936.9" cy="429.8"/><circle cx="607.2" cy="428.9"/><circle cx="411.3" cy="187.9"/><circle cx="948.1" cy="514.6"/><circle cx="328.6" cy="315.5"/><circle cx="527.9" cy="367.2"/><circle cx="592.8" cy="478.5"/><circle cx="982.8" cy="392.4"/><circle cx="292.5" cy="346.9"/><circle cx="783.2" cy="419.8"/><circle cx="894.8" cy="556.1"/><circle cx="815.4" cy="154.9"/><circle cx="504.5" cy="276.2"/><circle cx="464.8" cy="346.9"/><circle cx="506" cy="598.1"/><circle cx="308.4" cy="535.8"/><circle cx="783.6" cy="440"/><circle cx="664.1" cy="538.2"/><circle cx="597.2" cy="254.2"/><circle cx="334" cy="451.5"/><circle cx="912.2" cy="532.2"/><circle cx="447.6" cy="118.5"/><circle cx="645" cy="303.5"/><circle cx="507.5" cy="343.6"/><circle cx="677.7" cy="579.4"/><circle cx="619.7" cy="251.6"/><circle cx="845.2" cy="618.2"/><circle cx="601.1" cy="587.2"/><circle cx="701.9" cy="613.7"/><circle cx="653.5" cy="436"/><circle cx="775.6" cy="285.5"/><circle cx="786.1" cy="513.6"/><circle cx="286.9" cy="449.1"/><circle cx="685.1" cy="474.2"/><circle cx="506.9" cy="135"/><circle cx="821.5" cy="205.8"/><circle cx="654.5" cy="237.5"/><circle cx="607.5" cy="150.5"/><circle cx="398" cy="339.9"/><circle cx="329.1" cy="396.3"/><circle cx="471.7" cy="472"/><circle cx="562.3" cy="429"/><circle cx="629.5" cy="447"/><circle cx="340.7" cy="461.4"/><circle cx="650.1" cy="303"/><circle cx="703.4" cy="217.4"/><circle cx="654" cy="357.6"/><circle cx="397.1" cy="412.7"/><circle cx="785" cy="627.9"/><circle cx="836.5" cy="434"/><circle cx="844.2" cy="163.3"/><circle cx="827.5" cy="302.2"/><circle cx="713.4" cy="625.7"/><circle cx="619" cy="623.5"/><circle cx="494" cy="252.8"/><circle cx="752.5" cy="529.1"/><circle cx="465.2" cy="563.3"/><circle cx="417.5" cy="406.9"/><circle cx="881.9" cy="575.3"/><circle cx="461.9" cy="172"/><circle cx="641.9" cy="267.5"/><circle cx="484.8" cy="489.4"/><circle cx="346.8" cy="293.9"/><circle cx="752.7" cy="323.9"/><circle cx="505.2" cy="254.8"/><circle cx="609.9" cy="349.7"/><circle cx="597.9" cy="565.3"/><circle cx="842.1" cy="458.5"/><circle cx="426.6" cy="371.7"/><circle cx="730.9" cy="533.7"/><circle cx="771.6" cy="124.5"/><circle cx="849.7" cy="256.4"/><circle cx="676.6" cy="608"/><circle cx="293.6" cy="339.5"/><circle cx="270.5" cy="494.2"/><circle cx="426.2" cy="377.2"/><circle cx="905.3" cy="411.6"/><circle cx="871" cy="524.3"/><circle cx="454" cy="537.7"/><circle cx="376.7" cy="439.7"/><circle cx="641.8" cy="610.3"/><circle cx="521.7" cy="248.6"/><circle cx="282" cy="320.4"/><circle cx="531.7" cy="112.4"/><circle cx="793.8" cy="158.8"/><circle cx="397.9" cy="367.8"/><circle cx="567" cy="588.5"/><circle cx="906.6" cy="464.2"/><circle cx="659.2" cy="233.5"/><circle cx="657.4" cy="592.8"/><circle cx="755.2" cy="289.4"/><circle cx="299" cy="355.5"/><circle cx="902.5" cy="480.4"/><circle cx="814.5" cy="639.9"/><circle cx="527" cy="520.3"/><circle cx="255.3" cy="264"/><circle cx="616.5" cy="405.2"/><circle cx="551.9" cy="473.6"/><circle cx="368.8" cy="178.8"/><circle cx="923.5" cy="277.2"/><circle cx="313.1" cy="223"/><circle cx="752.3" cy="252"/><circle cx="344.4" cy="222.7"/><circle cx="640.2" cy="411.7"/><circle cx="566.9" cy="287.3"/><circle cx="437.4" cy="327.6"/><circle cx="638.1" cy="403.7"/><circle cx="720.5" cy="538.7"/><circle cx="587.2" cy="130.2"/><circle cx="683.6" cy="332.5"/><circle cx="900" cy="414.3"/><circle cx="541.7" cy="520.9"/><circle cx="915" cy="448.4"/><circle cx="551.2" cy="696.8"/><circle cx="421.6" cy="624.6"/><circle cx="414.1" cy="568.4"/><circle cx="830.9" cy="210.6"/><circle cx="518" cy="353.2"/><circle cx="832.5" cy="436.7"/><circle cx="429.9" cy="470.8"/><circle cx="581.4" cy="515.6"/><circle cx="260.4" cy="282.4"/><circle cx="521.6" cy="646.3"/><circle cx="452.3" cy="469.5"/><circle cx="459" cy="397.1"/><circle cx="566.5" cy="683.9"/><circle cx="821.9" cy="143.7"/><circle cx="803.1" cy="634.9"/><circle cx="413.4" cy="179.5"/><circle cx="974.4" cy="459.5"/><circle cx="541.8" cy="525.5"/><circle cx="293.5" cy="568"/><circle cx="814.5" cy="384.6"/><circle cx="694.3" cy="392.7"/><circle cx="627.9" cy="358.2"/><circle cx="507.3" cy="212.2"/><circle cx="630.7" cy="571.2"/><circle cx="890.1" cy="272.5"/><circle cx="323.9" cy="436.6"/><circle cx="633.1" cy="637.2"/><circle cx="559.9" cy="96.4"/><circle cx="803.2" cy="454.2"/><circle cx="604.1" cy="212.1"/><circle cx="336.8" cy="318.2"/><circle cx="656.7" cy="320.5"/><circle cx="935.8" cy="243.7"/><circle cx="533.9" cy="156.9"/><circle cx="821.2" cy="606.2"/><circle cx="882.4" cy="607.3"/><circle cx="650.5" cy="175.3"/><circle cx="906" cy="445.1"/><circle cx="826.1" cy="460.9"/><circle cx="431.7" cy="191.2"/><circle cx="888.7" cy="540"/><circle cx="919.9" cy="303.4"/><circle cx="385.1" cy="593.1"/><circle cx="730.5" cy="397.8"/><circle cx="952.7" cy="425.3"/><circle cx="624.4" cy="346.4"/><circle cx="423.9" cy="181.1"/><circle cx="928.8" cy="282.3"/><circle cx="744.2" cy="559.5"/><circle cx="759.4" cy="647.3"/><circle cx="526" cy="660.4"/><circle cx="338.7" cy="605.9"/><circle cx="601.3" cy="618.5"/><circle cx="766.7" cy="326.2"/><circle cx="569.4" cy="478.5"/><circle cx="680.2" cy="486.5"/><circle cx="894.5" cy="348.2"/><circle cx="649.7" cy="221.4"/><circle cx="701.6" cy="351.4"/><circle cx="772.5" cy="324.3"/><circle cx="324.6" cy="573.4"/><circle cx="679.9" cy="632.9"/><circle cx="617.5" cy="417.8"/><circle cx="902.6" cy="281.3"/><circle cx="458.9" cy="191.1"/><circle cx="488.4" cy="299.6"/><circle cx="231.4" cy="477.3"/><circle cx="450.2" cy="494.1"/><circle cx="746.4" cy="437.5"/><circle cx="766.2" cy="130.7"/><circle cx="546.6" cy="239.2"/><circle cx="286.5" cy="225.6"/><circle cx="435.6" cy="459.1"/><circle cx="787.2" cy="358.9"/><circle cx="798.9" cy="456.3"/><circle cx="369.1" cy="557.3"/><circle cx="474.8" cy="666.5"/><circle cx="928.8" cy="207.3"/><circle cx="713.6" cy="508"/><circle cx="424" cy="276.8"/><circle cx="256" cy="355.1"/><circle cx="611.2" cy="660.3"/><circle cx="791.5" cy="180.9"/><circle cx="340" cy="365"/><circle cx="412.8" cy="461.3"/><circle cx="608.3" cy="414.7"/><circle cx="909" cy="285.9"/><circle cx="925.8" cy="243.8"/><circle cx="477.4" cy="185.8"/><circle cx="713.3" cy="642.9"/><circle cx="664.9" cy="499.1"/><circle cx="877.6" cy="576"/><circle cx="789.2" cy="462.6"/><circle cx="726" cy="130.3"/><circle cx="220.3" cy="302.2"/><circle cx="640.3" cy="108.9"/><circle cx="605.8" cy="384.5"/><circle cx="612.5" cy="405.8"/><circle cx="676.3" cy="269.6"/><circle cx="527.6" cy="531.9"/><circle cx="741.8" cy="334"/><circle cx="790.2" cy="249.6"/><circle cx="579.4" cy="103.3"/><circle cx="485" cy="670.5"/><circle cx="827.5" cy="403.8"/><circle cx="852.2" cy="432.7"/><circle cx="505.5" cy="387.9"/><circle cx="941.2" cy="411.9"/><circle cx="809.6" cy="352"/><circle cx="835.2" cy="474.4"/><circle cx="899.2" cy="567.5"/><circle cx="522.1" cy="258.2"/><circle cx="955.9" cy="271.8"/><circle cx="864.9" cy="616.9"/><circle cx="635.3" cy="624.7"/><circle cx="668.9" cy="336.4"/><circle cx="703" cy="453.1"/><circle cx="974" cy="397"/><circle cx="386.1" cy="293.3"/><circle cx="956.5" cy="480.4"/><circle cx="486.8" cy="400.7"/><circle cx="785.5" cy="491.3"/><circle cx="428.2" cy="558.6"/><circle cx="801.9" cy="605.7"/><circle cx="245.7" cy="448.1"/><circle cx="468.4" cy="183.9"/><circle cx="467.5" cy="149.6"/><circle cx="763.3" cy="258.7"/><circle cx="744.7" cy="223.5"/><circle cx="569.4" cy="131.6"/><circle cx="703.1" cy="385.4"/><circle cx="877.4" cy="317.1"/><circle cx="390.9" cy="504.8"/><circle cx="774.7" cy="380.4"/><circle cx="968.6" cy="510.8"/><circle cx="913.4" cy="472.3"/><circle cx="611.5" cy="497.7"/><circle cx="555.9" cy="547.9"/><circle cx="662.5" cy="224.7"/><circle cx="270.4" cy="428.1"/><circle cx="681.9" cy="187.9"/><circle cx="354.8" cy="584.8"/><circle cx="759.2" cy="508.3"/><circle cx="810.1" cy="540.1"/><circle cx="587.4" cy="290.7"/><circle cx="788.5" cy="486.5"/><circle cx="657.5" cy="294"/><circle cx="767.7" cy="624.6"/><circle cx="793" cy="595.9"/><circle cx="671.1" cy="383.7"/><circle cx="734.6" cy="479.2"/><circle cx="694.6" cy="563.4"/><circle cx="396.5" cy="155"/><circle cx="822.9" cy="575.4"/><circle cx="544.4" cy="595"/><circle cx="498.7" cy="187"/><circle cx="792.1" cy="283"/><circle cx="651.1" cy="381.6"/><circle cx="322.6" cy="226.7"/><circle cx="469.9" cy="638.5"/><circle cx="617.9" cy="692.2"/><circle cx="485.7" cy="158.8"/><circle cx="643" cy="436.5"/><circle cx="965.3" cy="383.9"/><circle cx="631.9" cy="306.8"/><circle cx="550.2" cy="157.5"/><circle cx="905.3" cy="401.5"/><circle cx="339.2" cy="259.9"/><circle cx="836.3" cy="525.2"/><circle cx="1015.1" cy="399.8"/><circle cx="212.4" cy="465.3"/><circle cx="518.8" cy="133"/><circle cx="700.5" cy="660"/><circle cx="886.7" cy="462.9"/><circle cx="722.8" cy="557.9"/><circle cx="652.5" cy="252.2"/><circle cx="876.8" cy="264.8"/><circle cx="443.8" cy="289.9"/><circle cx="411.6" cy="313.9"/><circle cx="709.5" cy="681.2"/><circle cx="841.9" cy="545"/><circle cx="716.2" cy="154.3"/><circle cx="744.7" cy="403.3"/><circle cx="598.6" cy="103.9"/><circle cx="576" cy="376.9"/><circle cx="577.6" cy="686.9"/><circle cx="762.8" cy="458.1"/><circle cx="1013.1" cy="437.7"/><circle cx="899.6" cy="441.8"/><circle cx="540.8" cy="563.1"/><circle cx="561.9" cy="261.5"/><circle cx="636" cy="208.1"/><circle cx="503.4" cy="263.9"/><circle cx="581.9" cy="515.4"/><circle cx="873.1" cy="465"/><circle cx="821" cy="446.2"/><circle cx="572.7" cy="100.1"/><circle cx="433.8" cy="472.8"/><circle cx="388.4" cy="189.1"/><circle cx="356.9" cy="469.6"/><circle cx="428.4" cy="535.4"/><circle cx="820.4" cy="458.3"/><circle cx="574" cy="262.1"/><circle cx="626.9" cy="516.5"/><circle cx="515.2" cy="637.3"/><circle cx="491.6" cy="270.6"/><circle cx="257.9" cy="407.8"/><circle cx="993.3" cy="329.9"/><circle cx="267.3" cy="552.8"/><circle cx="846.1" cy="594.8"/><circle cx="752.8" cy="675.5"/><circle cx="825.2" cy="274.5"/><circle cx="958.8" cy="341.2"/><circle cx="585.4" cy="459.4"/><circle cx="514.1" cy="122.5"/><circle cx="751.8" cy="292.9"/><circle cx="416.3" cy="240.2"/><circle cx="227.7" cy="390.4"/><circle cx="607" cy="466.6"/><circle cx="312.4" cy="277.1"/><circle cx="316" cy="433.5"/><circle cx="565" cy="444.4"/><circle cx="834.5" cy="392.9"/><circle cx="445.2" cy="192.2"/><circle cx="748.5" cy="491.7"/><circle cx="253.8" cy="353.8"/><circle cx="845.9" cy="539.9"/><circle cx="556.1" cy="441.7"/><circle cx="823.5" cy="418.6"/><circle cx="265.2" cy="414.7"/><circle cx="573.3" cy="429.2"/><circle cx="804.2" cy="272.2"/><circle cx="858.6" cy="479.5"/><circle cx="281.1" cy="398.5"/><circle cx="764.7" cy="401.4"/><circle cx="1001.3" cy="355.7"/><circle cx="679.9" cy="421.3"/><circle cx="839.4" cy="531.1"/><circle cx="827.7" cy="298"/><circle cx="720.5" cy="600.4"/><circle cx="507.6" cy="341.6"/><circle cx="499.6" cy="606.5"/><circle cx="543.9" cy="168.7"/><circle cx="470.4" cy="391.8"/><circle cx="866.5" cy="347.5"/><circle cx="724.5" cy="648.6"/><circle cx="504.5" cy="190.8"/><circle cx="776.4" cy="625.4"/><circle cx="516" cy="629.2"/><circle cx="382.4" cy="366.2"/><circle cx="376.8" cy="564.2"/><circle cx="228.8" cy="508.1"/><circle cx="867.2" cy="474.3"/><circle cx="246.8" cy="462.6"/><circle cx="292.3" cy="438.5"/><circle cx="380.4" cy="576.7"/><circle cx="285.7" cy="446.5"/><circle cx="671" cy="487.7"/><circle cx="733.7" cy="511.4"/><circle cx="575.1" cy="334.3"/><circle cx="636.2" cy="597.1"/><circle cx="917.1" cy="420.8"/><circle cx="658.6" cy="188.7"/><circle cx="450" cy="193.4"/><circle cx="373" cy="359.2"/><circle cx="636.6" cy="494.5"/><circle cx="837" cy="470.2"/><circle cx="556.8" cy="568.1"/><circle cx="382.7" cy="471.9"/><circle cx="817.3" cy="617.8"/><circle cx="608.7" cy="193.9"/><circle cx="553.2" cy="206.1"/><circle cx="850.1" cy="324.2"/><circle cx="869.4" cy="423.2"/><circle cx="439.6" cy="533.7"/><circle cx="801.4" cy="257.6"/><circle cx="266.4" cy="516.8"/><circle cx="855.7" cy="326.6"/><circle cx="570.5" cy="664.1"/><circle cx="772.6" cy="443.9"/><circle cx="492" cy="578.5"/><circle cx="479.5" cy="521.9"/><circle cx="267" cy="363.4"/><circle cx="738.3" cy="274.8"/><circle cx="804.3" cy="373.9"/><circle cx="375.9" cy="640.9"/><circle cx="905.8" cy="593.4"/><circle cx="1012.1" cy="452.2"/><circle cx="224.2" cy="412.6"/><circle cx="434.6" cy="282.7"/><circle cx="260" cy="450.7"/><circle cx="579.4" cy="577.2"/><circle cx="469.6" cy="394.9"/><circle cx="967.2" cy="501.7"/><circle cx="639" cy="462"/><circle cx="262.1" cy="373.5"/><circle cx="465.7" cy="293.6"/><circle cx="362.7" cy="568.1"/><circle cx="826.3" cy="256.4"/><circle cx="501.2" cy="447.9"/><circle cx="526.9" cy="350.9"/><circle cx="691.9" cy="425.1"/><circle cx="820.2" cy="366.2"/><circle cx="404.7" cy="330.9"/><circle cx="887" cy="520.5"/><circle cx="694.3" cy="144.7"/><circle cx="788.4" cy="459.8"/><circle cx="393.4" cy="242.9"/><circle cx="700.8" cy="212"/><circle cx="231.4" cy="292.9"/><circle cx="300.7" cy="223.5"/><circle cx="604.3" cy="402"/><circle cx="320.4" cy="492.7"/><circle cx="458" cy="262.4"/><circle cx="308.6" cy="502.2"/><circle cx="666.4" cy="270.2"/><circle cx="620.1" cy="296.9"/><circle cx="278.1" cy="420.2"/><circle cx="361.6" cy="368.9"/><circle cx="741.8" cy="198.5"/><circle cx="503.2" cy="363.7"/><circle cx="789" cy="150.6"/><circle cx="293.7" cy="268.8"/><circle cx="630.1" cy="610.9"/><circle cx="635.7" cy="194.6"/><circle cx="243.3" cy="272.6"/><circle cx="360.5" cy="294"/><circle cx="377.1" cy="364.9"/><circle cx="793.1" cy="410.6"/><circle cx="482.9" cy="168.6"/><circle cx="718.7" cy="340.4"/><circle cx="385.9" cy="529.1"/><circle cx="403.2" cy="269.3"/><circle cx="750.6" cy="548.6"/><circle cx="763.6" cy="118.6"/><circle cx="265.8" cy="267.5"/><circle cx="449.3" cy="322.5"/><circle cx="750.9" cy="521.6"/><circle cx="590" cy="573.7"/><circle cx="612.3" cy="130.1"/><circle cx="510.8" cy="481"/><circle cx="560.9" cy="359.9"/><circle cx="659.8" cy="591.6"/><circle cx="715.8" cy="423.3"/><circle cx="766.9" cy="638.2"/><circle cx="771.1" cy="662.3"/><circle cx="712.2" cy="525.4"/><circle cx="695.9" cy="614.7"/><circle cx="315.4" cy="308.9"/><circle cx="414.5" cy="621"/><circle cx="530.6" cy="406.4"/><circle cx="530.9" cy="594.6"/><circle cx="684.1" cy="637.9"/><circle cx="598.3" cy="167.3"/><circle cx="515.1" cy="178.9"/><circle cx="291.4" cy="326.8"/><circle cx="719.5" cy="681.1"/><circle cx="702.9" cy="603.7"/><circle cx="721.6" cy="670.1"/><circle cx="401.7" cy="585.5"/><circle cx="709.3" cy="332.1"/><circle cx="952.1" cy="251.8"/><circle cx="301.8" cy="332.7"/><circle cx="534.3" cy="220.5"/><circle cx="495.3" cy="509.5"/><circle cx="461.8" cy="414.8"/><circle cx="632.8" cy="306.5"/><circle cx="558.9" cy="461.8"/><circle cx="452.6" cy="334.1"/><circle cx="914.5" cy="468.2"/><circle cx="563.6" cy="315.1"/><circle cx="618.1" cy="152.4"/><circle cx="956.9" cy="332.1"/><circle cx="482.5" cy="503.9"/><circle cx="707.4" cy="592.7"/><circle cx="763.2" cy="408.5"/><circle cx="483.8" cy="680"/><circle cx="830.1" cy="548.7"/><circle cx="791.4" cy="212.7"/><circle cx="709.1" cy="373.5"/><circle cx="421.1" cy="518.5"/><circle cx="475" cy="392"/><circle cx="408" cy="633.4"/><circle cx="613.2" cy="683.7"/><circle cx="487" cy="350.4"/><circle cx="724.9" cy="665.6"/><circle cx="869.9" cy="528.2"/><circle cx="317.7" cy="408.5"/><circle cx="724.6" cy="190.9"/><circle cx="440.9" cy="502.7"/><circle cx="722" cy="585.5"/><circle cx="488.8" cy="661.7"/><circle cx="548.9" cy="214.9"/><circle cx="798.9" cy="291.1"/><circle cx="428.5" cy="466.3"/><circle cx="632.9" cy="491.5"/><circle cx="925.2" cy="221.6"/><circle cx="769.3" cy="432.8"/><circle cx="262.4" cy="352.3"/><circle cx="496.9" cy="423.6"/><circle cx="659.4" cy="196.7"/><circle cx="740" cy="242.5"/><circle cx="686.2" cy="360.3"/><circle cx="784.5" cy="318.2"/><circle cx="320.6" cy="301.2"/><circle cx="960.4" cy="258.1"/><circle cx="432.4" cy="160.5"/><circle cx="671.1" cy="250.5"/><circle cx="391.1" cy="329.2"/><circle cx="278" cy="517"/><circle cx="257.9" cy="313.1"/><circle cx="298.3" cy="262.8"/><circle cx="460.1" cy="401"/><circle cx="941.8" cy="541.3"/><circle cx="680.5" cy="593.6"/><circle cx="786.7" cy="181.3"/><circle cx="535.7" cy="615.2"/><circle cx="875.8" cy="431.9"/><circle cx="654.9" cy="503.6"/><circle cx="822.9" cy="500"/><circle cx="418.9" cy="163.5"/><circle cx="503.9" cy="591.1"/><circle cx="724.1" cy="331.4"/><circle cx="813" cy="415.5"/><circle cx="791.5" cy="335.1"/><circle cx="428.2" cy="414.5"/><circle cx="863.6" cy="336.5"/><circle cx="900.1" cy="256.8"/><circle cx="984.8" cy="320"/><circle cx="471.4" cy="406.8"/><circle cx="758.5" cy="505.1"/><circle cx="396.8" cy="500.4"/><circle cx="649.2" cy="591.9"/><circle cx="883.2" cy="565.3"/><circle cx="654.6" cy="673.3"/><circle cx="508" cy="649.2"/><circle cx="517" cy="644.1"/><circle cx="576.2" cy="111.4"/><circle cx="806.1" cy="471.3"/><circle cx="484.1" cy="182.5"/><circle cx="463.1" cy="186.6"/><circle cx="218.4" cy="440.7"/><circle cx="476.2" cy="378.2"/><circle cx="875.6" cy="432.8"/><circle cx="407.6" cy="393.4"/><circle cx="205.5" cy="359.7"/><circle cx="780" cy="122.4"/><circle cx="890.9" cy="351.5"/><circle cx="736.2" cy="666.4"/><circle cx="499.3" cy="326"/><circle cx="308.9" cy="293.8"/><circle cx="401.6" cy="320.4"/><circle cx="969.4" cy="418.5"/><circle cx="711.9" cy="199"/><circle cx="426.3" cy="289.3"/><circle cx="429.2" cy="452.4"/><circle cx="605.4" cy="95.1"/><circle cx="572.4" cy="361.8"/><circle cx="791.1" cy="323.6"/><circle cx="558.8" cy="664.2"/><circle cx="419" cy="551.6"/><circle cx="657.3" cy="608.9"/><circle cx="654.1" cy="139.4"/><circle cx="347.4" cy="362.4"/><circle cx="385" cy="636.4"/><circle cx="664.3" cy="434.1"/><circle cx="893" cy="430.3"/><circle cx="654.2" cy="117.8"/><circle cx="407.1" cy="383.2"/><circle cx="633.8" cy="576"/><circle cx="867.2" cy="326.6"/><circle cx="723.7" cy="545.6"/><circle cx="865.4" cy="543.5"/><circle cx="553.2" cy="289.4"/><circle cx="961.5" cy="323.3"/><circle cx="524.2" cy="640.9"/><circle cx="466.5" cy="444.6"/><circle cx="529.1" cy="459.5"/><circle cx="947" cy="448.2"/><circle cx="966.9" cy="544.6"/><circle cx="608.2" cy="166.8"/><circle cx="476.6" cy="317.8"/><circle cx="669.7" cy="268.1"/><circle cx="1005.6" cy="426"/><circle cx="988.2" cy="377.2"/><circle cx="312.6" cy="260.9"/><circle cx="837.6" cy="496.3"/><circle cx="581.3" cy="186.8"/><circle cx="473.7" cy="336.8"/><circle cx="285.5" cy="573.8"/><circle cx="576.1" cy="474.6"/><circle cx="653.3" cy="232.3"/><circle cx="888.8" cy="286.5"/><circle cx="732.6" cy="629.3"/><circle cx="755" cy="543.7"/><circle cx="702.6" cy="163.7"/><circle cx="750.4" cy="328.1"/><circle cx="606.9" cy="525.1"/><circle cx="719.2" cy="452.6"/><circle cx="561.4" cy="281.6"/><circle cx="666.8" cy="266.7"/><circle cx="402.8" cy="291.2"/><circle cx="641.5" cy="623"/><circle cx="425.1" cy="550.4"/><circle cx="567.2" cy="512.2"/><circle cx="364.6" cy="317.8"/><circle cx="249.6" cy="289.5"/><circle cx="873.3" cy="242.1"/><circle cx="507.4" cy="554"/><circle cx="380.2" cy="487"/><circle cx="858.5" cy="231.2"/><circle cx="728.3" cy="449.2"/><circle cx="705.6" cy="177.1"/><circle cx="326.1" cy="267.4"/><circle cx="571.2" cy="425.5"/><circle cx="805.5" cy="396.5"/><circle cx="897.8" cy="564.5"/><circle cx="944.6" cy="562.6"/><circle cx="449" cy="312.2"/><circle cx="706.5" cy="425.4"/><circle cx="760.4" cy="217.7"/><circle cx="599" cy="656"/><circle cx="772.2" cy="292.6"/><circle cx="595.8" cy="691.1"/><circle cx="420.9" cy="657"/><circle cx="683.4" cy="175.7"/><circle cx="878.1" cy="278.5"/><circle cx="331.3" cy="454.4"/><circle cx="558" cy="698.6"/><circle cx="787.7" cy="646.3"/><circle cx="407.9" cy="458.2"/><circle cx="640.9" cy="671.2"/><circle cx="655.7" cy="410.4"/><circle cx="414.5" cy="535.6"/><circle cx="922.3" cy="203.4"/><circle cx="989.5" cy="384.1"/><circle cx="570" cy="474.8"/><circle cx="566.3" cy="253.5"/><circle cx="723.7" cy="151.1"/><circle cx="615" cy="212.3"/><circle cx="542.4" cy="673.5"/><circle cx="560.6" cy="249.8"/><circle cx="631.3" cy="388.7"/><circle cx="358.6" cy="633.9"/><circle cx="672" cy="225.8"/><circle cx="598.3" cy="125.5"/><circle cx="805.8" cy="428.5"/><circle cx="719.5" cy="189.4"/><circle cx="522.3" cy="207.9"/><circle cx="207.8" cy="459"/><circle cx="979.4" cy="420.7"/><circle cx="592.9" cy="365.5"/><circle cx="692.9" cy="297.8"/><circle cx="812" cy="170.1"/><circle cx="616.3" cy="591.5"/><circle cx="779.2" cy="505.2"/><circle cx="857.1" cy="244.8"/><circle cx="825.9" cy="291.8"/><circle cx="624.6" cy="161.7"/><circle cx="488.4" cy="525.9"/><circle cx="570.6" cy="586.3"/><circle cx="659" cy="209.6"/><circle cx="784.3" cy="525.4"/><circle cx="409.2" cy="370.1"/><circle cx="761" cy="174.5"/><circle cx="455.5" cy="536.7"/><circle cx="845.1" cy="513"/><circle cx="737" cy="353.4"/><circle cx="819.5" cy="472"/><circle cx="567.7" cy="588.8"/><circle cx="364.7" cy="514.8"/><circle cx="384.8" cy="345.2"/><circle cx="516" cy="150.9"/><circle cx="514.9" cy="576.3"/><circle cx="527.6" cy="316.7"/><circle cx="536.4" cy="668.3"/><circle cx="643.6" cy="685.2"/><circle cx="589.2" cy="425.4"/><circle cx="866.2" cy="493.6"/><circle cx="473.5" cy="433.9"/><circle cx="789.2" cy="163.2"/><circle cx="495.5" cy="451.7"/><circle cx="342" cy="236"/><circle cx="365.8" cy="397.4"/><circle cx="861.7" cy="321.6"/><circle cx="633.7" cy="509.7"/><circle cx="220.7" cy="412.3"/><circle cx="651.9" cy="390.5"/><circle cx="976.6" cy="516.3"/><circle cx="544.1" cy="490.7"/><circle cx="828.4" cy="441"/><circle cx="432.4" cy="337.6"/><circle cx="896" cy="546.2"/><circle cx="507.4" cy="468.4"/><circle cx="365.8" cy="358.4"/><circle cx="360.4" cy="268.6"/><circle cx="626.2" cy="515"/><circle cx="628.6" cy="499.1"/><circle cx="583.2" cy="321.2"/><circle cx="330.2" cy="353.7"/><circle cx="478.3" cy="622.1"/><circle cx="789.1" cy="318"/><circle cx="598.8" cy="303.8"/><circle cx="765.4" cy="297.2"/><circle cx="728" cy="633.7"/><circle cx="874" cy="485.9"/><circle cx="805.5" cy="513.8"/><circle cx="355" cy="516.2"/><circle cx="651.6" cy="349.5"/><circle cx="427.5" cy="521.7"/><circle cx="596.9" cy="494"/><circle cx="496.4" cy="190.8"/><circle cx="789.6" cy="461.9"/><circle cx="670.4" cy="212.9"/><circle cx="985.7" cy="468.1"/><circle cx="848.9" cy="183.6"/><circle cx="428.7" cy="125"/><circle cx="868.6" cy="500.1"/><circle cx="319.5" cy="433.6"/><circle cx="803.3" cy="526.3"/><circle cx="530" cy="118.2"/><circle cx="518" cy="545.2"/><circle cx="624.5" cy="297.4"/><circle cx="282.4" cy="344.3"/><circle cx="364.7" cy="179.5"/><circle cx="311.4" cy="212.4"/><circle cx="637.1" cy="128.1"/><circle cx="307.4" cy="387.6"/><circle cx="508" cy="502.9"/><circle cx="961.5" cy="420.2"/><circle cx="495.3" cy="169.8"/><circle cx="399.6" cy="377"/><circle cx="944.1" cy="301.1"/><circle cx="929.5" cy="498.9"/><circle cx="480.6" cy="170.4"/><circle cx="692.8" cy="244.1"/><circle cx="630.7" cy="588"/><circle cx="825.1" cy="543.3"/><circle cx="640.9" cy="444.8"/><circle cx="565.7" cy="556.7"/><circle cx="1013.1" cy="388.2"/><circle cx="246.8" cy="311.2"/><circle cx="923.9" cy="269.2"/><circle cx="495.7" cy="464.8"/><circle cx="333.2" cy="200.7"/><circle cx="659.2" cy="574.6"/><circle cx="694.6" cy="273"/><circle cx="923.5" cy="386.7"/><circle cx="336.9" cy="477.9"/><circle cx="761.4" cy="390.4"/><circle cx="747.1" cy="130.1"/><circle cx="674" cy="261.5"/><circle cx="273.2" cy="569.2"/><circle cx="993.5" cy="361.4"/><circle cx="234.7" cy="424.8"/><circle cx="818.5" cy="156.8"/><circle cx="782.2" cy="134.7"/><circle cx="829.6" cy="453.4"/><circle cx="267.4" cy="276.9"/><circle cx="297" cy="287.4"/><circle cx="789.5" cy="641.4"/><circle cx="682.3" cy="391.8"/><circle cx="822.5" cy="228.8"/><circle cx="896.7" cy="602.9"/><circle cx="324" cy="327.4"/><circle cx="917.4" cy="417.1"/><circle cx="764.1" cy="627.6"/><circle cx="567.4" cy="687.7"/><circle cx="437.7" cy="573.8"/><circle cx="604.2" cy="628"/><circle cx="578.7" cy="94.7"/><circle cx="771" cy="235.7"/><circle cx="713" cy="387"/><circle cx="649.6" cy="288.5"/><circle cx="980.2" cy="298.5"/><circle cx="445.7" cy="674"/><circle cx="639.9" cy="375.8"/><circle cx="481" cy="156.4"/><circle cx="537.5" cy="430.6"/><circle cx="447.4" cy="122.3"/><circle cx="604.5" cy="556.4"/><circle cx="633.9" cy="237.6"/><circle cx="891.6" cy="303.5"/><circle cx="570.6" cy="184.3"/><circle cx="698.9" cy="641.8"/><circle cx="592.2" cy="567.2"/><circle cx="467.1" cy="125.9"/><circle cx="637.6" cy="552.3"/><circle cx="692.1" cy="158.2"/><circle cx="380.5" cy="511.2"/><circle cx="550.9" cy="341.5"/><circle cx="263.7" cy="337.4"/><circle cx="1015.5" cy="435"/><circle cx="644.9" cy="156.7"/><circle cx="789.3" cy="408.2"/><circle cx="291.3" cy="392"/><circle cx="1004.2" cy="327.9"/><circle cx="474.8" cy="503.6"/><circle cx="829.4" cy="603.1"/><circle cx="389" cy="498"/><circle cx="719.7" cy="350.4"/><circle cx="600.4" cy="193"/><circle cx="302.6" cy="365.8"/><circle cx="948" cy="236.4"/><circle cx="375.4" cy="610.8"/><circle cx="522.9" cy="422"/><circle cx="537.1" cy="538.1"/><circle cx="890" cy="280.5"/><circle cx="794" cy="129.6"/><circle cx="600" cy="351.7"/><circle cx="375.8" cy="415.5"/><circle cx="543.5" cy="270.4"/><circle cx="585.8" cy="439.4"/><circle cx="602.2" cy="521"/><circle cx="645.3" cy="351.5"/><circle cx="514.4" cy="521.1"/><circle cx="331.2" cy="439.8"/><circle cx="849.6" cy="401.2"/><circle cx="716.5" cy="623.9"/><circle cx="858.4" cy="539.1"/><circle cx="225" cy="477.2"/><circle cx="431" cy="359.2"/><circle cx="255.2" cy="328.5"/><circle cx="390.2" cy="616.7"/><circle cx="813.8" cy="357.4"/><circle cx="481" cy="656.2"/><circle cx="438.3" cy="468.6"/><circle cx="618.4" cy="376.1"/><circle cx="423.6" cy="465.5"/><circle cx="455.8" cy="493.7"/><circle cx="454.7" cy="401.4"/><circle cx="673.8" cy="323.8"/><circle cx="545.2" cy="136.8"/><circle cx="847.5" cy="361.9"/><circle cx="800.1" cy="383.5"/><circle cx="536.9" cy="528.1"/><circle cx="944.8" cy="468.5"/><circle cx="363.2" cy="265.2"/><circle cx="360.6" cy="534"/><circle cx="916.1" cy="427.9"/><circle cx="512.7" cy="439"/><circle cx="506.7" cy="413.6"/><circle cx="801.7" cy="199.3"/><circle cx="335.3" cy="544.5"/><circle cx="872.5" cy="536.5"/><circle cx="210" cy="472.7"/><circle cx="869" cy="235.5"/><circle cx="425.1" cy="252.3"/><circle cx="852.7" cy="557.9"/><circle cx="1014" cy="433.4"/><circle cx="482.8" cy="351.3"/><circle cx="908.8" cy="603.6"/><circle cx="705.9" cy="540.8"/><circle cx="449.1" cy="567.6"/><circle cx="860.7" cy="381.8"/><circle cx="880.6" cy="312.9"/><circle cx="583.7" cy="165.1"/><circle cx="199.6" cy="372.8"/><circle cx="273.2" cy="510.4"/><circle cx="654.4" cy="612.7"/><circle cx="871.7" cy="355.9"/><circle cx="362.8" cy="289.7"/><circle cx="709.6" cy="434.1"/><circle cx="219.5" cy="378.2"/><circle cx="774.5" cy="547.3"/><circle cx="311.7" cy="342.3"/><circle cx="668.4" cy="496.1"/><circle cx="434.5" cy="270.6"/><circle cx="907.9" cy="269.7"/><circle cx="778.1" cy="517.7"/><circle cx="730.3" cy="657.2"/><circle cx="501.5" cy="615.4"/><circle cx="599.6" cy="575.5"/><circle cx="726.2" cy="558.8"/><circle cx="924.5" cy="481.5"/><circle cx="445.8" cy="502.6"/><circle cx="817.5" cy="139.8"/><circle cx="700.6" cy="626.5"/><circle cx="323.4" cy="427.3"/><circle cx="794.3" cy="636.6"/><circle cx="424.3" cy="660.4"/><circle cx="584.5" cy="336.3"/><circle cx="382.9" cy="534.5"/><circle cx="603.8" cy="582.5"/><circle cx="341.5" cy="614.4"/><circle cx="475.2" cy="192.8"/><circle cx="595" cy="351.4"/><circle cx="609.6" cy="606.4"/><circle cx="594" cy="447.8"/><circle cx="601.8" cy="102.5"/><circle cx="680.2" cy="306.3"/><circle cx="743.2" cy="130.3"/><circle cx="396.3" cy="593.7"/><circle cx="311.1" cy="301.9"/><circle cx="569.8" cy="697.2"/><circle cx="538.2" cy="580.7"/><circle cx="461.8" cy="356.2"/><circle cx="315.6" cy="313"/><circle cx="371.9" cy="355.7"/><circle cx="354.7" cy="542.4"/><circle cx="875.1" cy="347.9"/><circle cx="603.9" cy="178.2"/><circle cx="927.9" cy="376"/><circle cx="506.8" cy="192.9"/><circle cx="385" cy="300.6"/><circle cx="666.1" cy="423.2"/><circle cx="507.3" cy="301.6"/><circle cx="852.2" cy="610.9"/><circle cx="608.1" cy="520.1"/><circle cx="501.7" cy="336.9"/><circle cx="725.2" cy="346.4"/><circle cx="457.7" cy="318"/><circle cx="1009.6" cy="387.1"/><circle cx="891.5" cy="338.6"/><circle cx="528.9" cy="683.3"/><circle cx="727.9" cy="235.3"/><circle cx="672.7" cy="429"/><circle cx="658.6" cy="652.3"/><circle cx="833" cy="445"/><circle cx="446.2" cy="607.3"/><circle cx="611.5" cy="305"/><circle cx="382.2" cy="451.6"/><circle cx="706.7" cy="265.7"/><circle cx="490.2" cy="288.3"/><circle cx="701.8" cy="117.7"/><circle cx="843.8" cy="586.5"/><circle cx="359.9" cy="303.7"/><circle cx="657.9" cy="399.8"/><circle cx="442" cy="355.3"/><circle cx="777" cy="646.3"/><circle cx="575.7" cy="176.7"/><circle cx="494.9" cy="188.6"/><circle cx="684.4" cy="620.5"/><circle cx="419.5" cy="241.1"/><circle cx="431.8" cy="174.5"/><circle cx="777.6" cy="259.2"/><circle cx="589.4" cy="682.9"/><circle cx="291.9" cy="236.2"/><circle cx="746.5" cy="472.4"/><circle cx="651" cy="601.1"/><circle cx="950.6" cy="321.5"/><circle cx="593.6" cy="142"/><circle cx="226" cy="373.2"/><circle cx="706" cy="611.6"/><circle cx="685.2" cy="556.8"/><circle cx="949.1" cy="381"/><circle cx="535.7" cy="291.5"/><circle cx="774.1" cy="633.5"/><circle cx="781.4" cy="509.2"/><circle cx="488.4" cy="121.2"/><circle cx="921.9" cy="464.4"/><circle cx="314.3" cy="184.4"/><circle cx="797.1" cy="436.6"/><circle cx="725.5" cy="585.6"/><circle cx="850" cy="417.4"/><circle cx="706.6" cy="559.9"/><circle cx="685.1" cy="451.3"/><circle cx="579.1" cy="646.1"/><circle cx="584.3" cy="132.2"/><circle cx="371.5" cy="150.5"/><circle cx="718.3" cy="463.1"/><circle cx="611.9" cy="159.2"/><circle cx="339.8" cy="607"/><circle cx="872.3" cy="500.3"/><circle cx="699.1" cy="383.4"/><circle cx="585.5" cy="188.7"/><circle cx="855.2" cy="498.6"/><circle cx="398.8" cy="150"/><circle cx="426.3" cy="551.7"/><circle cx="672.8" cy="468.4"/><circle cx="579.5" cy="468.1"/><circle cx="717.6" cy="640.5"/><circle cx="711.2" cy="589.6"/><circle cx="645.7" cy="278.7"/><circle cx="548.9" cy="624.1"/><circle cx="941.5" cy="307.8"/><circle cx="784.8" cy="454.3"/><circle cx="342.6" cy="314.9"/><circle cx="477.2" cy="188"/><circle cx="618.8" cy="699.7"/><circle cx="504.3" cy="689"/><circle cx="948.5" cy="306.3"/><circle cx="806.8" cy="488.6"/><circle cx="436.7" cy="258.4"/><circle cx="764.9" cy="233.8"/><circle cx="453.8" cy="326.3"/><circle cx="485.7" cy="622.5"/><circle cx="316.6" cy="249.2"/><circle cx="291.3" cy="310.1"/><circle cx="577.6" cy="360.8"/><circle cx="1016.5" cy="366.6"/><circle cx="586.2" cy="407.9"/><circle cx="734.8" cy="653.4"/><circle cx="435.7" cy="455.4"/><circle cx="913.2" cy="358.8"/><circle cx="439.2" cy="187.2"/><circle cx="730.2" cy="471.6"/><circle cx="447" cy="430.6"/><circle cx="753.3" cy="443.8"/><circle cx="955.6" cy="366.5"/><circle cx="703" cy="350.1"/><circle cx="211.2" cy="347.8"/><circle cx="833.5" cy="230"/><circle cx="688.8" cy="683.3"/><circle cx="288.4" cy="279.1"/><circle cx="230.8" cy="461.7"/><circle cx="293.2" cy="404.9"/><circle cx="592.2" cy="592.9"/><circle cx="477" cy="389.3"/><circle cx="207" cy="397.2"/><circle cx="257.3" cy="302.7"/><circle cx="271" cy="270.7"/><circle cx="664.9" cy="340.9"/><circle cx="342.9" cy="590.4"/><circle cx="999.7" cy="384"/><circle cx="736.7" cy="164.8"/><circle cx="637.8" cy="124"/><circle cx="665.6" cy="561.3"/><circle cx="515.6" cy="198.9"/><circle cx="838.3" cy="605.6"/><circle cx="569.3" cy="307.5"/><circle cx="545.9" cy="192.7"/><circle cx="993.7" cy="414.9"/><circle cx="650.7" cy="195.7"/><circle cx="487.1" cy="280.9"/><circle cx="825" cy="584.5"/><circle cx="831.7" cy="567.8"/><circle cx="660.7" cy="472.8"/><circle cx="597.5" cy="455.7"/><circle cx="980.9" cy="375.2"/><circle cx="796.9" cy="429.6"/><circle cx="727.2" cy="582.3"/><circle cx="753.9" cy="334.6"/><circle cx="420.9" cy="540.3"/><circle cx="828.9" cy="486.5"/><circle cx="271.4" cy="538"/><circle cx="673.9" cy="310.3"/><circle cx="790.1" cy="660.3"/><circle cx="722" cy="676.9"/><circle cx="997.2" cy="392.3"/><circle cx="336.7" cy="534.6"/><circle cx="999.8" cy="462.4"/><circle cx="725.1" cy="616.2"/><circle cx="427.7" cy="503.8"/><circle cx="794.5" cy="447.6"/><circle cx="625.1" cy="291.1"/><circle cx="907.3" cy="309.1"/><circle cx="940.5" cy="428.9"/><circle cx="463.7" cy="550.2"/><circle cx="475.4" cy="183.2"/><circle cx="557.9" cy="572.5"/><circle cx="437.4" cy="433"/><circle cx="738.9" cy="535.8"/><circle cx="474" cy="294"/><circle cx="530.5" cy="103.2"/><circle cx="517.4" cy="432.9"/><circle cx="450.8" cy="176.3"/><circle cx="371.8" cy="264.7"/><circle cx="550.5" cy="108.8"/><circle cx="383.3" cy="584.1"/><circle cx="689.9" cy="677.5"/><circle cx="501.4" cy="680.8"/><circle cx="658.5" cy="496.8"/><circle cx="704.5" cy="166.3"/><circle cx="808.4" cy="371.7"/><circle cx="266.7" cy="245.4"/><circle cx="933.9" cy="432.1"/><circle cx="338.8" cy="520.2"/><circle cx="259.6" cy="356.5"/><circle cx="494" cy="247.3"/><circle cx="643.7" cy="418.8"/><circle cx="865.7" cy="273.1"/><circle cx="552.1" cy="352.9"/><circle cx="969.6" cy="391.5"/><circle cx="203.6" cy="379"/><circle cx="549" cy="351.7"/><circle cx="720.7" cy="212.1"/><circle cx="698.2" cy="112.7"/><circle cx="368" cy="480.9"/><circle cx="304.2" cy="299.3"/><circle cx="908.1" cy="381.7"/><circle cx="801" cy="372.4"/><circle cx="730.6" cy="635.7"/><circle cx="549.4" cy="267.7"/><circle cx="536.9" cy="280"/><circle cx="199.1" cy="431.6"/><circle cx="613.1" cy="159.8"/><circle cx="448.4" cy="576.8"/><circle cx="457.7" cy="268.6"/><circle cx="390.6" cy="580.9"/><circle cx="747.7" cy="623.8"/><circle cx="947.6" cy="374.8"/><circle cx="513.8" cy="282.7"/><circle cx="346.7" cy="273.2"/><circle cx="323.8" cy="596.3"/><circle cx="517.8" cy="625.9"/><circle cx="954.4" cy="305.5"/><circle cx="454" cy="430.4"/><circle cx="351.7" cy="262.1"/><circle cx="621.3" cy="278.1"/><circle cx="780.9" cy="462.6"/><circle cx="723.6" cy="509.6"/><circle cx="398.9" cy="616.7"/><circle cx="741.1" cy="551.1"/><circle cx="465.1" cy="660"/><circle cx="333.4" cy="179.4"/><circle cx="700" cy="378.2"/><circle cx="475.4" cy="146.8"/><circle cx="766.6" cy="142.6"/><circle cx="683.3" cy="200.1"/><circle cx="734.4" cy="663.1"/><circle cx="719.2" cy="158.2"/><circle cx="798.5" cy="336.6"/><circle cx="446.4" cy="536"/><circle cx="614.4" cy="670.2"/><circle cx="862" cy="441.6"/><circle cx="568.1" cy="351.3"/><circle cx="792.1" cy="571"/><circle cx="460.6" cy="561.5"/><circle cx="823.7" cy="417"/><circle cx="477.1" cy="305.9"/><circle cx="719.1" cy="415.1"/><circle cx="573.7" cy="255.3"/><circle cx="480.7" cy="606.1"/><circle cx="865.6" cy="481.5"/><circle cx="784.2" cy="465.9"/><circle cx="690.8" cy="293.4"/><circle cx="592.8" cy="211.5"/><circle cx="924.6" cy="485.3"/><circle cx="569" cy="530.8"/><circle cx="585.7" cy="663.9"/><circle cx="803.7" cy="263"/><circle cx="392.5" cy="577.3"/><circle cx="656.4" cy="185.3"/><circle cx="531.3" cy="394.8"/><circle cx="789.8" cy="386.5"/><circle cx="367.4" cy="473.1"/><circle cx="305.1" cy="566.7"/><circle cx="491.6" cy="444"/><circle cx="854.9" cy="242.7"/><circle cx="800.2" cy="272.4"/><circle cx="243" cy="399"/><circle cx="417.2" cy="151.5"/><circle cx="391.4" cy="567.7"/><circle cx="558.5" cy="600"/><circle cx="616.8" cy="529.2"/><circle cx="426.6" cy="190"/><circle cx="681.4" cy="524.3"/><circle cx="603.1" cy="680.7"/><circle cx="711.7" cy="627.7"/><circle cx="517.1" cy="203"/><circle cx="647.2" cy="221.5"/><circle cx="808.6" cy="321.3"/><circle cx="755" cy="172.2"/><circle cx="544.7" cy="648.1"/><circle cx="381" cy="393.4"/><circle cx="753" cy="507.2"/><circle cx="977.7" cy="452.5"/><circle cx="713.1" cy="334.8"/><circle cx="406.5" cy="658.7"/><circle cx="769.9" cy="597.7"/><circle cx="452.2" cy="606.2"/><circle cx="656.9" cy="192.7"/><circle cx="1003.4" cy="480.2"/><circle cx="412.2" cy="152.6"/><circle cx="467.8" cy="270.3"/><circle cx="690.6" cy="333.6"/><circle cx="813.4" cy="380.2"/><circle cx="799.1" cy="418.4"/><circle cx="528.8" cy="689.2"/><circle cx="373.2" cy="338.6"/><circle cx="370.6" cy="422.2"/><circle cx="953" cy="357.4"/><circle cx="396.7" cy="547.7"/><circle cx="571.9" cy="246.9"/><circle cx="586" cy="543.9"/><circle cx="625.6" cy="108.4"/><circle cx="901.1" cy="543.4"/><circle cx="466.9" cy="154"/><circle cx="495.3" cy="403.7"/><circle cx="672.3" cy="676.1"/><circle cx="479" cy="622.2"/><circle cx="879.2" cy="214.6"/><circle cx="596.8" cy="215.5"/><circle cx="561.3" cy="381.1"/><circle cx="994.8" cy="305.2"/><circle cx="648.6" cy="581.4"/><circle cx="471.2" cy="534.9"/><circle cx="655.6" cy="516.7"/><circle cx="929.8" cy="356.1"/><circle cx="708.4" cy="200.7"/><circle cx="556.2" cy="607.4"/><circle cx="331.3" cy="595.3"/><circle cx="1012" cy="359.7"/><circle cx="595.2" cy="543.8"/><circle cx="729" cy="402.9"/><circle cx="509.6" cy="690.9"/><circle cx="340.3" cy="515.5"/><circle cx="753.9" cy="455.1"/><circle cx="350.7" cy="172.1"/><circle cx="693.7" cy="603.5"/><circle cx="538.9" cy="637.6"/><circle cx="514.9" cy="647.8"/><circle cx="506.6" cy="687.8"/><circle cx="934.2" cy="383.1"/><circle cx="728.2" cy="501.2"/><circle cx="733" cy="622.6"/><circle cx="527.8" cy="192.1"/><circle cx="440.1" cy="299.3"/><circle cx="470.5" cy="180.6"/><circle cx="980.6" cy="336.1"/><circle cx="464.6" cy="611.7"/><circle cx="998.6" cy="307"/><circle cx="613.1" cy="221.9"/><circle cx="766.3" cy="553.7"/><circle cx="638.9" cy="261.2"/><circle cx="743.1" cy="156.4"/><circle cx="742.5" cy="566.6"/><circle cx="768.1" cy="301.8"/><circle cx="649.7" cy="480.6"/><circle cx="496.6" cy="428.5"/><circle cx="519.6" cy="128.3"/><circle cx="674.8" cy="647.4"/><circle cx="287" cy="260.7"/><circle cx="664.3" cy="244.9"/><circle cx="270.6" cy="411.7"/><circle cx="247.4" cy="530.8"/><circle cx="470.7" cy="498.4"/><circle cx="732.9" cy="306.6"/><circle cx="492.9" cy="279.7"/><circle cx="915.4" cy="539.3"/><circle cx="674.2" cy="392"/><circle cx="714.1" cy="274.4"/><circle cx="817.6" cy="511.5"/><circle cx="464.4" cy="286.7"/><circle cx="903.2" cy="185.5"/><circle cx="881" cy="452.5"/><circle cx="830.6" cy="286.1"/><circle cx="700.7" cy="465.3"/><circle cx="962.9" cy="345.8"/><circle cx="580" cy="108.8"/><circle cx="610" cy="475.9"/><circle cx="843.1" cy="201.9"/><circle cx="741.3" cy="214.5"/><circle cx="303" cy="272.9"/><circle cx="733.7" cy="635.3"/><circle cx="597" cy="442.6"/><circle cx="866.6" cy="258.7"/><circle cx="657.5" cy="247.7"/><circle cx="725.7" cy="416.6"/><circle cx="545.2" cy="283.9"/><circle cx="418.4" cy="546.5"/><circle cx="841.7" cy="231.1"/><circle cx="407.1" cy="258.8"/><circle cx="469.5" cy="618.7"/><circle cx="304.6" cy="409.8"/><circle cx="656.8" cy="472.3"/><circle cx="787.6" cy="166.1"/><circle cx="1000.2" cy="388.9"/><circle cx="324.1" cy="317.3"/><circle cx="924.2" cy="466.8"/><circle cx="662.4" cy="482.4"/><circle cx="204.1" cy="372.1"/><circle cx="586.1" cy="552.8"/><circle cx="585.3" cy="415.8"/><circle cx="681.7" cy="360.2"/><circle cx="891.1" cy="425.6"/><circle cx="883.5" cy="327.2"/><circle cx="318.3" cy="208.8"/><circle cx="568.1" cy="606.2"/><circle cx="605.7" cy="444.9"/><circle cx="718.9" cy="307.7"/><circle cx="681.7" cy="257.7"/><circle cx="783.6" cy="262.5"/><circle cx="430.5" cy="575.2"/><circle cx="756.5" cy="552"/><circle cx="507" cy="363.3"/><circle cx="447.2" cy="266.7"/><circle cx="695.1" cy="126.6"/><circle cx="240.6" cy="340"/><circle cx="540.6" cy="160.9"/><circle cx="674.6" cy="330.9"/><circle cx="1014.1" cy="419.8"/><circle cx="305.8" cy="394.5"/><circle cx="412" cy="619.6"/><circle cx="347.1" cy="341.5"/><circle cx="647.6" cy="553.3"/><circle cx="587.9" cy="533.2"/><circle cx="849.5" cy="497.8"/><circle cx="764.5" cy="561.8"/><circle cx="962.1" cy="384.2"/><circle cx="575" cy="292.5"/><circle cx="309.4" cy="394"/><circle cx="506.9" cy="471.9"/><circle cx="652.1" cy="495.5"/><circle cx="303.9" cy="580.3"/><circle cx="389.7" cy="574.3"/><circle cx="823.3" cy="419.2"/><circle cx="496.4" cy="133.5"/><circle cx="657.7" cy="641.7"/><circle cx="446.6" cy="328.4"/><circle cx="442.1" cy="438"/><circle cx="869.7" cy="496.7"/><circle cx="712.1" cy="583.4"/><circle cx="676.8" cy="190.9"/><circle cx="809.1" cy="587.9"/><circle cx="883.3" cy="531.5"/><circle cx="776.8" cy="289.9"/><circle cx="639.8" cy="150.8"/><circle cx="882.9" cy="340.3"/><circle cx="832.3" cy="189.3"/><circle cx="771.7" cy="607.9"/><circle cx="807" cy="482.3"/><circle cx="733.2" cy="602.2"/><circle cx="798" cy="509.4"/><circle cx="434.9" cy="391.9"/><circle cx="600.8" cy="443.1"/><circle cx="649.3" cy="437.6"/><circle cx="206.7" cy="417.7"/><circle cx="290.6" cy="398.7"/><circle cx="257.5" cy="369.6"/><circle cx="768.5" cy="257.8"/><circle cx="448.6" cy="334.3"/><circle cx="755.2" cy="459.6"/><circle cx="708.9" cy="115.3"/><circle cx="383.5" cy="539.8"/><circle cx="418.9" cy="315.8"/><circle cx="671" cy="230.9"/><circle cx="341.6" cy="568.3"/><circle cx="818.8" cy="356.9"/><circle cx="757.8" cy="679.5"/><circle cx="204.8" cy="408.2"/><circle cx="497.2" cy="266.9"/><circle cx="517.7" cy="188.7"/><circle cx="928.2" cy="333.2"/><circle cx="353.3" cy="626.8"/><circle cx="614.3" cy="481.4"/><circle cx="404.1" cy="489.2"/><circle cx="672.2" cy="218.3"/><circle cx="883.5" cy="373"/><circle cx="976" cy="402.3"/><circle cx="525.7" cy="383.3"/><circle cx="466.2" cy="272.7"/><circle cx="207.2" cy="368"/><circle cx="566.9" cy="420.5"/><circle cx="271.6" cy="306.2"/><circle cx="681.4" cy="374.7"/><circle cx="760.1" cy="153.5"/><circle cx="859.3" cy="536.9"/><circle cx="794.5" cy="574.5"/><circle cx="603.2" cy="267.7"/><circle cx="918.1" cy="498.2"/><circle cx="812.5" cy="165.3"/><circle cx="856.1" cy="519.2"/><circle cx="858.6" cy="356.5"/><circle cx="279.1" cy="419.5"/><circle cx="725.1" cy="345.8"/><circle cx="581.9" cy="471.4"/><circle cx="695.6" cy="231.2"/><circle cx="765" cy="309.6"/><circle cx="946.9" cy="527.7"/><circle cx="620.4" cy="409.1"/><circle cx="255.6" cy="254"/><circle cx="643.5" cy="436.7"/><circle cx="820.1" cy="385.9"/><circle cx="677.7" cy="642.4"/><circle cx="304.3" cy="309.8"/><circle cx="367.8" cy="593.3"/><circle cx="698.8" cy="655.4"/><circle cx="705.7" cy="529.1"/><circle cx="710.6" cy="357.2"/><circle cx="641.1" cy="601.6"/><circle cx="647" cy="570.9"/><circle cx="686.4" cy="180.9"/><circle cx="800.5" cy="650.3"/><circle cx="683.8" cy="298.4"/><circle cx="832.5" cy="491.3"/><circle cx="447.7" cy="467.5"/><circle cx="865.1" cy="388.1"/><circle cx="800.1" cy="538.6"/><circle cx="738.7" cy="471.4"/><circle cx="948.2" cy="391.1"/><circle cx="936.4" cy="278.3"/><circle cx="224.3" cy="482.5"/><circle cx="452" cy="342.1"/><circle cx="360" cy="585.3"/><circle cx="663.6" cy="152.7"/><circle cx="743" cy="362.1"/><circle cx="715.4" cy="126.2"/><circle cx="796.5" cy="484.6"/><circle cx="964.2" cy="396.7"/><circle cx="971.8" cy="367.2"/><circle cx="579.7" cy="668.4"/><circle cx="464.4" cy="622.5"/><circle cx="580.6" cy="329.8"/><circle cx="961.9" cy="429.8"/><circle cx="772.2" cy="275.5"/><circle cx="707.6" cy="601.2"/><circle cx="521" cy="190"/><circle cx="433.5" cy="407.7"/><circle cx="725" cy="661.9"/><circle cx="307.3" cy="454.2"/><circle cx="671.2" cy="196.8"/><circle cx="510.6" cy="183.1"/><circle cx="758" cy="192.7"/><circle cx="963.5" cy="287.4"/><circle cx="413.9" cy="354.5"/><circle cx="868.3" cy="202.6"/><circle cx="688.2" cy="213.4"/><circle cx="581.5" cy="513.3"/><circle cx="622" cy="178.9"/><circle cx="276.5" cy="216.6"/><circle cx="525" cy="168.4"/><circle cx="490.1" cy="488"/><circle cx="269.5" cy="352.3"/><circle cx="741.9" cy="180.8"/><circle cx="435.5" cy="640.1"/><circle cx="864.2" cy="269.8"/><circle cx="552.8" cy="393.1"/><circle cx="846.4" cy="437.7"/><circle cx="750.3" cy="121.7"/><circle cx="581.5" cy="407.7"/><circle cx="606.1" cy="371.4"/><circle cx="463.1" cy="383.2"/><circle cx="246.5" cy="317.7"/><circle cx="800.2" cy="545.6"/><circle cx="677.8" cy="540.2"/><circle cx="948.4" cy="514.3"/><circle cx="723.5" cy="348.6"/><circle cx="823.4" cy="460.3"/><circle cx="789.2" cy="146.9"/><circle cx="515.1" cy="358.5"/><circle cx="272.1" cy="333.8"/><circle cx="811.6" cy="404.4"/><circle cx="446.7" cy="177.8"/><circle cx="383.1" cy="305.9"/><circle cx="798.3" cy="221.7"/><circle cx="407.3" cy="617.7"/><circle cx="702.4" cy="411.3"/><circle cx="496.3" cy="586.5"/><circle cx="585.4" cy="208.9"/><circle cx="731.1" cy="426.7"/><circle cx="360.5" cy="348.1"/><circle cx="505.9" cy="668.2"/><circle cx="589.5" cy="336.4"/><circle cx="867.8" cy="233.1"/><circle cx="634.4" cy="380.6"/><circle cx="749" cy="301.7"/><circle cx="556.5" cy="151.8"/><circle cx="552.8" cy="137.3"/><circle cx="323.3" cy="402.7"/><circle cx="489.5" cy="514.4"/><circle cx="1003.8" cy="475.7"/><circle cx="918.9" cy="250.2"/><circle cx="913" cy="485.5"/><circle cx="225.7" cy="327.1"/><circle cx="372.1" cy="424.6"/><circle cx="636.5" cy="414.2"/><circle cx="642.8" cy="564.9"/><circle cx="634.2" cy="397.8"/><circle cx="633.4" cy="425.1"/><circle cx="476.3" cy="161.2"/><circle cx="787.3" cy="263"/><circle cx="616.1" cy="541.3"/><circle cx="543.6" cy="442.8"/><circle cx="305.3" cy="342.9"/><circle cx="579.1" cy="568.4"/><circle cx="794.6" cy="371.3"/><circle cx="754.2" cy="658.7"/><circle cx="892.7" cy="545.4"/><circle cx="910.3" cy="492.2"/><circle cx="384" cy="176.2"/><circle cx="928.8" cy="414.5"/><circle cx="351.1" cy="159"/><circle cx="785.7" cy="272.2"/><circle cx="199.8" cy="428.4"/><circle cx="487.5" cy="581.3"/><circle cx="711.2" cy="691.4"/><circle cx="595.7" cy="631.4"/><circle cx="443.2" cy="550.8"/><circle cx="514.6" cy="336.5"/><circle cx="921.6" cy="556.2"/><circle cx="321" cy="463.5"/><circle cx="508.8" cy="566.2"/><circle cx="630.6" cy="296.6"/><circle cx="586.6" cy="692.9"/><circle cx="248" cy="428.6"/><circle cx="656.6" cy="232.5"/><circle cx="565.4" cy="645.9"/><circle cx="427.5" cy="543.7"/><circle cx="272.7" cy="226.8"/><circle cx="259.3" cy="552.1"/><circle cx="405.8" cy="185.4"/><circle cx="661.7" cy="218"/><circle cx="770.4" cy="416.8"/><circle cx="521" cy="167"/><circle cx="273.6" cy="501.5"/><circle cx="471.2" cy="364.2"/><circle cx="654.6" cy="220.1"/><circle cx="592.9" cy="280.1"/><circle cx="971.3" cy="481.4"/><circle cx="224.6" cy="386.9"/><circle cx="487.1" cy="547.3"/><circle cx="761.6" cy="409.7"/><circle cx="590.9" cy="624.7"/><circle cx="636.6" cy="269.9"/><circle cx="518.4" cy="213.8"/><circle cx="470" cy="177"/><circle cx="485.4" cy="438.9"/><circle cx="329.2" cy="195.2"/><circle cx="538.4" cy="584.8"/><circle cx="437.8" cy="513.9"/><circle cx="525.1" cy="135.6"/><circle cx="489.3" cy="481.9"/><circle cx="433.5" cy="527.4"/><circle cx="737.8" cy="605.9"/><circle cx="318.5" cy="513.4"/><circle cx="680.5" cy="207.4"/><circle cx="409.2" cy="517.4"/><circle cx="469.2" cy="361.5"/><circle cx="673.5" cy="484.5"/><circle cx="843" cy="185"/><circle cx="456.7" cy="288.8"/><circle cx="845.8" cy="180.8"/><circle cx="340.1" cy="451"/><circle cx="831.9" cy="520"/><circle cx="679.4" cy="386.9"/><circle cx="390.1" cy="393.3"/><circle cx="356.8" cy="268.7"/><circle cx="436.2" cy="524.3"/><circle cx="631.8" cy="217.2"/><circle cx="397.5" cy="276"/><circle cx="1006.2" cy="409.8"/><circle cx="369.6" cy="330.5"/><circle cx="684" cy="441.9"/><circle cx="913.4" cy="246.7"/><circle cx="838.9" cy="581.9"/><circle cx="834.8" cy="282.3"/><circle cx="713.8" cy="212.7"/><circle cx="769.5" cy="313.9"/><circle cx="834.9" cy="351.8"/><circle cx="864.7" cy="399.7"/><circle cx="960.9" cy="502.5"/><circle cx="531.3" cy="328.4"/><circle cx="731.8" cy="541.5"/><circle cx="415.5" cy="500.7"/><circle cx="319" cy="378"/><circle cx="791" cy="570"/><circle cx="711.3" cy="345.8"/><circle cx="300.2" cy="550.7"/><circle cx="621.9" cy="452.3"/><circle cx="305.3" cy="483.5"/><circle cx="777.8" cy="327.9"/><circle cx="778.7" cy="461.4"/><circle cx="579" cy="342"/><circle cx="530.1" cy="447.9"/><circle cx="365.1" cy="588"/><circle cx="674.2" cy="126.7"/><circle cx="381.4" cy="455.7"/><circle cx="935.1" cy="305.2"/><circle cx="589.5" cy="201.7"/><circle cx="481" cy="469.6"/><circle cx="961.8" cy="321.8"/><circle cx="656.9" cy="224.6"/><circle cx="659.5" cy="474.1"/><circle cx="401.9" cy="350.1"/><circle cx="460.8" cy="446.7"/><circle cx="534.1" cy="162.1"/><circle cx="671.7" cy="285.8"/><circle cx="408.6" cy="643.6"/><circle cx="810.7" cy="297.3"/><circle cx="499.6" cy="324.8"/><circle cx="988.6" cy="443.3"/><circle cx="622.6" cy="665.7"/><circle cx="708.2" cy="504"/><circle cx="407.2" cy="162.3"/><circle cx="656.7" cy="463.7"/><circle cx="882.3" cy="469.2"/><circle cx="874.4" cy="559"/><circle cx="811.2" cy="161.5"/><circle cx="809.8" cy="219.5"/><circle cx="638.1" cy="677.8"/><circle cx="663.5" cy="243.3"/><circle cx="406.3" cy="392.8"/><circle cx="411.7" cy="325.8"/><circle cx="296.1" cy="396"/><circle cx="275.3" cy="233"/><circle cx="552.8" cy="410.5"/><circle cx="402.4" cy="539.9"/><circle cx="527.3" cy="155.4"/><circle cx="304.3" cy="426.6"/><circle cx="268.3" cy="408.4"/><circle cx="852.9" cy="399.6"/><circle cx="792" cy="512.2"/><circle cx="209.6" cy="392"/><circle cx="289.9" cy="330.5"/><circle cx="494.3" cy="191.3"/><circle cx="470.2" cy="492"/><circle cx="461.9" cy="580.3"/><circle cx="972.4" cy="436.7"/><circle cx="376.6" cy="484.2"/><circle cx="804.4" cy="558.4"/><circle cx="891.7" cy="358.5"/><circle cx="460.2" cy="285.9"/><circle cx="438.4" cy="533.3"/><circle cx="569.9" cy="417.5"/><circle cx="839.1" cy="483.2"/><circle cx="969.7" cy="457.7"/><circle cx="569.8" cy="562.4"/><circle cx="259" cy="536.7"/><circle cx="755.1" cy="500.4"/><circle cx="942.2" cy="471.4"/><circle cx="850.6" cy="578.5"/><circle cx="747.2" cy="189.2"/><circle cx="293.9" cy="316.3"/><circle cx="696.8" cy="555.9"/><circle cx="785.8" cy="407.4"/><circle cx="584.1" cy="373.3"/><circle cx="486.1" cy="176.6"/><circle cx="824.1" cy="503.1"/><circle cx="299.4" cy="306.8"/><circle cx="434.7" cy="609.8"/><circle cx="208.4" cy="339.9"/><circle cx="845.6" cy="237.3"/><circle cx="986.2" cy="379.2"/><circle cx="369.1" cy="284"/><circle cx="301.1" cy="343.4"/><circle cx="874.6" cy="474.5"/><circle cx="361.1" cy="290.7"/><circle cx="288.1" cy="237.3"/><circle cx="666.4" cy="453.1"/><circle cx="368.5" cy="335"/><circle cx="923.2" cy="238.3"/><circle cx="302.1" cy="358.8"/><circle cx="583.6" cy="393.9"/><circle cx="590.9" cy="249.7"/><circle cx="659.8" cy="556.2"/><circle cx="641.8" cy="595.7"/><circle cx="689.4" cy="589.9"/><circle cx="628.8" cy="505.7"/><circle cx="382" cy="589.2"/><circle cx="663" cy="347.8"/><circle cx="574.1" cy="423.4"/><circle cx="848" cy="634.2"/><circle cx="578.3" cy="287.7"/><circle cx="782.2" cy="406.7"/><circle cx="239.5" cy="322"/><circle cx="417.2" cy="512.8"/><circle cx="437.6" cy="272.2"/><circle cx="652.7" cy="596.9"/><circle cx="889.7" cy="465.4"/><circle cx="420.9" cy="134.2"/><circle cx="397.9" cy="287"/><circle cx="793.5" cy="649.3"/><circle cx="758.6" cy="237.5"/><circle cx="915.2" cy="530.5"/><circle cx="875.1" cy="524.9"/><circle cx="281.7" cy="298.9"/><circle cx="640.9" cy="456.2"/><circle cx="698.7" cy="378.7"/><circle cx="650.6" cy="125.3"/><circle cx="466.5" cy="377.5"/><circle cx="855.1" cy="602.1"/><circle cx="773.6" cy="648.9"/><circle cx="901.7" cy="540.9"/><circle cx="657.8" cy="628.4"/><circle cx="617.9" cy="206.8"/><circle cx="683.7" cy="191.5"/><circle cx="642.5" cy="561.7"/><circle cx="837.2" cy="614.8"/><circle cx="473.7" cy="302"/><circle cx="842.2" cy="232.9"/><circle cx="231.6" cy="291"/><circle cx="236.4" cy="286.5"/><circle cx="811" cy="207.4"/><circle cx="758.3" cy="614.1"/><circle cx="886.5" cy="425.6"/><circle cx="851.2" cy="424.4"/><circle cx="329.8" cy="523.6"/><circle cx="247.7" cy="359.6"/><circle cx="463.5" cy="489.7"/><circle cx="513.4" cy="137.6"/><circle cx="479.5" cy="402"/><circle cx="262.5" cy="342.4"/><circle cx="711" cy="251.6"/><circle cx="666.7" cy="187.4"/><circle cx="766.4" cy="161.4"/><circle cx="480.9" cy="540.6"/><circle cx="875.9" cy="382.6"/><circle cx="474.8" cy="177.5"/><circle cx="748.9" cy="196.8"/><circle cx="518.8" cy="423.2"/><circle cx="905.4" cy="203.6"/><circle cx="548" cy="314.9"/><circle cx="933.8" cy="215.6"/><circle cx="291.8" cy="532.4"/><circle cx="455.6" cy="635.9"/><circle cx="770.8" cy="165.5"/><circle cx="464.4" cy="265.9"/><circle cx="783.2" cy="664.5"/><circle cx="291.7" cy="478.7"/><circle cx="504.2" cy="360.1"/><circle cx="849" cy="593.2"/><circle cx="560.4" cy="119.5"/><circle cx="576.4" cy="484.9"/><circle cx="929.8" cy="249.2"/><circle cx="786.7" cy="630.5"/><circle cx="523.3" cy="339.3"/><circle cx="650.1" cy="638.6"/><circle cx="766.3" cy="118.6"/><circle cx="877.4" cy="201.6"/><circle cx="954.1" cy="339.5"/><circle cx="1010.5" cy="370.5"/><circle cx="812.2" cy="213.2"/><circle cx="244.6" cy="361.2"/><circle cx="542.6" cy="184.1"/><circle cx="653.6" cy="662.1"/><circle cx="369.8" cy="600.5"/><circle cx="721.6" cy="127.8"/><circle cx="854.9" cy="303.7"/><circle cx="747.5" cy="257.8"/><circle cx="979.7" cy="461.5"/><circle cx="480.8" cy="451.1"/><circle cx="574.8" cy="532.2"/><circle cx="887" cy="555.7"/><circle cx="227" cy="346"/><circle cx="699" cy="554.3"/><circle cx="917.5" cy="298.1"/><circle cx="676.3" cy="242.4"/><circle cx="823.9" cy="551.9"/><circle cx="991.5" cy="427.7"/><circle cx="878.6" cy="249.7"/><circle cx="362.6" cy="313.9"/><circle cx="718.9" cy="616.5"/><circle cx="573.4" cy="253.6"/><circle cx="253.5" cy="481.4"/><circle cx="946.4" cy="448.1"/><circle cx="582.4" cy="247.9"/><circle cx="310.6" cy="376.9"/><circle cx="690.4" cy="302.4"/><circle cx="408.7" cy="518.8"/><circle cx="787" cy="260.9"/><circle cx="397.2" cy="615.8"/><circle cx="733.2" cy="360.3"/><circle cx="283.2" cy="530.8"/><circle cx="368.8" cy="461.1"/><circle cx="497.3" cy="154.2"/><circle cx="821" cy="534.5"/><circle cx="629.5" cy="556"/><circle cx="650.5" cy="643.7"/><circle cx="794.2" cy="433.1"/><circle cx="825.8" cy="352.9"/><circle cx="697" cy="131.9"/><circle cx="413.5" cy="640"/><circle cx="835.5" cy="420.9"/><circle cx="829.6" cy="339"/><circle cx="208.4" cy="335"/><circle cx="570.1" cy="483.8"/><circle cx="706.9" cy="323.9"/><circle cx="302.4" cy="295.7"/><circle cx="556.1" cy="581.6"/><circle cx="849.9" cy="438.7"/><circle cx="804.9" cy="645.3"/><circle cx="711.5" cy="481.4"/><circle cx="586.2" cy="178"/><circle cx="900" cy="441.7"/><circle cx="376" cy="399.6"/><circle cx="433.6" cy="563.9"/><circle cx="869.6" cy="272.2"/><circle cx="415.8" cy="269.3"/><circle cx="259.6" cy="348.4"/><circle cx="700.5" cy="311.1"/><circle cx="826.3" cy="176"/><circle cx="753.7" cy="349.9"/><circle cx="458.8" cy="348.4"/><circle cx="286.8" cy="536"/><circle cx="535.9" cy="669.9"/><circle cx="865.7" cy="212.4"/><circle cx="854" cy="343.3"/><circle cx="745.6" cy="326.4"/><circle cx="463.8" cy="449.4"/><circle cx="554.2" cy="230"/><circle cx="844.2" cy="208.4"/><circle cx="424.3" cy="283.6"/><circle cx="318.1" cy="326.9"/><circle cx="696.1" cy="186.1"/><circle cx="786" cy="154.2"/><circle cx="228.3" cy="406.9"/><circle cx="705.2" cy="499.7"/><circle cx="372.3" cy="494.8"/><circle cx="381.2" cy="580.4"/><circle cx="827.3" cy="573.8"/><circle cx="417.7" cy="484.4"/><circle cx="897.2" cy="421"/><circle cx="794.7" cy="352.9"/><circle cx="624.1" cy="269.6"/><circle cx="888.3" cy="303.4"/><circle cx="910.3" cy="220.1"/><circle cx="234.4" cy="482.1"/><circle cx="884.7" cy="353.5"/><circle cx="419.4" cy="628.6"/><circle cx="365.6" cy="352.8"/><circle cx="295.2" cy="484.7"/><circle cx="843.5" cy="211.9"/><circle cx="696.5" cy="540.6"/><circle cx="779.1" cy="308.3"/><circle cx="608" cy="501.5"/><circle cx="509.4" cy="104.4"/><circle cx="794.3" cy="209.8"/><circle cx="705.3" cy="462.1"/><circle cx="446.8" cy="143.9"/><circle cx="909.1" cy="399.2"/><circle cx="718.6" cy="137.5"/><circle cx="654.9" cy="389"/><circle cx="674.9" cy="654.9"/><circle cx="945.1" cy="464.9"/><circle cx="932.7" cy="524.6"/><circle cx="583.6" cy="463.8"/><circle cx="667.3" cy="431.4"/><circle cx="534.2" cy="629.7"/><circle cx="932.5" cy="473.4"/><circle cx="739.9" cy="367"/><circle cx="755.4" cy="645.2"/><circle cx="545.5" cy="302.9"/><circle cx="760.6" cy="480.6"/><circle cx="721.4" cy="556.9"/><circle cx="495.6" cy="347.5"/><circle cx="474" cy="553.5"/><circle cx="948" cy="547"/><circle cx="719.6" cy="171.4"/><circle cx="572.3" cy="159.8"/><circle cx="492.6" cy="406.8"/><circle cx="583.2" cy="581.6"/><circle cx="278.7" cy="482.7"/><circle cx="896" cy="190"/><circle cx="792" cy="583.3"/><circle cx="390.2" cy="552.6"/><circle cx="493.6" cy="539.7"/><circle cx="746" cy="338.5"/><circle cx="769.4" cy="269.1"/><circle cx="741.8" cy="413.4"/><circle cx="855.2" cy="278.1"/><circle cx="536.5" cy="309"/><circle cx="692.2" cy="521.8"/><circle cx="634.2" cy="259.5"/><circle cx="406.5" cy="509.8"/><circle cx="728" cy="144.6"/><circle cx="441.4" cy="590"/><circle cx="312.6" cy="479.1"/><circle cx="779.9" cy="589.4"/><circle cx="397.7" cy="161.3"/><circle cx="597.1" cy="318.3"/><circle cx="776.3" cy="439.9"/><circle cx="221.2" cy="308.5"/><circle cx="728.7" cy="685.2"/><circle cx="654.2" cy="594"/><circle cx="988.6" cy="446.5"/><circle cx="493.9" cy="115.2"/><circle cx="801.7" cy="348.8"/><circle cx="746" cy="549.1"/><circle cx="229.1" cy="434.5"/><circle cx="582.9" cy="160.9"/><circle cx="605.2" cy="419.9"/><circle cx="275.9" cy="233.4"/><circle cx="414.5" cy="435.2"/><circle cx="223.6" cy="354.5"/><circle cx="723.7" cy="404.1"/><circle cx="1017" cy="408.2"/><circle cx="567.6" cy="574.2"/><circle cx="689.2" cy="655.8"/><circle cx="508.9" cy="337"/><circle cx="1000.2" cy="372.3"/><circle cx="284.3" cy="457.6"/><circle cx="737.2" cy="343"/><circle cx="271.4" cy="301.7"/><circle cx="657.2" cy="586.2"/><circle cx="447.9" cy="480.9"/><circle cx="573.4" cy="643.4"/><circle cx="678.6" cy="401.3"/><circle cx="251.3" cy="290"/><circle cx="970.5" cy="407.4"/><circle cx="793.6" cy="546.6"/><circle cx="949.6" cy="414.7"/><circle cx="365.1" cy="301"/><circle cx="795.7" cy="427.8"/><circle cx="780.6" cy="626.1"/><circle cx="618.5" cy="656"/><circle cx="366.5" cy="157.2"/><circle cx="454.1" cy="661.5"/><circle cx="490.7" cy="641.9"/><circle cx="686.8" cy="661.5"/><circle cx="492.4" cy="104.6"/><circle cx="541.1" cy="688.6"/><circle cx="981" cy="276.7"/><circle cx="864.9" cy="327.3"/><circle cx="879.3" cy="467.8"/><circle cx="347.3" cy="532.4"/><circle cx="422.2" cy="372.9"/><circle cx="350.6" cy="616.3"/><circle cx="719.1" cy="547"/><circle cx="376" cy="354"/><circle cx="781.6" cy="542.2"/><circle cx="937.3" cy="502.7"/><circle cx="974.1" cy="436.5"/><circle cx="834.8" cy="356.5"/><circle cx="584.6" cy="651.4"/><circle cx="585.2" cy="422.8"/><circle cx="477.4" cy="108.2"/><circle cx="675.9" cy="678.8"/><circle cx="872.9" cy="283.1"/><circle cx="594.6" cy="102.1"/><circle cx="300.9" cy="268.9"/><circle cx="527.5" cy="281.1"/><circle cx="598.1" cy="351.6"/><circle cx="371.2" cy="182.8"/><circle cx="417.1" cy="139.1"/><circle cx="695.8" cy="257.4"/><circle cx="692.1" cy="648.4"/><circle cx="922.1" cy="563.7"/><circle cx="293.2" cy="252.2"/><circle cx="491.6" cy="384.2"/><circle cx="821" cy="303.5"/><circle cx="718.3" cy="219.2"/><circle cx="890.4" cy="480.1"/><circle cx="916.6" cy="531.7"/><circle cx="820.5" cy="544.5"/><circle cx="545" cy="256.7"/><circle cx="716.5" cy="351.6"/><circle cx="450.1" cy="324"/><circle cx="309.9" cy="321.4"/><circle cx="402.3" cy="598.8"/><circle cx="468.3" cy="298.2"/><circle cx="936.5" cy="260.6"/><circle cx="830.7" cy="165.3"/><circle cx="299.2" cy="274.7"/><circle cx="653.3" cy="367.7"/><circle cx="327.7" cy="225"/><circle cx="706.9" cy="136.7"/><circle cx="621.1" cy="180.8"/><circle cx="743.4" cy="509.4"/><circle cx="287.9" cy="289.6"/><circle cx="952" cy="536.3"/><circle cx="765.3" cy="580.3"/><circle cx="905.9" cy="350.2"/><circle cx="888.3" cy="369.6"/><circle cx="609.6" cy="518.9"/><circle cx="322" cy="337.4"/><circle cx="576.6" cy="357.3"/><circle cx="651.9" cy="191.6"/><circle cx="375.2" cy="167.8"/><circle cx="540.9" cy="415.7"/><circle cx="574.3" cy="629.8"/><circle cx="414.8" cy="380.1"/><circle cx="616.1" cy="536"/><circle cx="388.4" cy="394.8"/><circle cx="437.6" cy="590.8"/><circle cx="792.8" cy="305.1"/><circle cx="246.2" cy="499.6"/><circle cx="579.7" cy="324.4"/><circle cx="735.3" cy="583.1"/><circle cx="1004.8" cy="365.4"/><circle cx="710.2" cy="201.1"/><circle cx="669" cy="502.6"/><circle cx="683.2" cy="168.5"/><circle cx="329.7" cy="453.4"/><circle cx="203.4" cy="434.3"/><circle cx="526.2" cy="670.3"/><circle cx="442.6" cy="555.8"/><circle cx="344.3" cy="368.5"/><circle cx="871.2" cy="362.6"/><circle cx="323.3" cy="545.7"/><circle cx="863.5" cy="169.4"/><circle cx="528.3" cy="209.5"/><circle cx="898" cy="552.1"/><circle cx="802.7" cy="554.5"/><circle cx="524.9" cy="615.6"/><circle cx="819.2" cy="574.5"/><circle cx="431.4" cy="293.2"/><circle cx="299.6" cy="300.5"/><circle cx="836.2" cy="330.1"/><circle cx="543.2" cy="244"/><circle cx="400.6" cy="488.3"/><circle cx="437.4" cy="467.3"/><circle cx="944.9" cy="545.8"/><circle cx="756.2" cy="247.3"/><circle cx="707.1" cy="352.8"/><circle cx="427.6" cy="641.5"/><circle cx="564.4" cy="108.3"/><circle cx="318" cy="220.4"/><circle cx="493.2" cy="183.5"/><circle cx="576" cy="245.2"/><circle cx="764" cy="133.3"/><circle cx="652.2" cy="353.7"/><circle cx="380.6" cy="192.4"/><circle cx="839.5" cy="618.5"/><circle cx="756.8" cy="442.8"/><circle cx="312" cy="219.8"/><circle cx="420.3" cy="308.3"/><circle cx="789.9" cy="633.3"/><circle cx="960" cy="285"/><circle cx="970.9" cy="279"/><circle cx="612.1" cy="521.4"/><circle cx="470.5" cy="368.9"/><circle cx="804.4" cy="148.3"/><circle cx="655.8" cy="490.4"/><circle cx="755.7" cy="329.3"/><circle cx="701" cy="276.2"/><circle cx="593.4" cy="220.6"/><circle cx="710.8" cy="461.5"/><circle cx="685.1" cy="180.7"/><circle cx="931.8" cy="303.6"/><circle cx="894.9" cy="190.1"/><circle cx="670.6" cy="546.2"/><circle cx="539.7" cy="386.5"/><circle cx="642.1" cy="238.1"/><circle cx="537.8" cy="193.9"/><circle cx="876.2" cy="234.6"/><circle cx="471.9" cy="155.8"/><circle cx="988.7" cy="505.4"/><circle cx="566.5" cy="570.8"/><circle cx="214.2" cy="364.1"/><circle cx="717.5" cy="455.2"/><circle cx="543.8" cy="265.3"/><circle cx="447.6" cy="120.5"/><circle cx="834.4" cy="177.7"/><circle cx="887.6" cy="195.4"/><circle cx="334.3" cy="398.7"/><circle cx="430.8" cy="639.9"/><circle cx="333.8" cy="624.1"/><circle cx="499.4" cy="675.1"/><circle cx="732.8" cy="485.1"/><circle cx="907" cy="323.2"/><circle cx="801.7" cy="173.2"/><circle cx="286.6" cy="231.1"/><circle cx="251" cy="363.3"/><circle cx="571.6" cy="128.3"/><circle cx="961.7" cy="278.6"/><circle cx="682.6" cy="446.2"/><circle cx="423" cy="558"/><circle cx="779.6" cy="617.7"/><circle cx="260.8" cy="391.7"/><circle cx="529" cy="403.6"/><circle cx="221.5" cy="405.8"/><circle cx="308.6" cy="505.4"/><circle cx="736.2" cy="660"/><circle cx="588.4" cy="563.6"/><circle cx="827.5" cy="423.2"/><circle cx="236.9" cy="329"/><circle cx="288.1" cy="428.5"/><circle cx="872" cy="519.6"/><circle cx="457.4" cy="497.3"/><circle cx="743" cy="234.5"/><circle cx="617.6" cy="520"/><circle cx="229.4" cy="495.9"/><circle cx="794.7" cy="529.1"/><circle cx="654.7" cy="303.5"/><circle cx="355.3" cy="406.9"/><circle cx="886.9" cy="328.4"/><circle cx="857.2" cy="299.3"/><circle cx="882.7" cy="374.9"/><circle cx="341" cy="187.3"/><circle cx="899.7" cy="400.3"/><circle cx="549.3" cy="524.8"/><circle cx="400.6" cy="437.7"/><circle cx="398.1" cy="623.3"/><circle cx="845.8" cy="555.9"/><circle cx="290.9" cy="531.5"/><circle cx="822.3" cy="405.5"/><circle cx="376.9" cy="480.2"/><circle cx="693.9" cy="621.4"/><circle cx="697.9" cy="538.6"/><circle cx="746.3" cy="634"/><circle cx="545.5" cy="278.3"/><circle cx="906.5" cy="334.5"/><circle cx="763.3" cy="588.1"/><circle cx="288.6" cy="544.9"/><circle cx="249.2" cy="432"/><circle cx="732.5" cy="441.6"/><circle cx="484.4" cy="541.3"/><circle cx="470.1" cy="486.6"/><circle cx="798.8" cy="194.2"/><circle cx="218.8" cy="350"/><circle cx="627.3" cy="122.8"/><circle cx="520.6" cy="277.5"/><circle cx="877.2" cy="368.8"/><circle cx="205.6" cy="355.4"/><circle cx="865.2" cy="277"/><circle cx="483.2" cy="246.7"/><circle cx="784.1" cy="254.9"/><circle cx="367.4" cy="312.3"/><circle cx="545.5" cy="565.4"/><circle cx="297.6" cy="228.4"/><circle cx="858.9" cy="365.5"/><circle cx="949" cy="348.2"/><circle cx="412" cy="473.5"/><circle cx="627" cy="535.3"/><circle cx="456.7" cy="359.2"/><circle cx="466.6" cy="428.4"/><circle cx="836.3" cy="588"/><circle cx="356" cy="180"/><circle cx="822.3" cy="334.1"/><circle cx="619.2" cy="598.6"/><circle cx="861.6" cy="565.9"/><circle cx="636.3" cy="151.2"/><circle cx="395.9" cy="418.9"/><circle cx="752.6" cy="212.3"/><circle cx="294.8" cy="204.8"/><circle cx="380.4" cy="540.2"/><circle cx="517.9" cy="442.7"/><circle cx="281" cy="367.5"/><circle cx="293.4" cy="242.7"/><circle cx="312.2" cy="240"/><circle cx="434.3" cy="580.6"/><circle cx="637.1" cy="175.1"/><circle cx="294.4" cy="574.8"/><circle cx="402.2" cy="310.5"/><circle cx="794.2" cy="147.6"/><circle cx="815" cy="450.5"/><circle cx="364" cy="412.8"/><circle cx="897.3" cy="194.2"/><circle cx="288.8" cy="429.8"/><circle cx="837.8" cy="569.4"/><circle cx="481.8" cy="156.4"/><circle cx="780.8" cy="224.8"/><circle cx="545.6" cy="308.2"/><circle cx="576.3" cy="651.4"/><circle cx="881.5" cy="473.8"/><circle cx="400.7" cy="366.1"/><circle cx="321.6" cy="290.2"/><circle cx="861.8" cy="529.9"/><circle cx="553.3" cy="450.4"/><circle cx="786.7" cy="516"/><circle cx="300.9" cy="298"/><circle cx="620.8" cy="142.6"/><circle cx="870.8" cy="547.9"/><circle cx="340.3" cy="415"/><circle cx="691.5" cy="561.7"/><circle cx="659.5" cy="336.5"/><circle cx="225.3" cy="505"/><circle cx="773.6" cy="588.1"/><circle cx="711.3" cy="293.6"/><circle cx="989.1" cy="425.7"/><circle cx="436.8" cy="316.1"/><circle cx="750.7" cy="612.4"/><circle cx="279.5" cy="283"/><circle cx="893.2" cy="389.6"/><circle cx="338.5" cy="409.9"/><circle cx="970.6" cy="335.5"/><circle cx="466.2" cy="528.9"/><circle cx="817.1" cy="529.9"/><circle cx="580.2" cy="247.2"/><circle cx="300.3" cy="446.9"/><circle cx="238.8" cy="491.8"/><circle cx="750.8" cy="383.8"/><circle cx="598.8" cy="606.3"/><circle cx="466.6" cy="289.4"/><circle cx="690.4" cy="299.2"/><circle cx="833.4" cy="642.1"/><circle cx="950.7" cy="275.3"/><circle cx="890.4" cy="608.9"/><circle cx="308" cy="479.3"/><circle cx="848.6" cy="496.4"/><circle cx="466.2" cy="482.9"/><circle cx="475.2" cy="462.2"/><circle cx="771.7" cy="573.4"/><circle cx="517.8" cy="175"/><circle cx="451.4" cy="261.8"/><circle cx="576.5" cy="500.3"/><circle cx="819.5" cy="575.8"/><circle cx="727.9" cy="672.7"/><circle cx="346.8" cy="379.1"/><circle cx="383.4" cy="608.8"/><circle cx="479.1" cy="657"/><circle cx="569" cy="191.7"/><circle cx="797.9" cy="377.6"/><circle cx="818.8" cy="468.9"/><circle cx="423.2" cy="607.1"/><circle cx="378.5" cy="497.4"/><circle cx="284.3" cy="541.6"/><circle cx="719.1" cy="468.9"/><circle cx="388" cy="646.2"/><circle cx="806.9" cy="238"/><circle cx="1004.4" cy="394.5"/><circle cx="782.7" cy="369.8"/><circle cx="247.1" cy="275.6"/><circle cx="660.5" cy="500.2"/><circle cx="515.3" cy="498.1"/><circle cx="587.3" cy="450.6"/><circle cx="613.4" cy="298.2"/><circle cx="227" cy="459.9"/><circle cx="577.7" cy="592.1"/><circle cx="437.7" cy="135"/><circle cx="610.7" cy="547.4"/><circle cx="421.9" cy="472.8"/><circle cx="911" cy="304.3"/><circle cx="992.8" cy="366.4"/><circle cx="547.1" cy="154.9"/><circle cx="726.3" cy="209.1"/><circle cx="677.4" cy="287.8"/><circle cx="657.7" cy="345.1"/><circle cx="495.1" cy="679.5"/><circle cx="629.1" cy="264.6"/><circle cx="949.7" cy="440.8"/><circle cx="321" cy="561.6"/><circle cx="477.6" cy="484.9"/><circle cx="891.1" cy="613"/><circle cx="242.6" cy="483"/><circle cx="488.2" cy="522.5"/><circle cx="342.6" cy="426.1"/><circle cx="642.1" cy="451.1"/><circle cx="502.2" cy="442.1"/><circle cx="606.4" cy="267.5"/><circle cx="429.3" cy="132.8"/><circle cx="292.7" cy="355.2"/><circle cx="300.9" cy="323.2"/><circle cx="370.1" cy="622.1"/><circle cx="411.2" cy="328.4"/><circle cx="540.9" cy="97.4"/><circle cx="373.3" cy="346.8"/><circle cx="990" cy="497.9"/><circle cx="433.3" cy="468.3"/><circle cx="989.8" cy="498.2"/><circle cx="251.5" cy="278.6"/><circle cx="501.7" cy="427.4"/><circle cx="462.5" cy="407.9"/><circle cx="326.4" cy="306.3"/><circle cx="517.1" cy="365.1"/><circle cx="509.3" cy="523.1"/><circle cx="283.1" cy="483.2"/><circle cx="927.5" cy="262.6"/><circle cx="810" cy="181.8"/><circle cx="590.7" cy="124"/><circle cx="841.1" cy="633.3"/><circle cx="426.3" cy="488.6"/><circle cx="478" cy="263.4"/><circle cx="553.4" cy="416.8"/><circle cx="646.2" cy="389"/><circle cx="617.3" cy="156.6"/><circle cx="362.6" cy="320.5"/><circle cx="753.6" cy="321.3"/><circle cx="777.4" cy="187.2"/><circle cx="363.9" cy="578.6"/><circle cx="375.3" cy="490.6"/><circle cx="840.2" cy="550.8"/><circle cx="930.7" cy="524.6"/><circle cx="782.6" cy="443.3"/><circle cx="673.6" cy="113.9"/><circle cx="325.1" cy="441.1"/><circle cx="479.8" cy="471.1"/><circle cx="746" cy="328.7"/><circle cx="823" cy="328.7"/><circle cx="718.3" cy="531.9"/><circle cx="532.6" cy="524.4"/><circle cx="842.4" cy="302.4"/><circle cx="371.7" cy="161.1"/><circle cx="664.7" cy="381.9"/><circle cx="235.9" cy="323.1"/><circle cx="846.2" cy="230.1"/><circle cx="799.5" cy="177.3"/><circle cx="915.7" cy="545.1"/><circle cx="224.8" cy="284.8"/><circle cx="513.6" cy="196.6"/><circle cx="808" cy="595.1"/><circle cx="642.7" cy="463.3"/><circle cx="536.3" cy="496.5"/><circle cx="572.9" cy="297.2"/><circle cx="596.4" cy="648.8"/><circle cx="794" cy="546.3"/><circle cx="606.8" cy="493.4"/><circle cx="419.6" cy="497.5"/><circle cx="612.6" cy="110.4"/><circle cx="728.8" cy="429.7"/><circle cx="300.4" cy="530.1"/><circle cx="836.2" cy="148.1"/><circle cx="982.6" cy="303.8"/><circle cx="494" cy="502.4"/><circle cx="895" cy="613.4"/><circle cx="964.7" cy="473.4"/><circle cx="555.3" cy="160.8"/><circle cx="798.1" cy="329.8"/><circle cx="468.3" cy="503.5"/><circle cx="655.2" cy="108"/><circle cx="499.9" cy="192.8"/><circle cx="684.7" cy="307.1"/><circle cx="728.4" cy="260.3"/><circle cx="313" cy="446.6"/><circle cx="603.1" cy="640.8"/><circle cx="861.5" cy="500.7"/><circle cx="987.7" cy="358.5"/><circle cx="889.6" cy="231.3"/><circle cx="239.5" cy="409.6"/><circle cx="431.1" cy="591.3"/><circle cx="468.1" cy="352.3"/><circle cx="794.9" cy="466.2"/><circle cx="544.3" cy="114.8"/><circle cx="960" cy="491.5"/><circle cx="759.6" cy="393.7"/><circle cx="546.7" cy="515.1"/><circle cx="393.5" cy="257.9"/><circle cx="353.8" cy="329.5"/><circle cx="548.8" cy="637.2"/><circle cx="534.6" cy="102.5"/><circle cx="532.1" cy="422.9"/><circle cx="874.2" cy="588.5"/><circle cx="932.3" cy="567"/><circle cx="629.6" cy="105.7"/><circle cx="675.4" cy="147.4"/><circle cx="590.9" cy="473.3"/><circle cx="391.3" cy="502.5"/><circle cx="225.8" cy="452.6"/><circle cx="712.3" cy="563.1"/><circle cx="400.6" cy="368.8"/><circle cx="747.1" cy="446"/><circle cx="424.7" cy="466.7"/><circle cx="654.7" cy="348.2"/><circle cx="564.7" cy="455.5"/><circle cx="398.2" cy="658.6"/><circle cx="525" cy="470.8"/><circle cx="959.4" cy="309.4"/><circle cx="344.4" cy="611.8"/><circle cx="477.6" cy="438.5"/><circle cx="729.3" cy="509"/><circle cx="662.3" cy="115.1"/><circle cx="611.1" cy="537.7"/><circle cx="655.4" cy="493.3"/><circle cx="634.2" cy="96.9"/><circle cx="949.3" cy="482.8"/><circle cx="252.5" cy="428.3"/><circle cx="739.2" cy="274.5"/><circle cx="844.4" cy="275.9"/><circle cx="792.1" cy="339.3"/><circle cx="640.1" cy="594.6"/><circle cx="886.6" cy="422.7"/><circle cx="454.4" cy="513.7"/><circle cx="905.6" cy="522.5"/><circle cx="347.1" cy="184.3"/><circle cx="882.6" cy="218.9"/><circle cx="458.9" cy="387.8"/><circle cx="665.8" cy="240.8"/><circle cx="526.2" cy="525.9"/><circle cx="871.8" cy="621.8"/><circle cx="556.6" cy="357.9"/><circle cx="822.1" cy="295.3"/><circle cx="937.8" cy="496.4"/><circle cx="743.1" cy="315"/><circle cx="325.2" cy="334.5"/><circle cx="852" cy="396.3"/><circle cx="800.3" cy="388.7"/><circle cx="667.1" cy="584.7"/><circle cx="391.8" cy="584.3"/><circle cx="464.1" cy="558.8"/><circle cx="926.2" cy="520.4"/><circle cx="324.3" cy="365"/><circle cx="473.7" cy="496.1"/><circle cx="597.2" cy="523.3"/><circle cx="298.1" cy="459.2"/><circle cx="469.9" cy="336.8"/><circle cx="287.9" cy="349.5"/><circle cx="655" cy="480.7"/><circle cx="698.6" cy="474"/><circle cx="521.8" cy="271.5"/><circle cx="687" cy="129.5"/><circle cx="863.4" cy="624.2"/><circle cx="421" cy="403.9"/><circle cx="498.2" cy="350"/><circle cx="838.2" cy="640.7"/><circle cx="626.7" cy="403.5"/><circle cx="359.4" cy="626"/><circle cx="636.3" cy="571"/><circle cx="864.1" cy="363.3"/><circle cx="524.3" cy="557.6"/><circle cx="682.7" cy="179.2"/><circle cx="534.7" cy="365.7"/><circle cx="693.4" cy="221.4"/><circle cx="816.1" cy="354.6"/><circle cx="586.9" cy="470.6"/><circle cx="874.6" cy="366.9"/><circle cx="458.5" cy="554.3"/><circle cx="481.2" cy="191.2"/><circle cx="354.7" cy="203.9"/><circle cx="365.8" cy="154.3"/><circle cx="914.2" cy="385"/><circle cx="987.2" cy="507"/><circle cx="488.9" cy="276.9"/><circle cx="399.1" cy="298.2"/><circle cx="623.6" cy="519.8"/><circle cx="673.6" cy="362"/><circle cx="742.7" cy="283.7"/><circle cx="780.6" cy="646.1"/><circle cx="595.1" cy="642.6"/><circle cx="598.1" cy="98.5"/><circle cx="625.1" cy="291"/><circle cx="930.4" cy="503.8"/><circle cx="566.2" cy="638.1"/><circle cx="623.5" cy="639.6"/><circle cx="772.3" cy="218.2"/><circle cx="824.9" cy="342.1"/><circle cx="768.4" cy="613.1"/><circle cx="628.7" cy="613.1"/><circle cx="750.2" cy="533.8"/><circle cx="811.3" cy="521.5"/><circle cx="263.5" cy="511.2"/><circle cx="350.8" cy="459"/><circle cx="406.3" cy="158.9"/><circle cx="753.4" cy="364.8"/><circle cx="771.7" cy="468.2"/><circle cx="779.7" cy="375.9"/><circle cx="411.7" cy="259.6"/><circle cx="476" cy="291.2"/><circle cx="704.2" cy="317.1"/><circle cx="663.2" cy="444.3"/><circle cx="399.8" cy="453.3"/><circle cx="936.9" cy="571.8"/><circle cx="974.7" cy="462.6"/><circle cx="432.1" cy="511.2"/><circle cx="799.9" cy="450.9"/><circle cx="556.1" cy="511.8"/><circle cx="1010.1" cy="459.9"/><circle cx="837.9" cy="223"/><circle cx="836.6" cy="626"/><circle cx="345.5" cy="260.4"/><circle cx="306.5" cy="274.1"/><circle cx="865.6" cy="373.3"/><circle cx="894.9" cy="363.9"/><circle cx="671.5" cy="534.4"/><circle cx="555.2" cy="532.9"/><circle cx="312.3" cy="313.8"/><circle cx="360.3" cy="460.9"/><circle cx="475.7" cy="656.6"/><circle cx="854.4" cy="504.1"/><circle cx="306.1" cy="603.5"/><circle cx="461.7" cy="376.4"/><circle cx="937.8" cy="358.8"/><circle cx="478.2" cy="601.4"/><circle cx="676.2" cy="256.7"/><circle cx="475.4" cy="567.4"/><circle cx="927.7" cy="523"/><circle cx="262.7" cy="244.5"/><circle cx="916.6" cy="253.2"/><circle cx="925.4" cy="357.1"/><circle cx="866.7" cy="263.1"/><circle cx="984.3" cy="356.8"/><circle cx="644.9" cy="373.9"/><circle cx="411.4" cy="656.4"/><circle cx="874.7" cy="187.8"/><circle cx="711.5" cy="210.2"/><circle cx="664" cy="289"/><circle cx="632.6" cy="280.4"/><circle cx="229.5" cy="340.4"/><circle cx="393.5" cy="615.5"/><circle cx="694.6" cy="167.5"/><circle cx="718.5" cy="287.8"/><circle cx="527.6" cy="131.5"/><circle cx="510.3" cy="356.5"/><circle cx="853.5" cy="275.3"/><circle cx="922.2" cy="526.5"/><circle cx="560.5" cy="467.6"/><circle cx="556.8" cy="170.3"/><circle cx="676.5" cy="397.4"/><circle cx="695.3" cy="658.8"/><circle cx="754.7" cy="215.9"/><circle cx="240.5" cy="396.6"/><circle cx="655.5" cy="313.3"/><circle cx="839.6" cy="337.3"/><circle cx="861" cy="507"/><circle cx="663.5" cy="494.4"/><circle cx="614.7" cy="296.5"/><circle cx="476.2" cy="680.1"/><circle cx="360.7" cy="591.9"/><circle cx="234.6" cy="339.6"/><circle cx="501.5" cy="269.4"/><circle cx="574.3" cy="206.4"/><circle cx="304.7" cy="199.4"/><circle cx="755.3" cy="350.7"/><circle cx="371.8" cy="517.9"/><circle cx="832" cy="522.9"/><circle cx="654.3" cy="208.6"/><circle cx="954.2" cy="302.3"/><circle cx="884.4" cy="191.3"/><circle cx="199.3" cy="391.2"/><circle cx="675.3" cy="570.3"/><circle cx="332.9" cy="247.3"/><circle cx="776.9" cy="491.2"/><circle cx="251.6" cy="368.1"/><circle cx="467.1" cy="371"/><circle cx="545.4" cy="315.2"/><circle cx="876.7" cy="256.2"/><circle cx="486.4" cy="426.5"/><circle cx="280.5" cy="246.3"/><circle cx="1004.2" cy="417.9"/><circle cx="544.4" cy="594.8"/><circle cx="325.3" cy="577.4"/><circle cx="550.4" cy="460.3"/><circle cx="340.8" cy="221.5"/><circle cx="540.7" cy="120.9"/><circle cx="380" cy="595.4"/><circle cx="470.8" cy="421.1"/><circle cx="789.2" cy="421.5"/><circle cx="314.1" cy="411.1"/><circle cx="737.3" cy="436.6"/><circle cx="540.1" cy="147.8"/><circle cx="337.3" cy="218.4"/><circle cx="733.5" cy="352.7"/><circle cx="374.8" cy="148.7"/><circle cx="414.9" cy="408.4"/><circle cx="510.2" cy="172.5"/><circle cx="545.2" cy="227.8"/><circle cx="474" cy="563.4"/><circle cx="699.1" cy="370.8"/><circle cx="696.5" cy="637.3"/><circle cx="969.9" cy="505.8"/><circle cx="589.4" cy="433.1"/><circle cx="828.9" cy="144.5"/><circle cx="413" cy="488.4"/><circle cx="448" cy="286.7"/><circle cx="660.8" cy="674.6"/><circle cx="230.9" cy="508.6"/><circle cx="346.3" cy="619.9"/><circle cx="439.4" cy="582.7"/><circle cx="693.7" cy="141.1"/><circle cx="930.4" cy="528.5"/><circle cx="849.4" cy="339.3"/><circle cx="869.1" cy="573.1"/><circle cx="714.6" cy="184.3"/><circle cx="773.6" cy="506.2"/><circle cx="769.2" cy="457.8"/><circle cx="622.5" cy="449"/><circle cx="769" cy="480"/><circle cx="345.4" cy="616.5"/><circle cx="743.6" cy="186.3"/><circle cx="277.8" cy="400.6"/><circle cx="632.3" cy="508.5"/><circle cx="347.3" cy="244.5"/><circle cx="896.6" cy="217.6"/><circle cx="883.9" cy="335.7"/><circle cx="956" cy="234.2"/><circle cx="674.3" cy="221.5"/><circle cx="639.1" cy="103.5"/><circle cx="895.9" cy="451.3"/><circle cx="249.6" cy="529.4"/><circle cx="570.7" cy="258.6"/><circle cx="737.9" cy="466"/><circle cx="528.2" cy="114"/><circle cx="430.3" cy="516.7"/><circle cx="765.8" cy="527.2"/><circle cx="490.6" cy="172.5"/><circle cx="449.8" cy="377.6"/><circle cx="564.7" cy="333.5"/><circle cx="823" cy="629.8"/><circle cx="645.2" cy="613.6"/><circle cx="467.7" cy="626.7"/><circle cx="541" cy="465.5"/><circle cx="604.5" cy="108.1"/><circle cx="678.5" cy="220.1"/><circle cx="670.8" cy="464.7"/><circle cx="379" cy="586"/><circle cx="265.5" cy="434.3"/><circle cx="333.5" cy="604.9"/><circle cx="588.2" cy="109.1"/><circle cx="409.7" cy="417.6"/><circle cx="544" cy="647.4"/><circle cx="762.4" cy="445.4"/><circle cx="471.6" cy="372.8"/><circle cx="890.4" cy="476.8"/><circle cx="488.7" cy="531.8"/><circle cx="320.5" cy="595.5"/><circle cx="432.7" cy="324.4"/><circle cx="741.4" cy="328.6"/><circle cx="631.4" cy="622.2"/><circle cx="643.6" cy="226.3"/><circle cx="879.8" cy="544.4"/><circle cx="377.3" cy="358.9"/><circle cx="827.6" cy="534.1"/><circle cx="779.9" cy="292.1"/><circle cx="426.6" cy="357.7"/><circle cx="843.6" cy="176.5"/><circle cx="476.5" cy="265.9"/><circle cx="808.1" cy="618.7"/><circle cx="438.1" cy="636"/><circle cx="624" cy="130.2"/><circle cx="623.9" cy="263.2"/><circle cx="653" cy="499.6"/><circle cx="786.9" cy="354.9"/><circle cx="398.8" cy="248.9"/><circle cx="459" cy="576"/><circle cx="577.7" cy="253.2"/><circle cx="662.1" cy="516"/><circle cx="314" cy="286.8"/><circle cx="559.3" cy="567.1"/><circle cx="426.6" cy="396.1"/><circle cx="288.1" cy="356.8"/><circle cx="366.7" cy="348.3"/><circle cx="367.3" cy="203.8"/><circle cx="826" cy="653.5"/><circle cx="583.4" cy="223.1"/><circle cx="300.6" cy="547.3"/><circle cx="502.3" cy="307.5"/><circle cx="769" cy="446.6"/><circle cx="433" cy="356.6"/><circle cx="468.4" cy="548.1"/><circle cx="272.1" cy="439.2"/><circle cx="617.4" cy="275.5"/><circle cx="442.9" cy="513.7"/><circle cx="372.7" cy="518.1"/><circle cx="460.9" cy="679.8"/><circle cx="811.3" cy="234.4"/><circle cx="363.7" cy="638.3"/><circle cx="743.2" cy="602.6"/><circle cx="266.6" cy="348.6"/><circle cx="925.4" cy="231.6"/><circle cx="716.6" cy="580"/><circle cx="339" cy="173.1"/><circle cx="592" cy="131.6"/><circle cx="259.9" cy="327.6"/><circle cx="1004.3" cy="400.1"/><circle cx="326.1" cy="365"/><circle cx="695.4" cy="490.1"/><circle cx="969.7" cy="354.5"/><circle cx="564.7" cy="149.5"/><circle cx="393.7" cy="271.7"/><circle cx="808.1" cy="154.6"/><circle cx="825" cy="555.3"/><circle cx="755.2" cy="653.6"/><circle cx="761.8" cy="251.7"/><circle cx="381.5" cy="402.1"/><circle cx="412.5" cy="630.3"/><circle cx="277.9" cy="333.3"/><circle cx="894" cy="500.8"/><circle cx="343.5" cy="422.3"/><circle cx="751.5" cy="171.2"/><circle cx="938.5" cy="265.8"/><circle cx="849.7" cy="392.9"/><circle cx="483.7" cy="152.2"/><circle cx="632.6" cy="608.6"/><circle cx="883.2" cy="617.5"/><circle cx="606.8" cy="685.9"/><circle cx="686.6" cy="217.1"/><circle cx="456.5" cy="478.5"/><circle cx="671.7" cy="559.9"/><circle cx="281.2" cy="427.5"/><circle cx="479.5" cy="684.6"/><circle cx="260.4" cy="333.6"/><circle cx="371.2" cy="324.6"/><circle cx="673.5" cy="443.3"/><circle cx="914.2" cy="412.5"/><circle cx="365.3" cy="564.7"/><circle cx="570.4" cy="153.6"/><circle cx="836.6" cy="626.1"/><circle cx="528" cy="164.2"/><circle cx="580.3" cy="421.7"/><circle cx="470.5" cy="268.8"/><circle cx="637.4" cy="235.9"/><circle cx="691.3" cy="163.8"/><circle cx="720.9" cy="271.7"/><circle cx="299.8" cy="504.8"/><circle cx="470.9" cy="273.8"/><circle cx="876.4" cy="298.1"/><circle cx="725.2" cy="518.1"/><circle cx="590.5" cy="351.8"/><circle cx="637.8" cy="185.2"/><circle cx="764.6" cy="336.9"/><circle cx="538.6" cy="429.4"/><circle cx="562.7" cy="593.7"/><circle cx="921.3" cy="307.4"/><circle cx="741.7" cy="206.4"/><circle cx="412" cy="363.4"/><circle cx="841.8" cy="427.7"/><circle cx="804.8" cy="333.3"/><circle cx="529.8" cy="557.1"/><circle cx="425.6" cy="364.5"/><circle cx="442.2" cy="660.7"/><circle cx="784.5" cy="632.1"/><circle cx="639.9" cy="185.1"/><circle cx="978.2" cy="397.4"/><circle cx="985.2" cy="368.7"/><circle cx="707.7" cy="682.2"/><circle cx="689.7" cy="112.8"/><circle cx="944.1" cy="360.3"/><circle cx="359.2" cy="167.5"/><circle cx="619.1" cy="371.6"/><circle cx="742.4" cy="192.9"/><circle cx="455" cy="332.9"/><circle cx="750.6" cy="654.5"/><circle cx="304" cy="353.7"/><circle cx="726.3" cy="105.3"/><circle cx="866.5" cy="253.8"/><circle cx="638.9" cy="658"/><circle cx="393.2" cy="380.7"/><circle cx="580.9" cy="547.7"/><circle cx="459.5" cy="322.1"/><circle cx="337.5" cy="336.9"/><circle cx="616.1" cy="398.8"/><circle cx="789.2" cy="266.1"/><circle cx="923" cy="542.5"/><circle cx="776.5" cy="268.3"/><circle cx="514.3" cy="431.2"/><circle cx="913.1" cy="267.8"/><circle cx="238.2" cy="378.1"/><circle cx="590.1" cy="150.3"/><circle cx="479.1" cy="645.2"/><circle cx="602.1" cy="513"/><circle cx="674.3" cy="229.1"/><circle cx="906.9" cy="190.5"/><circle cx="596" cy="183.6"/><circle cx="285.8" cy="215.7"/><circle cx="635" cy="527.7"/><circle cx="481.5" cy="304"/><circle cx="473.5" cy="581"/><circle cx="272.1" cy="249.9"/><circle cx="974.9" cy="330.5"/><circle cx="816.4" cy="289.8"/><circle cx="415.8" cy="479.8"/><circle cx="715.6" cy="150.1"/><circle cx="573.7" cy="102.8"/><circle cx="602.6" cy="329.4"/><circle cx="480.2" cy="652.1"/><circle cx="803" cy="309.8"/><circle cx="468.5" cy="630.6"/><circle cx="640.3" cy="505.6"/><circle cx="439" cy="295.2"/><circle cx="797.2" cy="448.3"/><circle cx="883.6" cy="227.1"/><circle cx="626.9" cy="438"/><circle cx="303.2" cy="309.8"/><circle cx="848.3" cy="507.8"/><circle cx="678.7" cy="136.9"/><circle cx="772" cy="636.9"/><circle cx="809.6" cy="304"/><circle cx="953.2" cy="299.5"/><circle cx="788.8" cy="526.9"/><circle cx="980.7" cy="495"/><circle cx="969" cy="385.5"/><circle cx="492.1" cy="453.5"/><circle cx="839.7" cy="322.3"/><circle cx="653.9" cy="297.5"/><circle cx="566.3" cy="423.1"/><circle cx="786.5" cy="531.6"/><circle cx="852.8" cy="466.7"/><circle cx="626.2" cy="568.4"/><circle cx="797.8" cy="627.4"/><circle cx="690" cy="301.2"/><circle cx="648.7" cy="231.3"/><circle cx="541.8" cy="503.9"/><circle cx="609" cy="621.5"/><circle cx="322.5" cy="378.4"/><circle cx="368.3" cy="494.1"/><circle cx="843.4" cy="588.3"/><circle cx="673.9" cy="551.2"/><circle cx="799.7" cy="459.3"/><circle cx="510.7" cy="179.7"/><circle cx="655.3" cy="229"/><circle cx="458.9" cy="506.6"/><circle cx="504.2" cy="134.3"/><circle cx="704.1" cy="506.9"/><circle cx="845" cy="385.7"/><circle cx="924.7" cy="208.1"/><circle cx="576.7" cy="157.5"/><circle cx="633.3" cy="519.1"/><circle cx="569.2" cy="368.3"/><circle cx="677" cy="416.1"/><circle cx="905.5" cy="516.8"/><circle cx="581.4" cy="629.3"/><circle cx="883.4" cy="534.7"/><circle cx="834" cy="289.5"/><circle cx="506.9" cy="192.9"/><circle cx="462.5" cy="556.9"/><circle cx="922.3" cy="533.8"/><circle cx="688.1" cy="385"/><circle cx="745.4" cy="419"/><circle cx="318.8" cy="333.7"/><circle cx="279.9" cy="453.8"/><circle cx="850.2" cy="169.5"/><circle cx="679.8" cy="443.2"/><circle cx="785.3" cy="342.7"/><circle cx="615.4" cy="422.2"/><circle cx="821.5" cy="612.5"/><circle cx="814.4" cy="401.8"/><circle cx="592.5" cy="264.7"/><circle cx="868.6" cy="410.5"/><circle cx="370.2" cy="579.8"/><circle cx="887.6" cy="389"/><circle cx="592.8" cy="382.7"/><circle cx="667.8" cy="480.4"/><circle cx="949.1" cy="431.3"/><circle cx="509.1" cy="682.5"/><circle cx="950.4" cy="544.3"/><circle cx="961.2" cy="461.6"/><circle cx="857.3" cy="423.3"/><circle cx="829.1" cy="588.6"/><circle cx="589.4" cy="471.5"/><circle cx="801" cy="457.5"/><circle cx="415.3" cy="526.9"/><circle cx="891.1" cy="258.7"/><circle cx="730" cy="463.3"/><circle cx="774.1" cy="405.6"/><circle cx="658" cy="213.1"/><circle cx="442.9" cy="165"/><circle cx="812.6" cy="528.7"/><circle cx="314.3" cy="297.2"/><circle cx="549.6" cy="304.2"/><circle cx="863.8" cy="281.7"/><circle cx="493.9" cy="596.7"/><circle cx="813.9" cy="420.7"/><circle cx="551.7" cy="273.7"/><circle cx="883.6" cy="259"/><circle cx="334.5" cy="597.4"/><circle cx="509.3" cy="574.1"/><circle cx="433.4" cy="147.2"/><circle cx="360" cy="275.4"/><circle cx="558.5" cy="300.8"/><circle cx="710.1" cy="283.5"/><circle cx="593" cy="694"/><circle cx="594.3" cy="246.8"/><circle cx="834.6" cy="179.9"/><circle cx="503.8" cy="340.8"/><circle cx="320.6" cy="240.8"/><circle cx="685.3" cy="242.4"/><circle cx="353.6" cy="538.2"/><circle cx="765.5" cy="541.6"/><circle cx="464.3" cy="409.1"/><circle cx="818.4" cy="213.7"/><circle cx="738.2" cy="111.6"/><circle cx="500.7" cy="175.8"/><circle cx="597.6" cy="324.9"/><circle cx="421" cy="338"/><circle cx="829" cy="417.1"/><circle cx="364.3" cy="326.5"/><circle cx="501.3" cy="466.4"/><circle cx="868.8" cy="276.5"/><circle cx="318.3" cy="501.7"/><circle cx="703.2" cy="198"/><circle cx="643.6" cy="116.9"/><circle cx="661.5" cy="281.2"/><circle cx="293.4" cy="257.4"/><circle cx="268.3" cy="443.2"/><circle cx="693.2" cy="470.3"/><circle cx="887.8" cy="294.8"/><circle cx="836" cy="368.1"/><circle cx="731.5" cy="445.6"/><circle cx="874.2" cy="180.7"/><circle cx="697.1" cy="321.1"/><circle cx="369.9" cy="370.5"/><circle cx="557.9" cy="110.6"/><circle cx="809.8" cy="653"/><circle cx="642.1" cy="166.9"/><circle cx="479.1" cy="301.6"/><circle cx="782.1" cy="350.5"/><circle cx="847.5" cy="580.9"/><circle cx="522.9" cy="315.6"/><circle cx="458.8" cy="452.4"/><circle cx="600.8" cy="684.6"/><circle cx="474.4" cy="309.1"/><circle cx="520.7" cy="345.1"/><circle cx="675.2" cy="131.6"/><circle cx="300.8" cy="571.9"/><circle cx="526" cy="459.1"/><circle cx="808.4" cy="296.3"/><circle cx="525.6" cy="156.6"/><circle cx="588.6" cy="651.2"/><circle cx="609.1" cy="206"/><circle cx="762.7" cy="223"/><circle cx="929.3" cy="366.9"/><circle cx="562.8" cy="435.8"/><circle cx="650.4" cy="183"/><circle cx="589.2" cy="384.4"/><circle cx="391.4" cy="606"/><circle cx="851.2" cy="369.1"/><circle cx="658.2" cy="164.4"/><circle cx="522.5" cy="534.1"/><circle cx="526.3" cy="264.6"/><circle cx="745.4" cy="539.2"/><circle cx="842.9" cy="610.5"/><circle cx="350.2" cy="446.4"/><circle cx="966.1" cy="437"/><circle cx="456.5" cy="469.1"/><circle cx="849.2" cy="301.4"/><circle cx="414.6" cy="524.1"/><circle cx="506.7" cy="141.2"/><circle cx="353.2" cy="629.1"/><circle cx="480.1" cy="662.6"/><circle cx="882.1" cy="390.8"/><circle cx="614.8" cy="595.6"/><circle cx="731.3" cy="364.7"/><circle cx="424.5" cy="324.4"/><circle cx="604.4" cy="381.4"/><circle cx="708.2" cy="397"/><circle cx="602.3" cy="135.1"/></g><g class="pt" fill="#f5c842"><circle cx="403.9" cy="195.9"/><circle cx="426.2" cy="196.2"/><circle cx="455.8" cy="196.9"/><circle cx="475" cy="198"/><circle cx="482.8" cy="198.2"/><circle cx="493.6" cy="201.8"/><circle cx="401.9" cy="201.6"/><circle cx="481.2" cy="204.2"/><circle cx="528.4" cy="206.3"/><circle cx="380.8" cy="206.3"/><circle cx="384.7" cy="213.5"/><circle cx="391" cy="212.3"/><circle cx="415.9" cy="207.8"/><circle cx="412.7" cy="212.5"/><circle cx="405" cy="213"/><circle cx="427.3" cy="208.9"/><circle cx="434.5" cy="206.8"/><circle cx="439.7" cy="211.4"/><circle cx="430.4" cy="214.6"/><circle cx="423.1" cy="215.6"/><circle cx="445.9" cy="213.5"/><circle cx="452.2" cy="212.5"/><circle cx="458.4" cy="209.4"/><circle cx="460.5" cy="205.7"/><circle cx="467.7" cy="208.3"/><circle cx="470.8" cy="213.5"/><circle cx="464.6" cy="214.6"/><circle cx="408.6" cy="217.7"/><circle cx="417.9" cy="219.7"/><circle cx="435.6" cy="217.7"/><circle cx="443.9" cy="218.2"/><circle cx="450.1" cy="217.7"/><circle cx="473.9" cy="218.2"/><circle cx="480.2" cy="220.3"/><circle cx="495.7" cy="217.2"/><circle cx="508.7" cy="217.9"/><circle cx="512.3" cy="217.9"/><circle cx="524.2" cy="221.1"/><circle cx="400.3" cy="228.2"/><circle cx="410.7" cy="226"/><circle cx="419" cy="224.9"/><circle cx="439.2" cy="227.8"/><circle cx="491.1" cy="226.5"/><circle cx="452.2" cy="231.2"/><circle cx="498.8" cy="230.6"/><circle cx="374.9" cy="232.4"/><circle cx="382.7" cy="233.7"/><circle cx="407.6" cy="235.8"/><circle cx="416.9" cy="234.3"/><circle cx="414.8" cy="230.1"/><circle cx="458.4" cy="234.8"/><circle cx="475.5" cy="235.3"/><circle cx="494.7" cy="235.3"/><circle cx="500.9" cy="235.8"/><circle cx="508.2" cy="234.1"/><circle cx="517" cy="236.9"/><circle cx="529.9" cy="232.2"/></g><circle cx="463.4" cy="223.7" r="6.5" fill="#f0a73c"/><path d="M142 53V744.2M141 743.2H1073.6" stroke="#3a3a3a" stroke-width="2" fill="none"/><path d="M141 122.9h-8.5M141 214.2h-8.5M141 305.5h-8.5M141 396.8h-8.5M141 488.1h-8.5M141 579.4h-8.5M141 670.7h-8.5M212.9 744.2v8.5M410.4 744.2v8.5M607.9 744.2v8.5M805.4 744.2v8.5M1002.9 744.2v8.5" stroke="#3a3a3a" stroke-width="1.6" fill="none"/><g font-family='"DejaVu Sans", Verdana, sans-serif' font-size="21.3" fill="#444b55"><text x="127.5" y="130.6" text-anchor="end">−36.85</text><text x="127.5" y="221.9" text-anchor="end">−36.9</text><text x="127.5" y="313.2" text-anchor="end">−36.95</text><text x="127.5" y="404.5" text-anchor="end">−37</text><text x="127.5" y="495.8" text-anchor="end">−37.05</text><text x="127.5" y="587.1" text-anchor="end">−37.1</text><text x="127.5" y="678.4" text-anchor="end">−37.15</text><text x="212.9" y="779.5" text-anchor="middle">62.2</text><text x="410.4" y="779.5" text-anchor="middle">62.1</text><text x="607.9" y="779.5" text-anchor="middle">62</text><text x="805.4" y="779.5" text-anchor="middle">61.9</text><text x="1002.9" y="779.5" text-anchor="middle">61.8</text></g><g font-family='"DejaVu Sans", Verdana, sans-serif' font-size="21.9" fill="#444b55"><text x="608" y="824.3" text-anchor="middle">coord_ra (deg)</text><text transform="translate(25 397.5) rotate(-90)" text-anchor="middle">coord_dec (deg)</text></g></svg>
<div style="left:7.4px;top:1065.8px;width:2396.6px;height:600px;border:1px solid #cdd7e1;border-radius:9px;box-sizing:border-box;background:#F0F4F8"></div>
<div style="left:8.4px;top:1129px;width:2390.6px;height:530px;background:#FBFCFE"></div>
<div style="left:8.4px;top:1128.6px;width:2390.6px;height:1.2px;background:#d3dbe4"></div>
<div style="left:12.4px;top:1069.4px;width:27.8px;height:28.6px;background:#E4EEFA;border-radius:8px"></div>
<div style="left:17.1px;top:1075.2px;width:18px;height:17.6px;background:#ee35ee;border-radius:4.5px"></div>
<div class="t" style="top:1073.9px;font-size:20.4px;line-height:20.4px;color:#555E68;left:44.6px;"><span>dp02_dc2_catalogs.Object - ...</span></div>
<svg style="left:327px;top:1074px;" width="18" height="18" viewBox="0 0 18 18"><path d="M2.600 2.800L14.600 15.400M14.600 2.800L2.600 15.400" stroke="#555E68" stroke-width="1.800"/></svg>
<svg style="left:929.8px;top:1078px;" width="39.6" height="39.6" viewBox="0 0 24 24"><path fill="#32383E" d="M18.41 16.59L13.82 12l4.59-4.59L17 6l-6 6 6 6zM6 6h2v12H6z"/></svg>
<svg style="left:977.8px;top:1078.4px;" width="38.9" height="38.9" viewBox="0 0 24 24"><path fill="#32383E" d="M15.41 7.41L14 6l-6 6 6 6 1.41-1.41L10.83 12z"/></svg>
<div style="left:1020.4px;top:1076.4px;width:64.8px;height:42.8px;border:1px solid #cdd7e1;border-radius:11px;box-sizing:border-box;background:#FBFCFE;box-shadow:0 1px 2px rgba(21,21,21,.08)"></div>
<div class="t" style="top:1088.9px;font-size:20.4px;line-height:20.4px;color:#32383E;left:1034.6px;"><span>1</span></div>
<div class="t" style="top:1088.9px;font-size:20.4px;line-height:20.4px;color:#555E68;letter-spacing:-0.15px;left:1093.8px;"><span>of 44</span></div>
<svg style="left:1143px;top:1078.9px;" width="37.7" height="37.7" viewBox="0 0 24 24"><path fill="#32383E" d="M10 6L8.59 7.41 13.17 12l-4.58 4.59L10 18l6-6z"/></svg>
<svg style="left:1189.8px;top:1078.6px;" width="38.3" height="38.3" viewBox="0 0 24 24"><path fill="#32383E" d="M5.59 7.41L10.18 12l-4.59 4.59L7 18l6-6-6-6zM16 6h2v12h-2z"/></svg>
<div class="t" style="top:1088.9px;font-size:20.4px;line-height:20.4px;color:#555E68;letter-spacing:-0.46px;left:1233.5px;"><span>(1 - 100 of 4,302)</span></div>
<svg style="left:1960.9px;top:1071.3px;" width="53.5" height="53.5" viewBox="0 0 24 24"><path fill="#32383E" d="M7 19c-1.1 0-2 .9-2 2h14c0-1.1-.9-2-2-2h-4v-2h3c1.1 0 2-.9 2-2h-8c-1.66 0-3-1.34-3-3 0-1.09.59-2.04 1.46-2.56C8.17 9.03 8 8.54 8 8c0-.21.04-.42.09-.62C6.28 8.13 5 9.92 5 12c0 2.76 2.24 5 5 5v2H7zM10.56 5.51C11.91 5.54 13 6.64 13 8c0 .75-.33 1.41-.85 1.87l.59 1.62.94-.34.34.94 1.88-.68-.34-.94.94-.34L13.76 2.6l-.94.34L12.48 2l-1.88.68.34.94-.94.35.56 1.54zM10.500 6.500a1.500 1.500 0 100 3 1.500 1.500 0 000-3z"/></svg>
<svg style="left:1957px;top:1112.5px;" width="19.5" height="12.5" viewBox="0 0 19.5 12.5"><path d="M2.7 2.3 H16.8 L9.8 10.2 Z" fill="#32383E" stroke="#32383E" stroke-width="3" stroke-linejoin="round"/></svg>
<svg style="left:2024.2px;top:1075.1px;" width="45.3" height="45.3" viewBox="0 0 24 24"><path fill="#32383E" d="M7 6h10l-5.01 6.3L7 6zm-2.750-.390C6.270 8.200 10 13 10 13v6c0 .550.450 1 1 1h2c.550 0 1-.450 1-1v-6s3.720-4.800 5.740-7.390c.510-.660.040-1.610-.790-1.610H5.040c-.830 0-1.300.950-.790 1.610z"/></svg>
<svg style="left:2078px;top:1075.2px;" width="45.7" height="45.7" viewBox="0 0 24 24"><path fill="#32383E" d="M2.5 4v3h5v12h3V7h5V4h-13zm19 5h-9v3h3v7h3v-7h3V9z"/></svg>
<svg style="left:2133.6px;top:1073px;" width="49.4" height="49.4" viewBox="0 0 24 24"><path fill="#32383E" d="M17 3H5c-1.11 0-2 .9-2 2v14c0 1.1.89 2 2 2h14c1.1 0 2-.9 2-2V7l-4-4zm2 16H5V5h11.17L19 7.83V19zm-7-7c-1.66 0-3 1.34-3 3s1.34 3 3 3 3-1.34 3-3-1.34-3-3-3zM6 6h9v4H6z"/></svg>
<svg style="left:2195px;top:1076px;" width="48" height="42" viewBox="0 0 48 42"><rect x="4.6" y="4.200" width="12.200" height="33.800" rx="2" fill="none" stroke="#32383E" stroke-width="3.6"/><circle cx="33.6" cy="22" r="10" fill="none" stroke="#32383E" stroke-width="2.2"/><path d="M28 22H39.200M33.600 16.400V27.600" stroke="#32383E" stroke-width="2.2"/></svg>
<svg style="left:2245px;top:1072.9px;" width="50.1" height="50.1" viewBox="0 0 24 24"><path fill="#32383E" d="M11 7h2v2h-2zm0 4h2v6h-2zm1-9C6.48 2 2 6.48 2 12s4.48 10 10 10 10-4.48 10-10S17.52 2 12 2zm0 18c-4.41 0-8-3.59-8-8s3.59-8 8-8 8 3.59 8 8-3.59 8-8 8z"/></svg>
<svg style="left:2304.3px;top:1074.3px;" width="46.5" height="46.5" viewBox="0 0 24 24"><path fill="#32383E" d="M19.43 12.98c.04-.32.07-.64.07-.98 0-.34-.03-.66-.07-.98l2.11-1.65c.19-.15.24-.42.12-.64l-2-3.46c-.09-.16-.26-.25-.44-.25-.06 0-.12.01-.17.03l-2.49 1c-.52-.4-1.08-.73-1.69-.98l-.38-2.65C14.46 2.18 14.25 2 14 2h-4c-.25 0-.46.18-.49.42l-.38 2.65c-.61.25-1.17.59-1.69.98l-2.49-1c-.06-.02-.12-.03-.18-.03-.17 0-.34.09-.43.25l-2 3.46c-.13.22-.07.49.12.64l2.11 1.65c-.04.32-.07.65-.07.98 0 .33.03.66.07.98l-2.11 1.65c-.19.15-.24.42-.12.64l2 3.46c.09.16.26.25.44.25.06 0 .12-.01.17-.03l2.49-1c.52.4 1.08.73 1.69.98l.38 2.65c.03.24.24.42.49.42h4c.25 0 .46-.18.49-.42l.38-2.65c.61-.25 1.17-.59 1.69-.98l2.49 1c.06.02.12.03.18.03.17 0 .34-.09.43-.25l2-3.46c.12-.22.07-.49-.12-.64l-2.11-1.65zm-1.98-1.71c.04.31.05.52.05.73 0 .21-.02.43-.05.73l-.14 1.13.89.7 1.08.84-.7 1.21-1.27-.51-1.04-.42-.9.68c-.43.32-.84.56-1.25.73l-1.06.43-.16 1.13-.2 1.35h-1.4l-.19-1.35-.16-1.13-1.06-.43c-.43-.18-.83-.41-1.23-.71l-.91-.7-1.06.43-1.27.51-.7-1.21 1.08-.84.89-.7-.14-1.13c-.03-.31-.05-.54-.05-.74s.02-.43.05-.73l.14-1.13-.89-.7-1.08-.84.7-1.21 1.27.51 1.04.42.9-.68c.43-.32.84-.56 1.25-.73l1.06-.43.16-1.13.2-1.35h1.39l.19 1.35.16 1.13 1.06.43c.43.18.83.41 1.23.71l.91.7 1.06-.43 1.27-.51.7 1.21-1.07.85-.89.7.14 1.13zM12 8c-2.21 0-4 1.79-4 4s1.79 4 4 4 4-1.79 4-4-1.79-4-4-4zm0 6c-1.1 0-2-.9-2-2s.9-2 2-2 2 .9 2 2-.9 2-2 2z"/></svg>
<svg style="left:2356.1px;top:1076.8px;" width="42.3" height="42.3" viewBox="0 0 24 24"><path fill="#32383E" d="M21 11V3h-8l3.29 3.29-10 10L3 13v8h8l-3.29-3.29 10-10z" transform="translate(24,0) scale(-1,1)"/></svg>
<div style="left:9px;top:1476.5px;width:2366px;height:35.3px;background:#f9e0c4"></div>
<div style="left:9px;top:1260.3px;width:1962px;height:1px;background:#e4e9ef"></div>
<div style="left:9px;top:1296.2px;width:1962px;height:1px;background:#e4e9ef"></div>
<div style="left:9px;top:1332px;width:1962px;height:1px;background:#e4e9ef"></div>
<div style="left:9px;top:1367.9px;width:1962px;height:1px;background:#e4e9ef"></div>
<div style="left:9px;top:1403.8px;width:1962px;height:1px;background:#e4e9ef"></div>
<div style="left:9px;top:1439.6px;width:1962px;height:1px;background:#e4e9ef"></div>
<div style="left:9px;top:1475.5px;width:1962px;height:1px;background:#e4e9ef"></div>
<div style="left:9px;top:1511.4px;width:1962px;height:1px;background:#e4e9ef"></div>
<div style="left:9px;top:1547.3px;width:1962px;height:1px;background:#e4e9ef"></div>
<div style="left:9px;top:1583.1px;width:1962px;height:1px;background:#e4e9ef"></div>
<div style="left:9px;top:1619px;width:1962px;height:1px;background:#e4e9ef"></div>
<div style="left:9px;top:1654.9px;width:1962px;height:1px;background:#e4e9ef"></div>
<div style="left:52px;top:1129.6px;width:1px;height:530px;background:#cfd8e2"></div>
<div style="left:192px;top:1129.6px;width:1px;height:530px;background:#cfd8e2"></div>
<div style="left:317px;top:1129.6px;width:1px;height:530px;background:#cfd8e2"></div>
<div style="left:516px;top:1129.6px;width:1px;height:530px;background:#cfd8e2"></div>
<div style="left:704px;top:1129.6px;width:1px;height:530px;background:#cfd8e2"></div>
<div style="left:915px;top:1129.6px;width:1px;height:530px;background:#cfd8e2"></div>
<div style="left:1126px;top:1129.6px;width:1px;height:530px;background:#cfd8e2"></div>
<div style="left:1336px;top:1129.6px;width:1px;height:530px;background:#cfd8e2"></div>
<div style="left:1547px;top:1129.6px;width:1px;height:530px;background:#cfd8e2"></div>
<div style="left:1759px;top:1129.6px;width:1px;height:530px;background:#cfd8e2"></div>
<div style="left:1970px;top:1129.6px;width:1px;height:530px;background:#cfd8e2"></div>
<div style="left:18px;top:1133.7px;width:25px;height:24.6px;border:1px solid #cdd7e1;border-radius:5.5px;box-sizing:border-box;background:#FBFCFE"></div>
<svg style="left:13.5px;top:1219.8px;" width="32.9" height="32.9" viewBox="0 0 24 24"><path fill="#23272b" d="M7 6h10l-5.01 6.3L7 6zm-2.750-.390C6.270 8.200 10 13 10 13v6c0 .550.450 1 1 1h2c.550 0 1-.450 1-1v-6s3.720-4.800 5.740-7.390c.510-.660.040-1.610-.790-1.610H5.040c-.830 0-1.300.950-.790 1.610z"/></svg>
<div class="t" style="top:1137.3px;font-size:20.4px;line-height:20.4px;color:#1d2024;letter-spacing:0.26px;left:-377.6px;width:1000px;text-align:center;"><span>coord_dec</span></div>
<div class="t" style="top:1164.1px;font-size:20.4px;line-height:20.4px;color:#555E68;letter-spacing:-0.24px;left:-377.6px;width:1000px;text-align:center;"><span>(deg)</span></div>
<div class="t" style="top:1190px;font-size:20.4px;line-height:20.4px;color:#555E68;letter-spacing:0.58px;left:-377.6px;width:1000px;text-align:center;"><span>double</span></div>
<div style="left:57.7px;top:1213.8px;width:129.9px;height:42.2px;border:1px solid #cdd7e1;border-radius:10.5px;box-sizing:border-box;background:#FBFCFE;box-shadow:0 1.5px 2.5px rgba(21,21,21,.09)"></div>
<div class="t" style="top:1137.3px;font-size:20.4px;line-height:20.4px;color:#1d2024;letter-spacing:0.20px;left:-245.2px;width:1000px;text-align:center;"><span>coord_ra</span></div>
<div class="t" style="top:1164.1px;font-size:20.4px;line-height:20.4px;color:#555E68;letter-spacing:-0.24px;left:-245.2px;width:1000px;text-align:center;"><span>(deg)</span></div>
<div class="t" style="top:1190px;font-size:20.4px;line-height:20.4px;color:#555E68;letter-spacing:0.58px;left:-245.2px;width:1000px;text-align:center;"><span>double</span></div>
<div style="left:197.4px;top:1213.8px;width:115.4px;height:42.2px;border:1px solid #cdd7e1;border-radius:10.5px;box-sizing:border-box;background:#FBFCFE;box-shadow:0 1.5px 2.5px rgba(21,21,21,.09)"></div>
<div class="t" style="top:1137.3px;font-size:20.4px;line-height:20.4px;color:#1d2024;letter-spacing:0.33px;left:-83.2px;width:1000px;text-align:center;"><span>detect_isPrimary</span></div>
<div class="t" style="top:1190px;font-size:20.4px;line-height:20.4px;color:#555E68;letter-spacing:0.22px;left:-83.2px;width:1000px;text-align:center;"><span>boolean</span></div>
<div style="left:322.6px;top:1213.8px;width:189px;height:42.2px;border:1px solid #cdd7e1;border-radius:10.5px;box-sizing:border-box;background:#FBFCFE;box-shadow:0 1.5px 2.5px rgba(21,21,21,.09)"></div>
<div class="t" style="top:1137.3px;font-size:20.4px;line-height:20.4px;color:#1d2024;letter-spacing:-0.10px;left:110.2px;width:1000px;text-align:center;"><span>refExtendedness</span></div>
<div class="t" style="top:1190px;font-size:20.4px;line-height:20.4px;color:#555E68;letter-spacing:0.58px;left:110.2px;width:1000px;text-align:center;"><span>double</span></div>
<div style="left:521.4px;top:1213.8px;width:178.2px;height:42.2px;border:1px solid #cdd7e1;border-radius:10.5px;box-sizing:border-box;background:#FBFCFE;box-shadow:0 1.5px 2.5px rgba(21,21,21,.09)"></div>
<div class="t" style="top:1137.3px;font-size:20.4px;line-height:20.4px;color:#1d2024;letter-spacing:-0.03px;left:309.7px;width:1000px;text-align:center;"><span>u_cModelMag</span></div>
<div class="t" style="top:1190px;font-size:20.4px;line-height:20.4px;color:#555E68;letter-spacing:0.58px;left:309.7px;width:1000px;text-align:center;"><span>double</span></div>
<div style="left:709.4px;top:1213.8px;width:201.1px;height:42.2px;border:1px solid #cdd7e1;border-radius:10.5px;box-sizing:border-box;background:#FBFCFE;box-shadow:0 1.5px 2.5px rgba(21,21,21,.09)"></div>
<div class="t" style="top:1137.3px;font-size:20.4px;line-height:20.4px;color:#1d2024;letter-spacing:-0.07px;left:520.5px;width:1000px;text-align:center;"><span>g_cModelMag</span></div>
<div class="t" style="top:1190px;font-size:20.4px;line-height:20.4px;color:#555E68;letter-spacing:0.58px;left:520.5px;width:1000px;text-align:center;"><span>double</span></div>
<div style="left:920.3px;top:1213.8px;width:201.1px;height:42.2px;border:1px solid #cdd7e1;border-radius:10.5px;box-sizing:border-box;background:#FBFCFE;box-shadow:0 1.5px 2.5px rgba(21,21,21,.09)"></div>
<div class="t" style="top:1137.3px;font-size:20.4px;line-height:20.4px;color:#1d2024;letter-spacing:0.03px;left:731.5px;width:1000px;text-align:center;"><span>r_cModelMag</span></div>
<div class="t" style="top:1190px;font-size:20.4px;line-height:20.4px;color:#555E68;letter-spacing:0.58px;left:731.5px;width:1000px;text-align:center;"><span>double</span></div>
<div style="left:1131.2px;top:1213.8px;width:201.1px;height:42.2px;border:1px solid #cdd7e1;border-radius:10.5px;box-sizing:border-box;background:#FBFCFE;box-shadow:0 1.5px 2.5px rgba(21,21,21,.09)"></div>
<div class="t" style="top:1137.3px;font-size:20.4px;line-height:20.4px;color:#1d2024;letter-spacing:0.05px;left:942.3px;width:1000px;text-align:center;"><span>i_cModelMag</span></div>
<div class="t" style="top:1190px;font-size:20.4px;line-height:20.4px;color:#555E68;letter-spacing:0.58px;left:942.3px;width:1000px;text-align:center;"><span>double</span></div>
<div style="left:1342.1px;top:1213.8px;width:201.1px;height:42.2px;border:1px solid #cdd7e1;border-radius:10.5px;box-sizing:border-box;background:#FBFCFE;box-shadow:0 1.5px 2.5px rgba(21,21,21,.09)"></div>
<div class="t" style="top:1137.3px;font-size:20.4px;line-height:20.4px;color:#1d2024;letter-spacing:-0.19px;left:1153.8px;width:1000px;text-align:center;"><span>z_cModelMag</span></div>
<div class="t" style="top:1190px;font-size:20.4px;line-height:20.4px;color:#555E68;letter-spacing:0.58px;left:1153.8px;width:1000px;text-align:center;"><span>double</span></div>
<div style="left:1553px;top:1213.8px;width:202.2px;height:42.2px;border:1px solid #cdd7e1;border-radius:10.5px;box-sizing:border-box;background:#FBFCFE;box-shadow:0 1.5px 2.5px rgba(21,21,21,.09)"></div>
<div class="t" style="top:1137.3px;font-size:20.4px;line-height:20.4px;color:#1d2024;letter-spacing:-0.03px;left:1365.4px;width:1000px;text-align:center;"><span>y_cModelMag</span></div>
<div class="t" style="top:1190px;font-size:20.4px;line-height:20.4px;color:#555E68;letter-spacing:0.58px;left:1365.4px;width:1000px;text-align:center;"><span>double</span></div>
<div style="left:1765px;top:1213.8px;width:201.4px;height:42.2px;border:1px solid #cdd7e1;border-radius:10.5px;box-sizing:border-box;background:#FBFCFE;box-shadow:0 1.5px 2.5px rgba(21,21,21,.09)"></div>
<svg style="left:486px;top:1232px;" width="14" height="8" viewBox="0 0 14 8"><path d="M1.200 1.200H12.300L6.750 6.800Z" fill="#555E68"/></svg>
<div style="left:18px;top:1266.3px;width:25px;height:24.8px;border:1px solid #cdd7e1;border-radius:5.5px;box-sizing:border-box;background:#FBFCFE"></div>
<div class="t" style="top:1269.1px;font-size:20.4px;line-height:20.4px;color:#32383E;letter-spacing:-0.57px;left:-812.3px;width:1000px;text-align:right;"><span>-36.9024377</span></div>
<div class="t" style="top:1269.1px;font-size:20.4px;line-height:20.4px;color:#32383E;letter-spacing:-0.56px;left:-687.1px;width:1000px;text-align:right;"><span>62.0037681</span></div>
<div class="t" style="top:1269.1px;font-size:20.4px;line-height:20.4px;color:#32383E;letter-spacing:0.49px;left:322.2px;"><span>true</span></div>
<div class="t" style="top:1269.1px;font-size:20.4px;line-height:20.4px;color:#32383E;letter-spacing:0.16px;left:-300.3px;width:1000px;text-align:right;"><span>1</span></div>
<div class="t" style="top:1269.1px;font-size:20.4px;line-height:20.4px;color:#32383E;letter-spacing:-0.60px;left:-89.4px;width:1000px;text-align:right;"><span>24.410008157606562</span></div>
<div class="t" style="top:1269.1px;font-size:20.4px;line-height:20.4px;color:#32383E;letter-spacing:-0.60px;left:121.5px;width:1000px;text-align:right;"><span>24.50142168409341</span></div>
<div class="t" style="top:1269.1px;font-size:20.4px;line-height:20.4px;color:#32383E;letter-spacing:-0.51px;left:332.4px;width:1000px;text-align:right;"><span>24.156993006078118</span></div>
<div class="t" style="top:1269.1px;font-size:20.4px;line-height:20.4px;color:#32383E;letter-spacing:-0.51px;left:543.3px;width:1000px;text-align:right;"><span>23.71865342531127</span></div>
<div class="t" style="top:1269.1px;font-size:20.4px;line-height:20.4px;color:#32383E;letter-spacing:-0.60px;left:755.3px;width:1000px;text-align:right;"><span>23.35404916608198</span></div>
<div class="t" style="top:1269.1px;font-size:20.4px;line-height:20.4px;color:#32383E;letter-spacing:-0.60px;left:966.5px;width:1000px;text-align:right;"><span>23.21371606164957</span></div>
<div style="left:18px;top:1302.2px;width:25px;height:24.8px;border:1px solid #cdd7e1;border-radius:5.5px;box-sizing:border-box;background:#FBFCFE"></div>
<div class="t" style="top:1305px;font-size:20.4px;line-height:20.4px;color:#32383E;letter-spacing:-0.57px;left:-812.3px;width:1000px;text-align:right;"><span>-36.9027973</span></div>
<div class="t" style="top:1305px;font-size:20.4px;line-height:20.4px;color:#32383E;letter-spacing:-0.56px;left:-687.1px;width:1000px;text-align:right;"><span>62.0088887</span></div>
<div class="t" style="top:1305px;font-size:20.4px;line-height:20.4px;color:#32383E;letter-spacing:0.49px;left:322.2px;"><span>true</span></div>
<div class="t" style="top:1305px;font-size:20.4px;line-height:20.4px;color:#32383E;letter-spacing:0.16px;left:-300.3px;width:1000px;text-align:right;"><span>1</span></div>
<div class="t" style="top:1305px;font-size:20.4px;line-height:20.4px;color:#32383E;letter-spacing:-0.60px;left:-89.4px;width:1000px;text-align:right;"><span>24.93789343644652</span></div>
<div class="t" style="top:1305px;font-size:20.4px;line-height:20.4px;color:#32383E;letter-spacing:-0.60px;left:121.5px;width:1000px;text-align:right;"><span>24.58289161034825</span></div>
<div class="t" style="top:1305px;font-size:20.4px;line-height:20.4px;color:#32383E;letter-spacing:-0.60px;left:332.4px;width:1000px;text-align:right;"><span>24.66473204649698</span></div>
<div class="t" style="top:1305px;font-size:20.4px;line-height:20.4px;color:#32383E;letter-spacing:-0.60px;left:543.3px;width:1000px;text-align:right;"><span>24.58882549121389</span></div>
<div class="t" style="top:1305px;font-size:20.4px;line-height:20.4px;color:#32383E;letter-spacing:-0.59px;left:755.3px;width:1000px;text-align:right;"><span>24.3294204700048</span></div>
<div class="t" style="top:1305px;font-size:20.4px;line-height:20.4px;color:#32383E;letter-spacing:-0.60px;left:966.5px;width:1000px;text-align:right;"><span>24.319296298687735</span></div>
<div style="left:18px;top:1338.1px;width:25px;height:24.8px;background:#2c6bcb;border-radius:5.5px"></div>
<svg style="left:18px;top:1338.1px;" width="25" height="24.8" viewBox="0 0 25 24.8"><path d="M6 12.800L10.400 17.200L19.200 7.600" fill="none" stroke="#fff" stroke-width="2.4" stroke-linecap="round" stroke-linejoin="round"/></svg>
<div class="t" style="top:1340.9px;font-size:20.4px;line-height:20.4px;color:#32383E;letter-spacing:-0.57px;left:-812.3px;width:1000px;text-align:right;"><span>-36.9036671</span></div>
<div class="t" style="top:1340.9px;font-size:20.4px;line-height:20.4px;color:#32383E;letter-spacing:-0.56px;left:-687.1px;width:1000px;text-align:right;"><span>62.0423854</span></div>
<div class="t" style="top:1340.9px;font-size:20.4px;line-height:20.4px;color:#32383E;letter-spacing:0.49px;left:322.2px;"><span>true</span></div>
<div class="t" style="top:1340.9px;font-size:20.4px;line-height:20.4px;color:#32383E;letter-spacing:0.16px;left:-300.3px;width:1000px;text-align:right;"><span>1</span></div>
<div class="t" style="top:1340.9px;font-size:20.4px;line-height:20.4px;color:#32383E;letter-spacing:-0.51px;left:-89.4px;width:1000px;text-align:right;"><span>22.600112448217367</span></div>
<div class="t" style="top:1340.9px;font-size:20.4px;line-height:20.4px;color:#32383E;letter-spacing:-0.60px;left:121.5px;width:1000px;text-align:right;"><span>22.439542763501066</span></div>
<div class="t" style="top:1340.9px;font-size:20.4px;line-height:20.4px;color:#32383E;letter-spacing:-0.60px;left:332.4px;width:1000px;text-align:right;"><span>21.868166083423098</span></div>
<div class="t" style="top:1340.9px;font-size:20.4px;line-height:20.4px;color:#32383E;letter-spacing:-0.60px;left:543.3px;width:1000px;text-align:right;"><span>21.08617580963997</span></div>
<div class="t" style="top:1340.9px;font-size:20.4px;line-height:20.4px;color:#32383E;letter-spacing:-0.60px;left:755.3px;width:1000px;text-align:right;"><span>20.87385609922945</span></div>
<div class="t" style="top:1340.9px;font-size:20.4px;line-height:20.4px;color:#32383E;letter-spacing:-0.60px;left:966.5px;width:1000px;text-align:right;"><span>20.75086455330853</span></div>
<div style="left:18px;top:1373.9px;width:25px;height:24.8px;border:1px solid #cdd7e1;border-radius:5.5px;box-sizing:border-box;background:#FBFCFE"></div>
<div class="t" style="top:1376.7px;font-size:20.4px;line-height:20.4px;color:#32383E;letter-spacing:-0.57px;left:-812.3px;width:1000px;text-align:right;"><span>-36.9029098</span></div>
<div class="t" style="top:1376.7px;font-size:20.4px;line-height:20.4px;color:#32383E;letter-spacing:-0.56px;left:-687.1px;width:1000px;text-align:right;"><span>62.0184482</span></div>
<div class="t" style="top:1376.7px;font-size:20.4px;line-height:20.4px;color:#32383E;letter-spacing:0.49px;left:322.2px;"><span>true</span></div>
<div class="t" style="top:1376.7px;font-size:20.4px;line-height:20.4px;color:#32383E;letter-spacing:0.16px;left:-300.3px;width:1000px;text-align:right;"><span>1</span></div>
<div class="t" style="top:1376.7px;font-size:20.4px;line-height:20.4px;color:#32383E;letter-spacing:-0.60px;left:-89.4px;width:1000px;text-align:right;"><span>24.54498814415261</span></div>
<div class="t" style="top:1376.7px;font-size:20.4px;line-height:20.4px;color:#32383E;letter-spacing:-0.60px;left:121.5px;width:1000px;text-align:right;"><span>24.327818376933358</span></div>
<div class="t" style="top:1376.7px;font-size:20.4px;line-height:20.4px;color:#32383E;letter-spacing:-0.60px;left:332.4px;width:1000px;text-align:right;"><span>23.398983226560382</span></div>
<div class="t" style="top:1376.7px;font-size:20.4px;line-height:20.4px;color:#32383E;letter-spacing:-0.60px;left:543.3px;width:1000px;text-align:right;"><span>22.478459608625677</span></div>
<div class="t" style="top:1376.7px;font-size:20.4px;line-height:20.4px;color:#32383E;letter-spacing:-0.60px;left:755.3px;width:1000px;text-align:right;"><span>21.731592495575264</span></div>
<div class="t" style="top:1376.7px;font-size:20.4px;line-height:20.4px;color:#32383E;letter-spacing:-0.60px;left:966.5px;width:1000px;text-align:right;"><span>21.346019371952032</span></div>
<div style="left:18px;top:1409.8px;width:25px;height:24.8px;border:1px solid #cdd7e1;border-radius:5.5px;box-sizing:border-box;background:#FBFCFE"></div>
<div class="t" style="top:1412.6px;font-size:20.4px;line-height:20.4px;color:#32383E;letter-spacing:-0.57px;left:-812.3px;width:1000px;text-align:right;"><span>-36.9032276</span></div>
<div class="t" style="top:1412.6px;font-size:20.4px;line-height:20.4px;color:#32383E;letter-spacing:-0.56px;left:-687.1px;width:1000px;text-align:right;"><span>62.1585982</span></div>
<div class="t" style="top:1412.6px;font-size:20.4px;line-height:20.4px;color:#32383E;letter-spacing:0.49px;left:322.2px;"><span>true</span></div>
<div class="t" style="top:1412.6px;font-size:20.4px;line-height:20.4px;color:#32383E;letter-spacing:0.16px;left:-300.3px;width:1000px;text-align:right;"><span>1</span></div>
<div class="t" style="top:1412.6px;font-size:20.4px;line-height:20.4px;color:#32383E;letter-spacing:-0.51px;left:-89.4px;width:1000px;text-align:right;"><span>24.485915523711494</span></div>
<div class="t" style="top:1412.6px;font-size:20.4px;line-height:20.4px;color:#32383E;letter-spacing:-0.51px;left:121.5px;width:1000px;text-align:right;"><span>24.557963237641157</span></div>
<div class="t" style="top:1412.6px;font-size:20.4px;line-height:20.4px;color:#32383E;letter-spacing:-0.60px;left:332.4px;width:1000px;text-align:right;"><span>24.48381600039275</span></div>
<div class="t" style="top:1412.6px;font-size:20.4px;line-height:20.4px;color:#32383E;letter-spacing:-0.60px;left:543.3px;width:1000px;text-align:right;"><span>24.073540268606564</span></div>
<div class="t" style="top:1412.6px;font-size:20.4px;line-height:20.4px;color:#32383E;letter-spacing:-0.60px;left:755.3px;width:1000px;text-align:right;"><span>23.479739509377957</span></div>
<div class="t" style="top:1412.6px;font-size:20.4px;line-height:20.4px;color:#32383E;letter-spacing:-0.60px;left:966.5px;width:1000px;text-align:right;"><span>23.706037209404357</span></div>
<div style="left:18px;top:1445.7px;width:25px;height:24.8px;border:1px solid #cdd7e1;border-radius:5.5px;box-sizing:border-box;background:#FBFCFE"></div>
<div class="t" style="top:1448.5px;font-size:20.4px;line-height:20.4px;color:#32383E;letter-spacing:-0.57px;left:-812.3px;width:1000px;text-align:right;"><span>-36.9034003</span></div>
<div class="t" style="top:1448.5px;font-size:20.4px;line-height:20.4px;color:#32383E;letter-spacing:-0.56px;left:-687.1px;width:1000px;text-align:right;"><span>62.1204486</span></div>
<div class="t" style="top:1448.5px;font-size:20.4px;line-height:20.4px;color:#32383E;letter-spacing:0.49px;left:322.2px;"><span>true</span></div>
<div class="t" style="top:1448.5px;font-size:20.4px;line-height:20.4px;color:#32383E;letter-spacing:0.16px;left:-300.3px;width:1000px;text-align:right;"><span>1</span></div>
<div class="t" style="top:1448.5px;font-size:20.4px;line-height:20.4px;color:#32383E;letter-spacing:-0.60px;left:-89.4px;width:1000px;text-align:right;"><span>24.66571791820762</span></div>
<div class="t" style="top:1448.5px;font-size:20.4px;line-height:20.4px;color:#32383E;letter-spacing:-0.60px;left:121.5px;width:1000px;text-align:right;"><span>24.920027202832898</span></div>
<div class="t" style="top:1448.5px;font-size:20.4px;line-height:20.4px;color:#32383E;letter-spacing:-0.60px;left:332.4px;width:1000px;text-align:right;"><span>24.72724990039594</span></div>
<div class="t" style="top:1448.5px;font-size:20.4px;line-height:20.4px;color:#32383E;letter-spacing:-0.60px;left:543.3px;width:1000px;text-align:right;"><span>24.662745329505064</span></div>
<div class="t" style="top:1448.5px;font-size:20.4px;line-height:20.4px;color:#32383E;letter-spacing:-0.51px;left:755.3px;width:1000px;text-align:right;"><span>23.811329305779704</span></div>
<div class="t" style="top:1448.5px;font-size:20.4px;line-height:20.4px;color:#32383E;letter-spacing:-0.60px;left:966.5px;width:1000px;text-align:right;"><span>23.57169749691542</span></div>
<div style="left:18px;top:1481.6px;width:25px;height:24.8px;background:#2c6bcb;border-radius:5.5px"></div>
<svg style="left:18px;top:1481.6px;" width="25" height="24.8" viewBox="0 0 25 24.8"><path d="M6 12.800L10.400 17.200L19.200 7.600" fill="none" stroke="#fff" stroke-width="2.4" stroke-linecap="round" stroke-linejoin="round"/></svg>
<div class="t" style="top:1484.4px;font-size:20.4px;line-height:20.4px;color:#32383E;letter-spacing:-0.57px;left:-812.3px;width:1000px;text-align:right;"><span>-36.9049797</span></div>
<div class="t" style="top:1484.4px;font-size:20.4px;line-height:20.4px;color:#32383E;letter-spacing:-0.56px;left:-687.1px;width:1000px;text-align:right;"><span>62.0733937</span></div>
<div class="t" style="top:1484.4px;font-size:20.4px;line-height:20.4px;color:#32383E;letter-spacing:0.49px;left:322.2px;"><span>true</span></div>
<div class="t" style="top:1484.4px;font-size:20.4px;line-height:20.4px;color:#32383E;letter-spacing:0.16px;left:-300.3px;width:1000px;text-align:right;"><span>1</span></div>
<div class="t" style="top:1484.4px;font-size:20.4px;line-height:20.4px;color:#32383E;letter-spacing:-0.60px;left:-89.4px;width:1000px;text-align:right;"><span>24.96294070102595</span></div>
<div class="t" style="top:1484.4px;font-size:20.4px;line-height:20.4px;color:#32383E;letter-spacing:-0.60px;left:121.5px;width:1000px;text-align:right;"><span>24.97327366834604</span></div>
<div class="t" style="top:1484.4px;font-size:20.4px;line-height:20.4px;color:#32383E;letter-spacing:-0.60px;left:332.4px;width:1000px;text-align:right;"><span>24.642168102713406</span></div>
<div class="t" style="top:1484.4px;font-size:20.4px;line-height:20.4px;color:#32383E;letter-spacing:-0.60px;left:543.3px;width:1000px;text-align:right;"><span>24.218363563614098</span></div>
<div class="t" style="top:1484.4px;font-size:20.4px;line-height:20.4px;color:#32383E;letter-spacing:-0.60px;left:755.3px;width:1000px;text-align:right;"><span>23.587061874785448</span></div>
<div class="t" style="top:1484.4px;font-size:20.4px;line-height:20.4px;color:#32383E;letter-spacing:-0.60px;left:966.5px;width:1000px;text-align:right;"><span>22.951597699633442</span></div>
<div style="left:18px;top:1517.4px;width:25px;height:24.8px;border:1px solid #cdd7e1;border-radius:5.5px;box-sizing:border-box;background:#FBFCFE"></div>
<div class="t" style="top:1520.2px;font-size:20.4px;line-height:20.4px;color:#32383E;letter-spacing:-0.57px;left:-812.3px;width:1000px;text-align:right;"><span>-36.9019859</span></div>
<div class="t" style="top:1520.2px;font-size:20.4px;line-height:20.4px;color:#32383E;letter-spacing:-0.41px;left:-687.1px;width:1000px;text-align:right;"><span>62.1210911</span></div>
<div class="t" style="top:1520.2px;font-size:20.4px;line-height:20.4px;color:#32383E;letter-spacing:0.49px;left:322.2px;"><span>true</span></div>
<div class="t" style="top:1520.2px;font-size:20.4px;line-height:20.4px;color:#32383E;letter-spacing:0.16px;left:-300.3px;width:1000px;text-align:right;"><span>1</span></div>
<div class="t" style="top:1520.2px;font-size:20.4px;line-height:20.4px;color:#32383E;letter-spacing:-0.60px;left:-89.4px;width:1000px;text-align:right;"><span>22.576775416903917</span></div>
<div class="t" style="top:1520.2px;font-size:20.4px;line-height:20.4px;color:#32383E;letter-spacing:-0.51px;left:121.5px;width:1000px;text-align:right;"><span>22.680873278211937</span></div>
<div class="t" style="top:1520.2px;font-size:20.4px;line-height:20.4px;color:#32383E;letter-spacing:-0.60px;left:332.4px;width:1000px;text-align:right;"><span>22.49828589389064</span></div>
<div class="t" style="top:1520.2px;font-size:20.4px;line-height:20.4px;color:#32383E;letter-spacing:-0.60px;left:543.3px;width:1000px;text-align:right;"><span>22.390178154463882</span></div>
<div class="t" style="top:1520.2px;font-size:20.4px;line-height:20.4px;color:#32383E;letter-spacing:-0.60px;left:755.3px;width:1000px;text-align:right;"><span>21.82978017473745</span></div>
<div class="t" style="top:1520.2px;font-size:20.4px;line-height:20.4px;color:#32383E;letter-spacing:-0.60px;left:966.5px;width:1000px;text-align:right;"><span>21.70351374565685</span></div>
<div style="left:18px;top:1553.3px;width:25px;height:24.8px;border:1px solid #cdd7e1;border-radius:5.5px;box-sizing:border-box;background:#FBFCFE"></div>
<div class="t" style="top:1556.1px;font-size:20.4px;line-height:20.4px;color:#32383E;letter-spacing:-0.57px;left:-812.3px;width:1000px;text-align:right;"><span>-36.9042931</span></div>
<div class="t" style="top:1556.1px;font-size:20.4px;line-height:20.4px;color:#32383E;letter-spacing:-0.41px;left:-687.1px;width:1000px;text-align:right;"><span>62.1197818</span></div>
<div class="t" style="top:1556.1px;font-size:20.4px;line-height:20.4px;color:#32383E;letter-spacing:0.49px;left:322.2px;"><span>true</span></div>
<div class="t" style="top:1556.1px;font-size:20.4px;line-height:20.4px;color:#32383E;letter-spacing:0.16px;left:-300.3px;width:1000px;text-align:right;"><span>1</span></div>
<div class="t" style="top:1556.1px;font-size:20.4px;line-height:20.4px;color:#32383E;letter-spacing:-0.60px;left:-89.4px;width:1000px;text-align:right;"><span>23.132362898780375</span></div>
<div class="t" style="top:1556.1px;font-size:20.4px;line-height:20.4px;color:#32383E;letter-spacing:-0.60px;left:121.5px;width:1000px;text-align:right;"><span>22.93996768070224</span></div>
<div class="t" style="top:1556.1px;font-size:20.4px;line-height:20.4px;color:#32383E;letter-spacing:-0.60px;left:332.4px;width:1000px;text-align:right;"><span>22.248572470156446</span></div>
<div class="t" style="top:1556.1px;font-size:20.4px;line-height:20.4px;color:#32383E;letter-spacing:-0.60px;left:543.3px;width:1000px;text-align:right;"><span>21.66092946239479</span></div>
<div class="t" style="top:1556.1px;font-size:20.4px;line-height:20.4px;color:#32383E;letter-spacing:-0.60px;left:755.3px;width:1000px;text-align:right;"><span>21.52184438196747</span></div>
<div class="t" style="top:1556.1px;font-size:20.4px;line-height:20.4px;color:#32383E;letter-spacing:-0.42px;left:966.5px;width:1000px;text-align:right;"><span>21.46359334837111</span></div>
<div style="left:18px;top:1589.2px;width:25px;height:24.8px;border:1px solid #cdd7e1;border-radius:5.5px;box-sizing:border-box;background:#FBFCFE"></div>
<div class="t" style="top:1592px;font-size:20.4px;line-height:20.4px;color:#32383E;letter-spacing:-0.56px;left:-812.3px;width:1000px;text-align:right;"><span>-36.903936</span></div>
<div class="t" style="top:1592px;font-size:20.4px;line-height:20.4px;color:#32383E;letter-spacing:-0.41px;left:-687.1px;width:1000px;text-align:right;"><span>62.1194015</span></div>
<div class="t" style="top:1592px;font-size:20.4px;line-height:20.4px;color:#32383E;letter-spacing:0.49px;left:322.2px;"><span>true</span></div>
<div class="t" style="top:1592px;font-size:20.4px;line-height:20.4px;color:#32383E;letter-spacing:0.16px;left:-300.3px;width:1000px;text-align:right;"><span>1</span></div>
<div class="t" style="top:1592px;font-size:20.4px;line-height:20.4px;color:#32383E;letter-spacing:-0.60px;left:-89.4px;width:1000px;text-align:right;"><span>23.782857485280903</span></div>
<div class="t" style="top:1592px;font-size:20.4px;line-height:20.4px;color:#32383E;letter-spacing:-0.60px;left:121.5px;width:1000px;text-align:right;"><span>23.869003597409225</span></div>
<div class="t" style="top:1592px;font-size:20.4px;line-height:20.4px;color:#32383E;letter-spacing:-0.51px;left:332.4px;width:1000px;text-align:right;"><span>23.841720541144063</span></div>
<div class="t" style="top:1592px;font-size:20.4px;line-height:20.4px;color:#32383E;letter-spacing:-0.60px;left:543.3px;width:1000px;text-align:right;"><span>23.749407032415146</span></div>
<div class="t" style="top:1592px;font-size:20.4px;line-height:20.4px;color:#32383E;letter-spacing:-0.60px;left:755.3px;width:1000px;text-align:right;"><span>23.463424828948288</span></div>
<div class="t" style="top:1592px;font-size:20.4px;line-height:20.4px;color:#32383E;letter-spacing:-0.60px;left:966.5px;width:1000px;text-align:right;"><span>23.61468175943927</span></div>
<div style="left:18px;top:1625px;width:25px;height:24.8px;border:1px solid #cdd7e1;border-radius:5.5px;box-sizing:border-box;background:#FBFCFE"></div>
<div class="t" style="top:1627.8px;font-size:20.4px;line-height:20.4px;color:#32383E;letter-spacing:-0.57px;left:-812.3px;width:1000px;text-align:right;"><span>-36.9035847</span></div>
<div class="t" style="top:1627.8px;font-size:20.4px;line-height:20.4px;color:#32383E;letter-spacing:-0.56px;left:-687.1px;width:1000px;text-align:right;"><span>62.1220503</span></div>
<div class="t" style="top:1627.8px;font-size:20.4px;line-height:20.4px;color:#32383E;letter-spacing:0.49px;left:322.2px;"><span>true</span></div>
<div class="t" style="top:1627.8px;font-size:20.4px;line-height:20.4px;color:#32383E;letter-spacing:0.16px;left:-300.3px;width:1000px;text-align:right;"><span>1</span></div>
<div class="t" style="top:1627.8px;font-size:20.4px;line-height:20.4px;color:#32383E;letter-spacing:-0.60px;left:-89.4px;width:1000px;text-align:right;"><span>23.704472202586906</span></div>
<div class="t" style="top:1627.8px;font-size:20.4px;line-height:20.4px;color:#32383E;letter-spacing:-0.60px;left:121.5px;width:1000px;text-align:right;"><span>23.819265644524645</span></div>
<div class="t" style="top:1627.8px;font-size:20.4px;line-height:20.4px;color:#32383E;letter-spacing:-0.60px;left:332.4px;width:1000px;text-align:right;"><span>23.917641783577423</span></div>
<div class="t" style="top:1627.8px;font-size:20.4px;line-height:20.4px;color:#32383E;letter-spacing:-0.60px;left:543.3px;width:1000px;text-align:right;"><span>24.008961738008132</span></div>
<div class="t" style="top:1627.8px;font-size:20.4px;line-height:20.4px;color:#32383E;letter-spacing:-0.60px;left:755.3px;width:1000px;text-align:right;"><span>23.917833948828964</span></div>
<div class="t" style="top:1627.8px;font-size:20.4px;line-height:20.4px;color:#32383E;letter-spacing:-0.60px;left:966.5px;width:1000px;text-align:right;"><span>23.672978821018667</span></div>
<div style="left:2375px;top:1260px;width:25px;height:400px;background:#FBFCFE;border-left:1px solid #dfe5ec"></div>
<div style="left:2383.4px;top:1269px;width:11.4px;height:38px;background:#cbd4de;border-radius:6px"></div>
<div style="left:9px;top:1651px;width:2390px;height:3px;background:linear-gradient(#e9edf1,#c9ced4)"></div></div></body></html>
